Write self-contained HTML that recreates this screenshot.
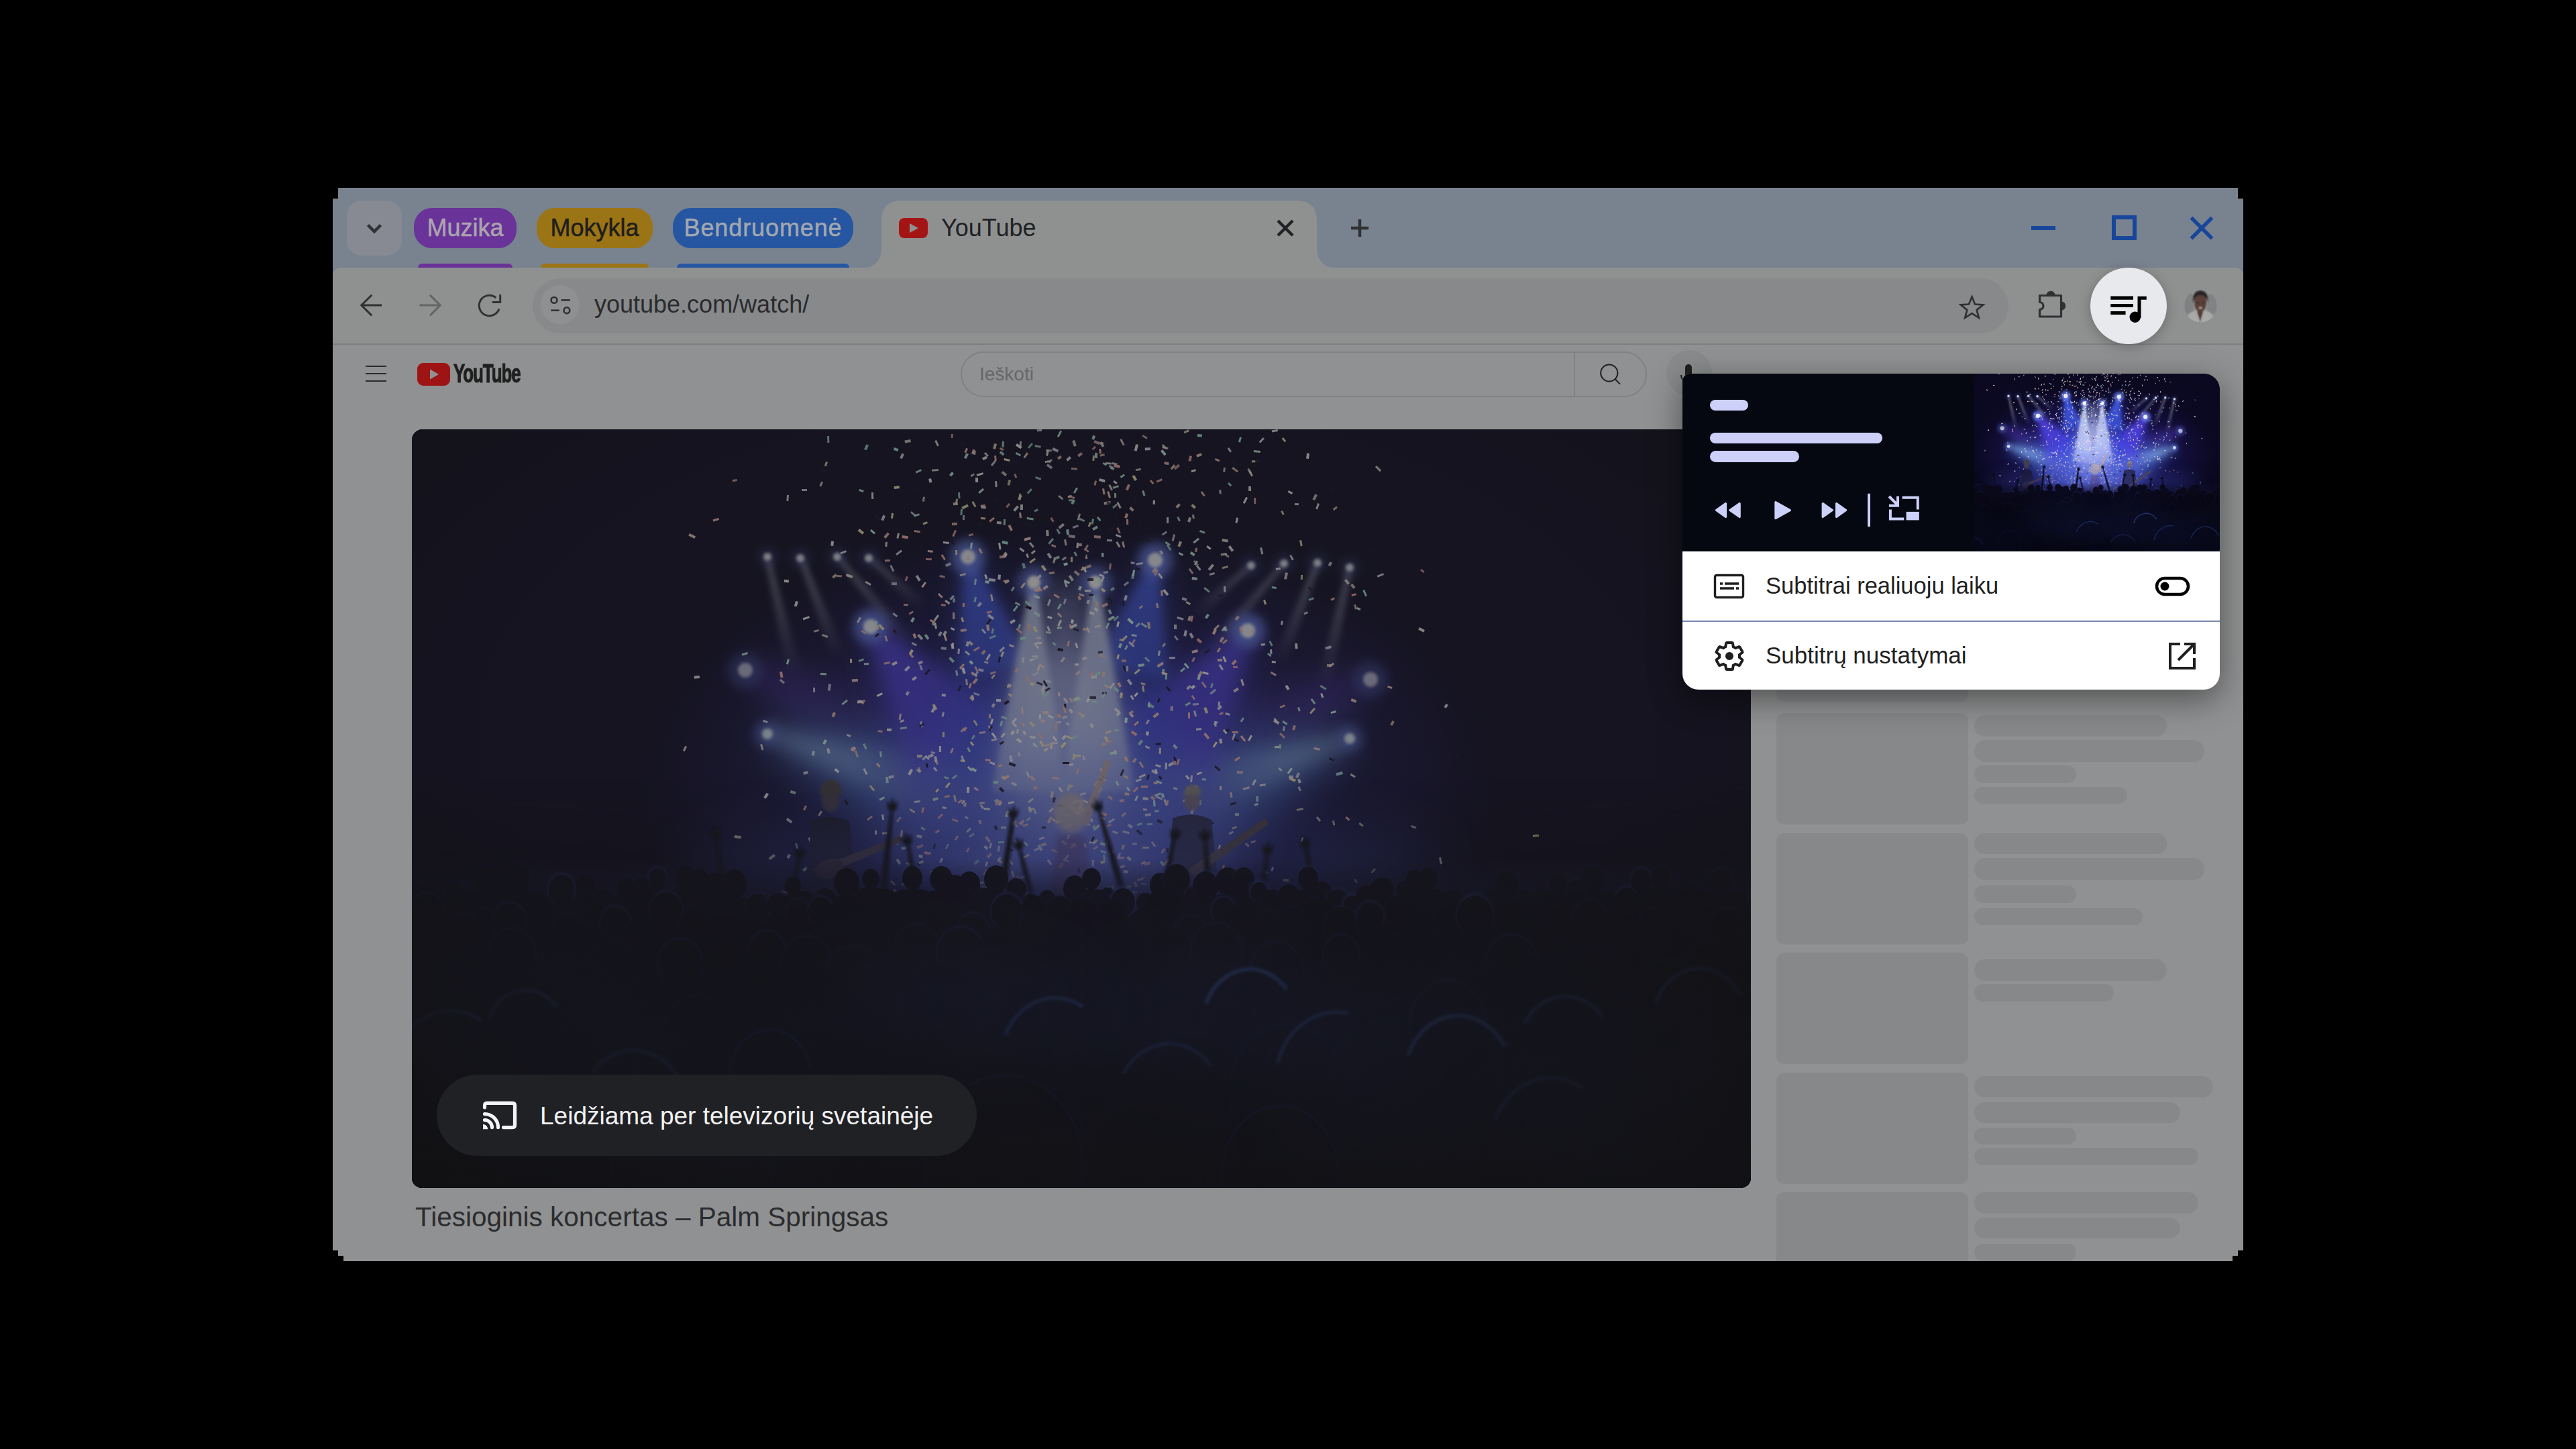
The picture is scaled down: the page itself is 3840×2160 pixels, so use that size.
<!DOCTYPE html>
<html><head><meta charset="utf-8">
<style>
*{box-sizing:border-box;margin:0;padding:0}
html,body{width:3840px;height:2160px;background:#000;overflow:hidden;font-family:"Liberation Sans",sans-serif}
.a{position:absolute}
#win{position:absolute;left:496px;top:280px;width:2848px;height:1600px;background:#79828f;overflow:hidden}
.chip{position:absolute;top:30px;height:60px;border-radius:27px;font-size:36px;line-height:60px;text-align:center;white-space:nowrap;-webkit-text-stroke:0.5px currentColor}
.ul{position:absolute;top:113px;height:12px;border-radius:6px}
.txt{position:absolute;white-space:nowrap;line-height:1}
svg{display:block}
</style></head><body>
<svg width="0" height="0" style="position:absolute"><defs><symbol id="scene" viewBox="0 0 1996 1131">
<rect width="1996" height="1131" fill="#0b0822"/>
<filter id="b150" x="-80%" y="-80%" width="260%" height="260%"><feGaussianBlur stdDeviation="150"/></filter>
<filter id="b90" x="-80%" y="-80%" width="260%" height="260%"><feGaussianBlur stdDeviation="90"/></filter>
<filter id="b60" x="-80%" y="-80%" width="260%" height="260%"><feGaussianBlur stdDeviation="60"/></filter>
<filter id="b40" x="-80%" y="-80%" width="260%" height="260%"><feGaussianBlur stdDeviation="40"/></filter>
<filter id="b30" x="-80%" y="-80%" width="260%" height="260%"><feGaussianBlur stdDeviation="30"/></filter>
<filter id="b25" x="-80%" y="-80%" width="260%" height="260%"><feGaussianBlur stdDeviation="25"/></filter>
<filter id="b20" x="-80%" y="-80%" width="260%" height="260%"><feGaussianBlur stdDeviation="20"/></filter>
<filter id="b14" x="-80%" y="-80%" width="260%" height="260%"><feGaussianBlur stdDeviation="14"/></filter>
<filter id="b12" x="-80%" y="-80%" width="260%" height="260%"><feGaussianBlur stdDeviation="12"/></filter>
<filter id="b8" x="-80%" y="-80%" width="260%" height="260%"><feGaussianBlur stdDeviation="8"/></filter>
<filter id="b5" x="-80%" y="-80%" width="260%" height="260%"><feGaussianBlur stdDeviation="5"/></filter>
<filter id="b4" x="-80%" y="-80%" width="260%" height="260%"><feGaussianBlur stdDeviation="4"/></filter>
<filter id="b2" x="-80%" y="-80%" width="260%" height="260%"><feGaussianBlur stdDeviation="2"/></filter>
<radialGradient id="vig" cx="0.49" cy="0.40" r="0.72"><stop offset="0" stop-color="#000" stop-opacity="0"/><stop offset="0.6" stop-color="#000" stop-opacity="0.05"/><stop offset="1" stop-color="#000" stop-opacity="0.45"/></radialGradient>
<radialGradient id="glow1" gradientUnits="userSpaceOnUse" cx="976" cy="520" r="760" gradientTransform="translate(976 520) scale(1 0.6) translate(-976 -520)"><stop offset="0" stop-color="#4048d0"/><stop offset="0.25" stop-color="#2a2a90"/><stop offset="0.5" stop-color="#16124a"/><stop offset="0.85" stop-color="#0b0822"/><stop offset="1" stop-color="#0b0822" stop-opacity="0"/></radialGradient>
<linearGradient id="g1" gradientUnits="userSpaceOnUse" x1="497" y1="360" x2="690" y2="440"><stop offset="0" stop-color="#6040d8" stop-opacity="0.75"/><stop offset="1" stop-color="#6040d8" stop-opacity="0.1"/></linearGradient>
<linearGradient id="g2" gradientUnits="userSpaceOnUse" x1="1429" y1="373" x2="1240" y2="450"><stop offset="0" stop-color="#6040d8" stop-opacity="0.75"/><stop offset="1" stop-color="#6040d8" stop-opacity="0.1"/></linearGradient>
<linearGradient id="g3" gradientUnits="userSpaceOnUse" x1="530" y1="453" x2="1010" y2="620"><stop offset="0" stop-color="#5a8cf0" stop-opacity="0.7"/><stop offset="1" stop-color="#5a8cf0" stop-opacity="0.15"/></linearGradient>
<linearGradient id="g4" gradientUnits="userSpaceOnUse" x1="530" y1="453" x2="880" y2="570"><stop offset="0" stop-color="#a0c8ff" stop-opacity="0.65"/><stop offset="1" stop-color="#a0c8ff" stop-opacity="0.0"/></linearGradient>
<linearGradient id="g5" gradientUnits="userSpaceOnUse" x1="1398" y1="461" x2="930" y2="630"><stop offset="0" stop-color="#5a8cf0" stop-opacity="0.7"/><stop offset="1" stop-color="#5a8cf0" stop-opacity="0.15"/></linearGradient>
<linearGradient id="g6" gradientUnits="userSpaceOnUse" x1="1398" y1="461" x2="1060" y2="575"><stop offset="0" stop-color="#a0c8ff" stop-opacity="0.65"/><stop offset="1" stop-color="#a0c8ff" stop-opacity="0.0"/></linearGradient>
<linearGradient id="g7" gradientUnits="userSpaceOnUse" x1="684" y1="294" x2="820" y2="480"><stop offset="0" stop-color="#5a48ff" stop-opacity="0.95"/><stop offset="1" stop-color="#5a48ff" stop-opacity="0.4"/></linearGradient>
<linearGradient id="g8" gradientUnits="userSpaceOnUse" x1="684" y1="294" x2="900" y2="650"><stop offset="0" stop-color="#4a40e0" stop-opacity="0.7"/><stop offset="1" stop-color="#4a40e0" stop-opacity="0.2"/></linearGradient>
<linearGradient id="g9" gradientUnits="userSpaceOnUse" x1="1246" y1="300" x2="1120" y2="480"><stop offset="0" stop-color="#5a48ff" stop-opacity="0.95"/><stop offset="1" stop-color="#5a48ff" stop-opacity="0.4"/></linearGradient>
<linearGradient id="g10" gradientUnits="userSpaceOnUse" x1="1246" y1="300" x2="1040" y2="650"><stop offset="0" stop-color="#4a40e0" stop-opacity="0.7"/><stop offset="1" stop-color="#4a40e0" stop-opacity="0.2"/></linearGradient>
<linearGradient id="g11" gradientUnits="userSpaceOnUse" x1="829" y1="190" x2="870" y2="360"><stop offset="0" stop-color="#4a68ff" stop-opacity="0.9"/><stop offset="1" stop-color="#4a68ff" stop-opacity="0.5"/></linearGradient>
<linearGradient id="g12" gradientUnits="userSpaceOnUse" x1="829" y1="190" x2="930" y2="650"><stop offset="0" stop-color="#3a50e8" stop-opacity="0.6"/><stop offset="1" stop-color="#3a50e8" stop-opacity="0.25"/></linearGradient>
<linearGradient id="g13" gradientUnits="userSpaceOnUse" x1="1108" y1="195" x2="1070" y2="360"><stop offset="0" stop-color="#4a68ff" stop-opacity="0.9"/><stop offset="1" stop-color="#4a68ff" stop-opacity="0.5"/></linearGradient>
<linearGradient id="g14" gradientUnits="userSpaceOnUse" x1="1108" y1="195" x2="1010" y2="650"><stop offset="0" stop-color="#3a50e8" stop-opacity="0.6"/><stop offset="1" stop-color="#3a50e8" stop-opacity="0.25"/></linearGradient>
<linearGradient id="g15" gradientUnits="userSpaceOnUse" x1="927" y1="228" x2="920" y2="540"><stop offset="0" stop-color="#d0dcff" stop-opacity="0.95"/><stop offset="1" stop-color="#d0dcff" stop-opacity="0.55"/></linearGradient>
<linearGradient id="g16" gradientUnits="userSpaceOnUse" x1="1019" y1="228" x2="1022" y2="540"><stop offset="0" stop-color="#d0dcff" stop-opacity="0.95"/><stop offset="1" stop-color="#d0dcff" stop-opacity="0.55"/></linearGradient>
<linearGradient id="g17" gradientUnits="userSpaceOnUse" x1="972" y1="235" x2="970" y2="700"><stop offset="0" stop-color="#a8b8f0" stop-opacity="0.55"/><stop offset="1" stop-color="#a8b8f0" stop-opacity="0.25"/></linearGradient>
<linearGradient id="g18" gradientUnits="userSpaceOnUse" x1="530" y1="191" x2="571" y2="367"><stop offset="0" stop-color="#d0d4f0" stop-opacity="0.55"/><stop offset="1" stop-color="#d0d4f0" stop-opacity="0"/></linearGradient>
<linearGradient id="g19" gradientUnits="userSpaceOnUse" x1="580" y1="192" x2="638" y2="343"><stop offset="0" stop-color="#d0d4f0" stop-opacity="0.55"/><stop offset="1" stop-color="#d0d4f0" stop-opacity="0"/></linearGradient>
<linearGradient id="g20" gradientUnits="userSpaceOnUse" x1="635" y1="190" x2="740" y2="319"><stop offset="0" stop-color="#d0d4f0" stop-opacity="0.5"/><stop offset="1" stop-color="#d0d4f0" stop-opacity="0"/></linearGradient>
<linearGradient id="g21" gradientUnits="userSpaceOnUse" x1="682" y1="192" x2="764" y2="266"><stop offset="0" stop-color="#d0d4f0" stop-opacity="0.45"/><stop offset="1" stop-color="#d0d4f0" stop-opacity="0"/></linearGradient>
<linearGradient id="g22" gradientUnits="userSpaceOnUse" x1="1251" y1="203" x2="1166" y2="277"><stop offset="0" stop-color="#d0d4f0" stop-opacity="0.45"/><stop offset="1" stop-color="#d0d4f0" stop-opacity="0"/></linearGradient>
<linearGradient id="g23" gradientUnits="userSpaceOnUse" x1="1300" y1="200" x2="1190" y2="329"><stop offset="0" stop-color="#d0d4f0" stop-opacity="0.5"/><stop offset="1" stop-color="#d0d4f0" stop-opacity="0"/></linearGradient>
<linearGradient id="g24" gradientUnits="userSpaceOnUse" x1="1350" y1="199" x2="1292" y2="350"><stop offset="0" stop-color="#d0d4f0" stop-opacity="0.55"/><stop offset="1" stop-color="#d0d4f0" stop-opacity="0"/></linearGradient>
<linearGradient id="g25" gradientUnits="userSpaceOnUse" x1="1398" y1="206" x2="1359" y2="382"><stop offset="0" stop-color="#d0d4f0" stop-opacity="0.55"/><stop offset="1" stop-color="#d0d4f0" stop-opacity="0"/></linearGradient>
<linearGradient id="cbg" x1="0" y1="0" x2="0" y2="1"><stop offset="0" stop-color="#18184a" stop-opacity="0"/><stop offset="0.15" stop-color="#141438"/><stop offset="1" stop-color="#0e1026"/></linearGradient>
<linearGradient id="cfade" x1="0" y1="0" x2="0" y2="1"><stop offset="0" stop-color="#05050f" stop-opacity="0"/><stop offset="1" stop-color="#05050f" stop-opacity="0.35"/></linearGradient>
<linearGradient id="hvig" x1="0" y1="0" x2="1" y2="0"><stop offset="0" stop-color="#06050f" stop-opacity="0.75"/><stop offset="0.3" stop-color="#06050f" stop-opacity="0.35"/><stop offset="0.5" stop-color="#06050f" stop-opacity="0"/><stop offset="0.7" stop-color="#06050f" stop-opacity="0.35"/><stop offset="1" stop-color="#06050f" stop-opacity="0.75"/></linearGradient>
<linearGradient id="hvm" x1="0" y1="0" x2="0" y2="1"><stop offset="0" stop-color="#fff" stop-opacity="0"/><stop offset="0.35" stop-color="#fff" stop-opacity="1"/><stop offset="1" stop-color="#fff" stop-opacity="1"/></linearGradient><mask id="hvmask" maskUnits="userSpaceOnUse" x="0" y="0" width="1996" height="1131"><rect x="0" y="520" width="1996" height="611" fill="url(#hvm)"/></mask>
<rect width="1996" height="1131" fill="url(#glow1)"/>
<path d="M495 366 L667 495 L713 385 L499 354 Z" fill="url(#g1)" filter="url(#b25)"/>
<path d="M1427 367 L1217 394 L1263 506 L1431 379 Z" fill="url(#g2)" filter="url(#b25)"/>
<path d="M527 461 L948 799 L1072 441 L533 445 Z" fill="url(#g3)" filter="url(#b30)"/>
<path d="M528 459 L861 627 L899 513 L532 447 Z" fill="url(#g4)" filter="url(#b14)"/>
<path d="M1395 453 L865 451 L995 809 L1401 469 Z" fill="url(#g5)" filter="url(#b30)"/>
<path d="M1396 455 L1041 518 L1079 632 L1400 467 Z" fill="url(#g6)" filter="url(#b14)"/>
<path d="M679 298 L755 527 L885 433 L689 290 Z" fill="url(#g7)" filter="url(#b14)"/>
<path d="M679 297 L763 733 L1037 567 L689 291 Z" fill="url(#g8)" filter="url(#b30)"/>
<path d="M1241 297 L1054 434 L1186 526 L1251 303 Z" fill="url(#g9)" filter="url(#b14)"/>
<path d="M1241 297 L902 569 L1178 731 L1251 303 Z" fill="url(#g10)" filter="url(#b30)"/>
<path d="M823 191 L817 373 L923 347 L835 189 Z" fill="url(#g11)" filter="url(#b8)"/>
<path d="M823 191 L783 682 L1077 618 L835 189 Z" fill="url(#g12)" filter="url(#b25)"/>
<path d="M1102 194 L1016 348 L1124 372 L1114 196 Z" fill="url(#g13)" filter="url(#b8)"/>
<path d="M1102 194 L863 618 L1157 682 L1114 196 Z" fill="url(#g14)" filter="url(#b25)"/>
<path d="M922 228 L865 539 L975 541 L932 228 Z" fill="url(#g15)" filter="url(#b5)"/>
<path d="M1014 228 L967 541 L1077 539 L1024 228 Z" fill="url(#g16)" filter="url(#b5)"/>
<path d="M942 235 L820 699 L1120 701 L1002 235 Z" fill="url(#g17)" filter="url(#b25)"/>
<ellipse cx="970" cy="470" rx="80" ry="150" fill="#d8e0ff" opacity="0.45" filter="url(#b25)"/>
<ellipse cx="976" cy="600" rx="260" ry="120" fill="#6878e8" opacity="0.4" filter="url(#b40)"/>
<path d="M527 192 L560 369 L582 365 L533 190 Z" fill="url(#g18)" filter="url(#b5)"/>
<path d="M577 193 L628 347 L648 339 L583 191 Z" fill="url(#g19)" filter="url(#b5)"/>
<path d="M633 192 L731 326 L749 312 L637 188 Z" fill="url(#g20)" filter="url(#b5)"/>
<path d="M680 194 L757 274 L771 258 L684 190 Z" fill="url(#g21)" filter="url(#b5)"/>
<path d="M1249 201 L1159 269 L1173 285 L1253 205 Z" fill="url(#g22)" filter="url(#b5)"/>
<path d="M1298 198 L1182 322 L1198 336 L1302 202 Z" fill="url(#g23)" filter="url(#b5)"/>
<path d="M1347 198 L1282 346 L1302 354 L1353 200 Z" fill="url(#g24)" filter="url(#b5)"/>
<path d="M1395 205 L1348 380 L1370 384 L1401 207 Z" fill="url(#g25)" filter="url(#b5)"/>
<circle cx="530" cy="190" r="14" fill="#7088ff" opacity="0.25" filter="url(#b8)"/>
<circle cx="530" cy="190" r="6" fill="#e0e0f0" filter="url(#b2)"/>
<circle cx="579" cy="192" r="14" fill="#7088ff" opacity="0.25" filter="url(#b8)"/>
<circle cx="579" cy="192" r="6" fill="#e0e0f0" filter="url(#b2)"/>
<circle cx="634" cy="190" r="14" fill="#7088ff" opacity="0.25" filter="url(#b8)"/>
<circle cx="634" cy="190" r="6" fill="#e0e0f0" filter="url(#b2)"/>
<circle cx="681" cy="192" r="14" fill="#7088ff" opacity="0.25" filter="url(#b8)"/>
<circle cx="681" cy="192" r="6" fill="#e0e0f0" filter="url(#b2)"/>
<circle cx="1251" cy="203" r="14" fill="#7088ff" opacity="0.25" filter="url(#b8)"/>
<circle cx="1251" cy="203" r="6" fill="#e0e0f0" filter="url(#b2)"/>
<circle cx="1300" cy="200" r="14" fill="#7088ff" opacity="0.25" filter="url(#b8)"/>
<circle cx="1300" cy="200" r="6" fill="#e0e0f0" filter="url(#b2)"/>
<circle cx="1350" cy="199" r="14" fill="#7088ff" opacity="0.25" filter="url(#b8)"/>
<circle cx="1350" cy="199" r="6" fill="#e0e0f0" filter="url(#b2)"/>
<circle cx="1398" cy="206" r="14" fill="#7088ff" opacity="0.25" filter="url(#b8)"/>
<circle cx="1398" cy="206" r="6" fill="#e0e0f0" filter="url(#b2)"/>
<circle cx="829" cy="190" r="26" fill="#7088ff" opacity="0.8" filter="url(#b8)"/>
<circle cx="829" cy="190" r="11" fill="#f0f4ff" filter="url(#b2)"/>
<circle cx="1108" cy="195" r="26" fill="#7088ff" opacity="0.8" filter="url(#b8)"/>
<circle cx="1108" cy="195" r="11" fill="#f0f4ff" filter="url(#b2)"/>
<circle cx="927" cy="228" r="24" fill="#7088ff" opacity="0.7" filter="url(#b8)"/>
<circle cx="927" cy="228" r="10" fill="#ffffff" filter="url(#b2)"/>
<circle cx="1019" cy="228" r="24" fill="#7088ff" opacity="0.7" filter="url(#b8)"/>
<circle cx="1019" cy="228" r="10" fill="#ffffff" filter="url(#b2)"/>
<circle cx="684" cy="294" r="26" fill="#7088ff" opacity="0.8" filter="url(#b8)"/>
<circle cx="684" cy="294" r="11" fill="#f0f4ff" filter="url(#b2)"/>
<circle cx="1246" cy="300" r="26" fill="#7088ff" opacity="0.8" filter="url(#b8)"/>
<circle cx="1246" cy="300" r="11" fill="#f0f4ff" filter="url(#b2)"/>
<circle cx="497" cy="359" r="26" fill="#7088ff" opacity="0.3" filter="url(#b8)"/>
<circle cx="497" cy="359" r="11" fill="#b8b8d8" filter="url(#b2)"/>
<circle cx="1429" cy="373" r="26" fill="#7088ff" opacity="0.3" filter="url(#b8)"/>
<circle cx="1429" cy="373" r="11" fill="#b8b8d8" filter="url(#b2)"/>
<circle cx="530" cy="454" r="19" fill="#7088ff" opacity="0.5" filter="url(#b8)"/>
<circle cx="530" cy="454" r="8" fill="#d8e8f8" filter="url(#b2)"/>
<circle cx="1398" cy="461" r="19" fill="#7088ff" opacity="0.5" filter="url(#b8)"/>
<circle cx="1398" cy="461" r="8" fill="#d8e8f8" filter="url(#b2)"/>
<rect x="563" y="343" width="8" height="3" fill="#d0fff0" opacity="0.95" transform="rotate(106 563 343)"/>
<rect x="813" y="359" width="8" height="3" fill="#d0fff0" opacity="0.77" transform="rotate(80 813 359)"/>
<rect x="955" y="579" width="10" height="4" fill="#ffc8b8" opacity="0.91" transform="rotate(118 955 579)"/>
<rect x="921" y="457" width="9" height="3" fill="#ffffff" opacity="0.90" transform="rotate(6 921 457)"/>
<rect x="849" y="559" width="7" height="3" fill="#fff0f0" opacity="0.92" transform="rotate(53 849 559)"/>
<rect x="1208" y="346" width="7" height="4" fill="#ffd8d0" opacity="0.93" transform="rotate(179 1208 346)"/>
<rect x="996" y="248" width="6" height="4" fill="#ffb8b0" opacity="0.85" transform="rotate(72 996 248)"/>
<rect x="1148" y="674" width="9" height="3" fill="#fff0f0" opacity="0.87" transform="rotate(38 1148 674)"/>
<rect x="910" y="688" width="9" height="4" fill="#ffd8d0" opacity="0.83" transform="rotate(49 910 688)"/>
<rect x="1018" y="16" width="8" height="4" fill="#ffd8d0" opacity="0.75" transform="rotate(24 1018 16)"/>
<rect x="681" y="351" width="7" height="3" fill="#d0fff0" opacity="0.85" transform="rotate(177 681 351)"/>
<rect x="1000" y="296" width="8" height="4" fill="#ffc8b8" opacity="0.83" transform="rotate(0 1000 296)"/>
<rect x="1027" y="627" width="9" height="3" fill="#d0fff0" opacity="0.80" transform="rotate(18 1027 627)"/>
<rect x="1160" y="207" width="9" height="3" fill="#ffd8d0" opacity="0.77" transform="rotate(53 1160 207)"/>
<rect x="954" y="171" width="7" height="3" fill="#ffc8b8" opacity="0.87" transform="rotate(23 954 171)"/>
<rect x="949" y="425" width="9" height="3" fill="#ffffff" opacity="0.95" transform="rotate(28 949 425)"/>
<rect x="1090" y="201" width="10" height="3" fill="#e8e8ff" opacity="0.90" transform="rotate(171 1090 201)"/>
<rect x="1272" y="322" width="6" height="3" fill="#ffffff" opacity="0.93" transform="rotate(173 1272 322)"/>
<rect x="607" y="301" width="8" height="3" fill="#ffd8d0" opacity="0.78" transform="rotate(167 607 301)"/>
<rect x="1179" y="361" width="9" height="3" fill="#ffffff" opacity="0.98" transform="rotate(13 1179 361)"/>
<rect x="1124" y="167" width="8" height="3" fill="#b0f0e0" opacity="0.88" transform="rotate(32 1124 167)"/>
<rect x="993" y="683" width="6" height="3" fill="#b0f0e0" opacity="0.91" transform="rotate(81 993 683)"/>
<rect x="880" y="502" width="6" height="3" fill="#ffb8b0" opacity="0.99" transform="rotate(164 880 502)"/>
<rect x="926" y="22" width="9" height="3" fill="#b0f0e0" opacity="0.78" transform="rotate(131 926 22)"/>
<rect x="808" y="66" width="6" height="4" fill="#d0fff0" opacity="0.95" transform="rotate(133 808 66)"/>
<rect x="1034" y="646" width="7" height="4" fill="#fff0c0" opacity="0.99" transform="rotate(162 1034 646)"/>
<rect x="945" y="30" width="9" height="3" fill="#ffd8d0" opacity="0.77" transform="rotate(2 945 30)"/>
<rect x="976" y="468" width="10" height="4" fill="#fff0c0" opacity="0.98" transform="rotate(131 976 468)"/>
<rect x="758" y="504" width="8" height="3" fill="#ffb8b0" opacity="0.90" transform="rotate(93 758 504)"/>
<rect x="1033" y="362" width="7" height="4" fill="#ffc8b8" opacity="0.92" transform="rotate(90 1033 362)"/>
<rect x="1126" y="366" width="7" height="3" fill="#b0f0e0" opacity="0.91" transform="rotate(93 1126 366)"/>
<rect x="863" y="336" width="10" height="3" fill="#ffffff" opacity="0.91" transform="rotate(120 863 336)"/>
<rect x="980" y="575" width="7" height="3" fill="#ffffff" opacity="0.78" transform="rotate(166 980 575)"/>
<rect x="844" y="373" width="9" height="4" fill="#ffb8b0" opacity="0.96" transform="rotate(128 844 373)"/>
<rect x="562" y="98" width="9" height="3" fill="#ffffff" opacity="0.83" transform="rotate(94 562 98)"/>
<rect x="1060" y="598" width="10" height="3" fill="#fff0f0" opacity="0.82" transform="rotate(13 1060 598)"/>
<rect x="905" y="447" width="7" height="3" fill="#ffffff" opacity="0.78" transform="rotate(102 905 447)"/>
<rect x="833" y="344" width="6" height="4" fill="#d0fff0" opacity="0.95" transform="rotate(43 833 344)"/>
<rect x="1052" y="690" width="8" height="3" fill="#ffd8d0" opacity="0.92" transform="rotate(66 1052 690)"/>
<rect x="1036" y="164" width="8" height="3" fill="#e8e8ff" opacity="0.88" transform="rotate(2 1036 164)"/>
<rect x="1022" y="35" width="8" height="4" fill="#d0fff0" opacity="0.85" transform="rotate(90 1022 35)"/>
<rect x="1329" y="567" width="10" height="3" fill="#fff0c0" opacity="0.78" transform="rotate(168 1329 567)"/>
<rect x="674" y="344" width="8" height="3" fill="#b0f0e0" opacity="0.87" transform="rotate(158 674 344)"/>
<rect x="662" y="476" width="7" height="4" fill="#ffffff" opacity="0.98" transform="rotate(147 662 476)"/>
<rect x="985" y="107" width="6" height="3" fill="#b0f0e0" opacity="0.82" transform="rotate(176 985 107)"/>
<rect x="1178" y="520" width="6" height="3" fill="#b0f0e0" opacity="0.89" transform="rotate(7 1178 520)"/>
<rect x="927" y="552" width="9" height="3" fill="#d0fff0" opacity="0.88" transform="rotate(144 927 552)"/>
<rect x="980" y="499" width="10" height="3" fill="#181028" opacity="0.96" transform="rotate(180 980 499)"/>
<rect x="1198" y="501" width="10" height="3" fill="#181028" opacity="0.89" transform="rotate(40 1198 501)"/>
<rect x="896" y="593" width="8" height="3" fill="#181028" opacity="0.81" transform="rotate(93 896 593)"/>
<rect x="1368" y="489" width="8" height="3" fill="#181028" opacity="0.88" transform="rotate(25 1368 489)"/>
<rect x="863" y="424" width="7" height="3" fill="#ffc8b8" opacity="0.84" transform="rotate(91 863 424)"/>
<rect x="1401" y="401" width="8" height="4" fill="#ffd8d0" opacity="0.92" transform="rotate(22 1401 401)"/>
<rect x="1087" y="61" width="8" height="3" fill="#fff0c0" opacity="0.82" transform="rotate(172 1087 61)"/>
<rect x="1122" y="357" width="9" height="4" fill="#b0f0e0" opacity="0.78" transform="rotate(86 1122 357)"/>
<rect x="1124" y="320" width="6" height="3" fill="#fff0f0" opacity="0.76" transform="rotate(126 1124 320)"/>
<rect x="1128" y="131" width="9" height="3" fill="#e8e8ff" opacity="0.93" transform="rotate(90 1128 131)"/>
<rect x="987" y="106" width="8" height="3" fill="#181028" opacity="0.97" transform="rotate(36 987 106)"/>
<rect x="749" y="24" width="8" height="3" fill="#181028" opacity="0.91" transform="rotate(155 749 24)"/>
<rect x="702" y="395" width="9" height="3" fill="#ffffff" opacity="0.98" transform="rotate(154 702 395)"/>
<rect x="903" y="460" width="8" height="4" fill="#ffffff" opacity="0.97" transform="rotate(35 903 460)"/>
<rect x="1072" y="115" width="7" height="4" fill="#ffd8d0" opacity="0.86" transform="rotate(47 1072 115)"/>
<rect x="660" y="663" width="7" height="3" fill="#ffd8d0" opacity="0.80" transform="rotate(144 660 663)"/>
<rect x="891" y="496" width="10" height="4" fill="#181028" opacity="0.91" transform="rotate(21 891 496)"/>
<rect x="1339" y="268" width="9" height="3" fill="#181028" opacity="0.90" transform="rotate(4 1339 268)"/>
<rect x="972" y="640" width="8" height="3" fill="#d0fff0" opacity="0.96" transform="rotate(21 972 640)"/>
<rect x="1061" y="694" width="6" height="4" fill="#ffd8d0" opacity="0.83" transform="rotate(83 1061 694)"/>
<rect x="937" y="353" width="8" height="3" fill="#fff0f0" opacity="0.91" transform="rotate(108 937 353)"/>
<rect x="1033" y="39" width="7" height="3" fill="#ffc8b8" opacity="0.79" transform="rotate(166 1033 39)"/>
<rect x="1168" y="384" width="6" height="4" fill="#ffffff" opacity="0.98" transform="rotate(144 1168 384)"/>
<rect x="1072" y="422" width="7" height="4" fill="#ffd8d0" opacity="0.94" transform="rotate(50 1072 422)"/>
<rect x="1229" y="558" width="9" height="3" fill="#181028" opacity="0.92" transform="rotate(161 1229 558)"/>
<rect x="996" y="552" width="9" height="3" fill="#e8e8ff" opacity="0.78" transform="rotate(62 996 552)"/>
<rect x="764" y="629" width="10" height="4" fill="#ffb8b0" opacity="0.99" transform="rotate(9 764 629)"/>
<rect x="821" y="486" width="8" height="3" fill="#e8e8ff" opacity="0.91" transform="rotate(70 821 486)"/>
<rect x="1230" y="509" width="9" height="4" fill="#ffc8b8" opacity="0.78" transform="rotate(4 1230 509)"/>
<rect x="766" y="192" width="9" height="3" fill="#ffb8b0" opacity="0.81" transform="rotate(2 766 192)"/>
<rect x="1062" y="640" width="8" height="3" fill="#ffc8b8" opacity="0.96" transform="rotate(174 1062 640)"/>
<rect x="727" y="88" width="8" height="4" fill="#fff0c0" opacity="0.98" transform="rotate(172 727 88)"/>
<rect x="1068" y="134" width="8" height="3" fill="#ffc8b8" opacity="0.90" transform="rotate(89 1068 134)"/>
<rect x="817" y="327" width="8" height="3" fill="#e8e8ff" opacity="0.91" transform="rotate(95 817 327)"/>
<rect x="982" y="416" width="7" height="4" fill="#fff0f0" opacity="0.94" transform="rotate(53 982 416)"/>
<rect x="839" y="433" width="9" height="3" fill="#fff0c0" opacity="0.76" transform="rotate(57 839 433)"/>
<rect x="815" y="693" width="10" height="3" fill="#fff0c0" opacity="0.93" transform="rotate(163 815 693)"/>
<rect x="978" y="202" width="6" height="4" fill="#d0fff0" opacity="0.99" transform="rotate(164 978 202)"/>
<rect x="913" y="583" width="8" height="3" fill="#e8e8ff" opacity="0.78" transform="rotate(112 913 583)"/>
<rect x="901" y="612" width="7" height="3" fill="#ffc8b8" opacity="0.82" transform="rotate(75 901 612)"/>
<rect x="1067" y="430" width="8" height="4" fill="#d0fff0" opacity="0.99" transform="rotate(96 1067 430)"/>
<rect x="983" y="530" width="10" height="4" fill="#b0f0e0" opacity="0.82" transform="rotate(112 983 530)"/>
<rect x="1074" y="449" width="9" height="4" fill="#ffb8b0" opacity="0.94" transform="rotate(34 1074 449)"/>
<rect x="979" y="157" width="10" height="4" fill="#fff0f0" opacity="0.75" transform="rotate(7 979 157)"/>
<rect x="1505" y="208" width="6" height="3" fill="#ffb8b0" opacity="0.77" transform="rotate(40 1505 208)"/>
<rect x="872" y="77" width="9" height="3" fill="#ffffff" opacity="0.83" transform="rotate(86 872 77)"/>
<rect x="753" y="371" width="7" height="4" fill="#e8e8ff" opacity="0.95" transform="rotate(144 753 371)"/>
<rect x="992" y="458" width="8" height="3" fill="#b0f0e0" opacity="0.79" transform="rotate(146 992 458)"/>
<rect x="834" y="596" width="8" height="3" fill="#d0fff0" opacity="0.86" transform="rotate(137 834 596)"/>
<rect x="1299" y="286" width="6" height="3" fill="#e8e8ff" opacity="0.95" transform="rotate(102 1299 286)"/>
<rect x="1205" y="350" width="9" height="3" fill="#ffffff" opacity="0.90" transform="rotate(56 1205 350)"/>
<rect x="632" y="505" width="7" height="4" fill="#ffffff" opacity="0.93" transform="rotate(39 632 505)"/>
<rect x="987" y="284" width="6" height="4" fill="#ffffff" opacity="0.98" transform="rotate(102 987 284)"/>
<rect x="1030" y="333" width="7" height="3" fill="#181028" opacity="0.81" transform="rotate(168 1030 333)"/>
<rect x="821" y="280" width="7" height="3" fill="#fff0c0" opacity="0.95" transform="rotate(71 821 280)"/>
<rect x="839" y="533" width="7" height="3" fill="#ffd8d0" opacity="0.94" transform="rotate(32 839 533)"/>
<rect x="1128" y="624" width="7" height="3" fill="#181028" opacity="0.79" transform="rotate(93 1128 624)"/>
<rect x="1338" y="234" width="8" height="3" fill="#181028" opacity="0.77" transform="rotate(55 1338 234)"/>
<rect x="1025" y="73" width="9" height="4" fill="#ffffff" opacity="0.91" transform="rotate(15 1025 73)"/>
<rect x="1054" y="86" width="9" height="3" fill="#b0f0e0" opacity="0.94" transform="rotate(163 1054 86)"/>
<rect x="791" y="303" width="7" height="4" fill="#e8e8ff" opacity="0.87" transform="rotate(121 791 303)"/>
<rect x="1233" y="576" width="6" height="4" fill="#b0f0e0" opacity="0.96" transform="rotate(177 1233 576)"/>
<rect x="1102" y="576" width="9" height="4" fill="#ffffff" opacity="0.76" transform="rotate(172 1102 576)"/>
<rect x="1069" y="281" width="10" height="4" fill="#d0fff0" opacity="1.00" transform="rotate(44 1069 281)"/>
<rect x="982" y="290" width="7" height="3" fill="#ffb8b0" opacity="0.82" transform="rotate(76 982 290)"/>
<rect x="644" y="628" width="7" height="3" fill="#fff0f0" opacity="0.94" transform="rotate(166 644 628)"/>
<rect x="1028" y="18" width="8" height="4" fill="#ffffff" opacity="0.80" transform="rotate(56 1028 18)"/>
<rect x="1003" y="177" width="8" height="3" fill="#ffb8b0" opacity="0.85" transform="rotate(33 1003 177)"/>
<rect x="1307" y="643" width="10" height="3" fill="#181028" opacity="0.87" transform="rotate(170 1307 643)"/>
<rect x="1295" y="209" width="7" height="3" fill="#e8e8ff" opacity="0.97" transform="rotate(172 1295 209)"/>
<rect x="697" y="306" width="7" height="3" fill="#181028" opacity="0.95" transform="rotate(144 697 306)"/>
<rect x="993" y="556" width="10" height="4" fill="#b0f0e0" opacity="0.86" transform="rotate(157 993 556)"/>
<rect x="913" y="199" width="8" height="4" fill="#b0f0e0" opacity="0.79" transform="rotate(75 913 199)"/>
<rect x="1017" y="642" width="9" height="3" fill="#fff0f0" opacity="0.79" transform="rotate(93 1017 642)"/>
<rect x="875" y="554" width="6" height="4" fill="#d0fff0" opacity="0.77" transform="rotate(152 875 554)"/>
<rect x="958" y="215" width="8" height="3" fill="#ffc8b8" opacity="0.89" transform="rotate(172 958 215)"/>
<rect x="889" y="379" width="6" height="3" fill="#ffffff" opacity="0.77" transform="rotate(35 889 379)"/>
<rect x="1043" y="590" width="8" height="3" fill="#ffb8b0" opacity="0.83" transform="rotate(150 1043 590)"/>
<rect x="1211" y="311" width="8" height="4" fill="#ffd8d0" opacity="0.84" transform="rotate(120 1211 311)"/>
<rect x="1136" y="499" width="8" height="4" fill="#ffffff" opacity="0.86" transform="rotate(149 1136 499)"/>
<rect x="1104" y="614" width="9" height="3" fill="#ffd8d0" opacity="0.86" transform="rotate(53 1104 614)"/>
<rect x="1299" y="12" width="7" height="3" fill="#fff0c0" opacity="0.98" transform="rotate(52 1299 12)"/>
<rect x="957" y="540" width="10" height="4" fill="#ffd8d0" opacity="0.81" transform="rotate(100 957 540)"/>
<rect x="957" y="164" width="10" height="3" fill="#b0f0e0" opacity="0.86" transform="rotate(130 957 164)"/>
<rect x="804" y="295" width="6" height="3" fill="#ffffff" opacity="0.93" transform="rotate(24 804 295)"/>
<rect x="685" y="149" width="8" height="3" fill="#d0fff0" opacity="1.00" transform="rotate(41 685 149)"/>
<rect x="1190" y="330" width="9" height="3" fill="#181028" opacity="0.78" transform="rotate(148 1190 330)"/>
<rect x="1148" y="168" width="8" height="4" fill="#fff0c0" opacity="0.90" transform="rotate(112 1148 168)"/>
<rect x="1211" y="249" width="9" height="3" fill="#181028" opacity="0.75" transform="rotate(177 1211 249)"/>
<rect x="824" y="259" width="6" height="3" fill="#ffb8b0" opacity="0.96" transform="rotate(92 824 259)"/>
<rect x="1219" y="450" width="7" height="4" fill="#181028" opacity="0.81" transform="rotate(163 1219 450)"/>
<rect x="715" y="450" width="7" height="4" fill="#ffffff" opacity="0.89" transform="rotate(180 715 450)"/>
<rect x="956" y="27" width="9" height="4" fill="#e8e8ff" opacity="0.89" transform="rotate(25 956 27)"/>
<rect x="753" y="506" width="7" height="3" fill="#d0fff0" opacity="0.81" transform="rotate(22 753 506)"/>
<rect x="1378" y="422" width="8" height="3" fill="#d0fff0" opacity="0.98" transform="rotate(165 1378 422)"/>
<rect x="1094" y="695" width="6" height="4" fill="#b0f0e0" opacity="0.81" transform="rotate(52 1094 695)"/>
<rect x="730" y="424" width="9" height="3" fill="#ffd8d0" opacity="0.86" transform="rotate(99 730 424)"/>
<rect x="1067" y="309" width="10" height="3" fill="#fff0c0" opacity="0.90" transform="rotate(136 1067 309)"/>
<rect x="522" y="469" width="9" height="3" fill="#fff0f0" opacity="0.79" transform="rotate(74 522 469)"/>
<rect x="868" y="297" width="8" height="3" fill="#b0f0e0" opacity="0.76" transform="rotate(102 868 297)"/>
<rect x="922" y="562" width="9" height="4" fill="#e8e8ff" opacity="0.90" transform="rotate(73 922 562)"/>
<rect x="743" y="355" width="9" height="4" fill="#e8e8ff" opacity="0.97" transform="rotate(135 743 355)"/>
<rect x="1121" y="350" width="10" height="4" fill="#ffd8d0" opacity="0.89" transform="rotate(149 1121 350)"/>
<rect x="725" y="640" width="8" height="4" fill="#fff0f0" opacity="0.82" transform="rotate(58 725 640)"/>
<rect x="936" y="453" width="8" height="3" fill="#ffb8b0" opacity="0.97" transform="rotate(58 936 453)"/>
<rect x="990" y="622" width="7" height="4" fill="#e8e8ff" opacity="0.92" transform="rotate(175 990 622)"/>
<rect x="1357" y="393" width="7" height="3" fill="#ffffff" opacity="0.97" transform="rotate(71 1357 393)"/>
<rect x="924" y="700" width="7" height="3" fill="#d0fff0" opacity="0.81" transform="rotate(102 924 700)"/>
<rect x="565" y="538" width="8" height="4" fill="#d0fff0" opacity="0.78" transform="rotate(18 565 538)"/>
<rect x="982" y="400" width="7" height="3" fill="#ffd8d0" opacity="0.86" transform="rotate(58 982 400)"/>
<rect x="974" y="341" width="8" height="3" fill="#ffffff" opacity="0.76" transform="rotate(125 974 341)"/>
<rect x="1101" y="31" width="8" height="4" fill="#e8e8ff" opacity="0.97" transform="rotate(176 1101 31)"/>
<rect x="880" y="166" width="9" height="4" fill="#b0f0e0" opacity="0.96" transform="rotate(11 880 166)"/>
<rect x="860" y="275" width="10" height="4" fill="#ffffff" opacity="0.81" transform="rotate(36 860 275)"/>
<rect x="998" y="668" width="10" height="3" fill="#b0f0e0" opacity="0.99" transform="rotate(55 998 668)"/>
<rect x="634" y="218" width="7" height="4" fill="#fff0c0" opacity="0.77" transform="rotate(140 634 218)"/>
<rect x="1162" y="182" width="7" height="4" fill="#d0fff0" opacity="0.93" transform="rotate(35 1162 182)"/>
<rect x="932" y="376" width="9" height="3" fill="#181028" opacity="0.81" transform="rotate(21 932 376)"/>
<rect x="1122" y="238" width="10" height="4" fill="#ffffff" opacity="0.92" transform="rotate(50 1122 238)"/>
<rect x="1364" y="350" width="6" height="4" fill="#ffc8b8" opacity="0.82" transform="rotate(1 1364 350)"/>
<rect x="1171" y="202" width="9" height="3" fill="#ffffff" opacity="0.81" transform="rotate(51 1171 202)"/>
<rect x="860" y="222" width="10" height="4" fill="#e8e8ff" opacity="0.98" transform="rotate(6 860 222)"/>
<rect x="938" y="432" width="6" height="4" fill="#ffd8d0" opacity="0.89" transform="rotate(11 938 432)"/>
<rect x="789" y="472" width="9" height="3" fill="#ffffff" opacity="0.92" transform="rotate(91 789 472)"/>
<rect x="1199" y="389" width="10" height="3" fill="#d0fff0" opacity="0.78" transform="rotate(140 1199 389)"/>
<rect x="856" y="331" width="7" height="4" fill="#ffb8b0" opacity="0.87" transform="rotate(130 856 331)"/>
<rect x="769" y="180" width="8" height="3" fill="#ffc8b8" opacity="0.99" transform="rotate(6 769 180)"/>
<rect x="620" y="49" width="7" height="3" fill="#fff0c0" opacity="0.88" transform="rotate(110 620 49)"/>
<rect x="1110" y="523" width="9" height="3" fill="#d0fff0" opacity="0.89" transform="rotate(21 1110 523)"/>
<rect x="1014" y="404" width="7" height="3" fill="#b0f0e0" opacity="0.95" transform="rotate(8 1014 404)"/>
<rect x="831" y="533" width="9" height="4" fill="#ffffff" opacity="0.96" transform="rotate(90 831 533)"/>
<rect x="973" y="143" width="9" height="4" fill="#fff0f0" opacity="0.83" transform="rotate(142 973 143)"/>
<rect x="1092" y="353" width="9" height="4" fill="#d0fff0" opacity="0.87" transform="rotate(172 1092 353)"/>
<rect x="1090" y="548" width="8" height="4" fill="#ffffff" opacity="0.85" transform="rotate(7 1090 548)"/>
<rect x="966" y="392" width="6" height="3" fill="#ffd8d0" opacity="0.99" transform="rotate(85 966 392)"/>
<rect x="862" y="495" width="8" height="3" fill="#ffffff" opacity="0.85" transform="rotate(21 862 495)"/>
<rect x="485" y="77" width="7" height="3" fill="#ffc8b8" opacity="0.80" transform="rotate(170 485 77)"/>
<rect x="458" y="135" width="9" height="3" fill="#ffc8b8" opacity="0.98" transform="rotate(164 458 135)"/>
<rect x="667" y="148" width="9" height="4" fill="#fff0c0" opacity="0.95" transform="rotate(38 667 148)"/>
<rect x="907" y="176" width="8" height="3" fill="#ffffff" opacity="0.90" transform="rotate(37 907 176)"/>
<rect x="1083" y="547" width="8" height="3" fill="#d0fff0" opacity="0.97" transform="rotate(113 1083 547)"/>
<rect x="922" y="168" width="9" height="3" fill="#fff0f0" opacity="0.88" transform="rotate(49 922 168)"/>
<rect x="1029" y="535" width="8" height="3" fill="#ffffff" opacity="0.82" transform="rotate(117 1029 535)"/>
<rect x="1234" y="280" width="7" height="4" fill="#ffd8d0" opacity="0.76" transform="rotate(130 1234 280)"/>
<rect x="1345" y="253" width="8" height="3" fill="#b0f0e0" opacity="0.81" transform="rotate(159 1345 253)"/>
<rect x="890" y="623" width="8" height="3" fill="#181028" opacity="0.90" transform="rotate(34 890 623)"/>
<rect x="841" y="31" width="7" height="3" fill="#d0fff0" opacity="0.88" transform="rotate(98 841 31)"/>
<rect x="891" y="407" width="8" height="4" fill="#181028" opacity="0.93" transform="rotate(150 891 407)"/>
<rect x="1172" y="311" width="8" height="4" fill="#ffb8b0" opacity="0.84" transform="rotate(41 1172 311)"/>
<rect x="1223" y="450" width="9" height="3" fill="#ffb8b0" opacity="0.92" transform="rotate(2 1223 450)"/>
<rect x="1250" y="61" width="9" height="3" fill="#ffd8d0" opacity="0.99" transform="rotate(64 1250 61)"/>
<rect x="1004" y="617" width="6" height="3" fill="#fff0f0" opacity="0.87" transform="rotate(71 1004 617)"/>
<rect x="1271" y="656" width="7" height="4" fill="#fff0c0" opacity="0.80" transform="rotate(40 1271 656)"/>
<rect x="785" y="552" width="8" height="4" fill="#d0fff0" opacity="0.87" transform="rotate(163 785 552)"/>
<rect x="1217" y="206" width="9" height="3" fill="#fff0c0" opacity="0.78" transform="rotate(165 1217 206)"/>
<rect x="1118" y="643" width="8" height="4" fill="#b0f0e0" opacity="0.97" transform="rotate(54 1118 643)"/>
<rect x="900" y="66" width="6" height="3" fill="#ffb8b0" opacity="0.82" transform="rotate(67 900 66)"/>
<rect x="1065" y="487" width="8" height="4" fill="#ffc8b8" opacity="0.93" transform="rotate(65 1065 487)"/>
<rect x="1171" y="177" width="6" height="3" fill="#ffc8b8" opacity="0.85" transform="rotate(98 1171 177)"/>
<rect x="1163" y="220" width="8" height="4" fill="#d0fff0" opacity="0.92" transform="rotate(7 1163 220)"/>
<rect x="633" y="217" width="8" height="3" fill="#ffc8b8" opacity="0.80" transform="rotate(4 633 217)"/>
<rect x="918" y="185" width="6" height="3" fill="#ffffff" opacity="0.89" transform="rotate(71 918 185)"/>
<rect x="839" y="604" width="9" height="3" fill="#b0f0e0" opacity="0.82" transform="rotate(148 839 604)"/>
<rect x="1307" y="91" width="7" height="3" fill="#ffffff" opacity="0.96" transform="rotate(28 1307 91)"/>
<rect x="1017" y="134" width="8" height="3" fill="#b0f0e0" opacity="0.85" transform="rotate(101 1017 134)"/>
<rect x="864" y="284" width="9" height="3" fill="#181028" opacity="0.93" transform="rotate(127 864 284)"/>
<rect x="763" y="622" width="10" height="4" fill="#ffb8b0" opacity="0.78" transform="rotate(159 763 622)"/>
<rect x="1007" y="342" width="7" height="4" fill="#fff0f0" opacity="0.84" transform="rotate(157 1007 342)"/>
<rect x="756" y="305" width="9" height="4" fill="#ffffff" opacity="0.81" transform="rotate(46 756 305)"/>
<rect x="891" y="518" width="9" height="4" fill="#ffc8b8" opacity="1.00" transform="rotate(149 891 518)"/>
<rect x="1137" y="469" width="7" height="4" fill="#d0fff0" opacity="0.78" transform="rotate(48 1137 469)"/>
<rect x="908" y="291" width="7" height="3" fill="#d0fff0" opacity="0.82" transform="rotate(105 908 291)"/>
<rect x="856" y="216" width="7" height="3" fill="#ffffff" opacity="1.00" transform="rotate(70 856 216)"/>
<rect x="955" y="46" width="6" height="3" fill="#ffd8d0" opacity="0.85" transform="rotate(132 955 46)"/>
<rect x="874" y="640" width="9" height="4" fill="#ffd8d0" opacity="0.83" transform="rotate(31 874 640)"/>
<rect x="1065" y="573" width="8" height="3" fill="#ffc8b8" opacity="0.85" transform="rotate(138 1065 573)"/>
<rect x="835" y="504" width="8" height="4" fill="#d0fff0" opacity="0.96" transform="rotate(26 835 504)"/>
<rect x="1302" y="413" width="8" height="3" fill="#ffb8b0" opacity="0.89" transform="rotate(159 1302 413)"/>
<rect x="745" y="122" width="9" height="3" fill="#e8e8ff" opacity="0.80" transform="rotate(41 745 122)"/>
<rect x="870" y="410" width="6" height="4" fill="#fff0f0" opacity="0.80" transform="rotate(121 870 410)"/>
<rect x="935" y="364" width="10" height="3" fill="#e8e8ff" opacity="0.76" transform="rotate(156 935 364)"/>
<rect x="748" y="273" width="7" height="3" fill="#ffb8b0" opacity="0.82" transform="rotate(149 748 273)"/>
<rect x="878" y="661" width="9" height="4" fill="#fff0f0" opacity="0.79" transform="rotate(80 878 661)"/>
<rect x="1020" y="27" width="6" height="3" fill="#ffb8b0" opacity="0.77" transform="rotate(136 1020 27)"/>
<rect x="1062" y="352" width="10" height="3" fill="#181028" opacity="0.82" transform="rotate(66 1062 352)"/>
<rect x="1172" y="197" width="7" height="3" fill="#ffd8d0" opacity="0.98" transform="rotate(120 1172 197)"/>
<rect x="871" y="363" width="9" height="3" fill="#ffc8b8" opacity="0.76" transform="rotate(162 871 363)"/>
<rect x="1004" y="427" width="7" height="3" fill="#b0f0e0" opacity="0.91" transform="rotate(146 1004 427)"/>
<rect x="1168" y="341" width="7" height="3" fill="#ffc8b8" opacity="0.77" transform="rotate(118 1168 341)"/>
<rect x="969" y="261" width="9" height="3" fill="#d0fff0" opacity="0.84" transform="rotate(122 969 261)"/>
<rect x="848" y="131" width="7" height="3" fill="#fff0c0" opacity="0.88" transform="rotate(4 848 131)"/>
<rect x="871" y="309" width="10" height="3" fill="#b0f0e0" opacity="0.77" transform="rotate(158 871 309)"/>
<rect x="1199" y="435" width="8" height="3" fill="#ffffff" opacity="0.87" transform="rotate(85 1199 435)"/>
<rect x="1262" y="560" width="6" height="3" fill="#d0fff0" opacity="0.94" transform="rotate(166 1262 560)"/>
<rect x="742" y="392" width="6" height="4" fill="#ffffff" opacity="0.76" transform="rotate(119 742 392)"/>
<rect x="855" y="453" width="9" height="3" fill="#ffd8d0" opacity="0.78" transform="rotate(174 855 453)"/>
<rect x="1158" y="533" width="9" height="3" fill="#fff0c0" opacity="0.88" transform="rotate(84 1158 533)"/>
<rect x="921" y="290" width="10" height="3" fill="#ffb8b0" opacity="0.90" transform="rotate(81 921 290)"/>
<rect x="961" y="438" width="10" height="3" fill="#ffb8b0" opacity="0.93" transform="rotate(84 961 438)"/>
<rect x="928" y="246" width="8" height="4" fill="#e8e8ff" opacity="0.78" transform="rotate(23 928 246)"/>
<rect x="414" y="155" width="10" height="4" fill="#ffd8d0" opacity="0.95" transform="rotate(26 414 155)"/>
<rect x="1048" y="383" width="9" height="4" fill="#b0f0e0" opacity="0.86" transform="rotate(45 1048 383)"/>
<rect x="973" y="400" width="9" height="3" fill="#ffffff" opacity="0.81" transform="rotate(50 973 400)"/>
<rect x="688" y="94" width="10" height="3" fill="#fff0f0" opacity="0.94" transform="rotate(89 688 94)"/>
<rect x="1098" y="408" width="10" height="4" fill="#b0f0e0" opacity="0.79" transform="rotate(27 1098 408)"/>
<rect x="1407" y="261" width="7" height="3" fill="#ffc8b8" opacity="0.85" transform="rotate(75 1407 261)"/>
<rect x="753" y="604" width="8" height="4" fill="#ffffff" opacity="0.80" transform="rotate(13 753 604)"/>
<rect x="1207" y="461" width="7" height="4" fill="#fff0f0" opacity="0.95" transform="rotate(78 1207 461)"/>
<rect x="747" y="508" width="9" height="4" fill="#ffffff" opacity="0.92" transform="rotate(118 747 508)"/>
<rect x="1175" y="150" width="8" height="3" fill="#b0f0e0" opacity="0.90" transform="rotate(21 1175 150)"/>
<rect x="1189" y="277" width="7" height="4" fill="#b0f0e0" opacity="0.97" transform="rotate(124 1189 277)"/>
<rect x="1000" y="553" width="7" height="3" fill="#ffb8b0" opacity="0.86" transform="rotate(110 1000 553)"/>
<rect x="1048" y="379" width="10" height="3" fill="#ffffff" opacity="0.87" transform="rotate(127 1048 379)"/>
<rect x="1246" y="102" width="10" height="3" fill="#ffffff" opacity="0.98" transform="rotate(117 1246 102)"/>
<rect x="1253" y="298" width="9" height="3" fill="#ffd8d0" opacity="0.84" transform="rotate(81 1253 298)"/>
<rect x="733" y="260" width="7" height="3" fill="#ffc8b8" opacity="0.81" transform="rotate(2 733 260)"/>
<rect x="832" y="315" width="7" height="4" fill="#fff0c0" opacity="0.82" transform="rotate(45 832 315)"/>
<rect x="1206" y="90" width="6" height="3" fill="#ffffff" opacity="0.77" transform="rotate(82 1206 90)"/>
<rect x="750" y="282" width="7" height="4" fill="#b0f0e0" opacity="1.00" transform="rotate(120 750 282)"/>
<rect x="1190" y="583" width="7" height="3" fill="#181028" opacity="0.83" transform="rotate(31 1190 583)"/>
<rect x="761" y="489" width="8" height="4" fill="#fff0c0" opacity="0.86" transform="rotate(176 761 489)"/>
<rect x="888" y="186" width="6" height="4" fill="#ffffff" opacity="0.98" transform="rotate(118 888 186)"/>
<rect x="952" y="387" width="8" height="3" fill="#181028" opacity="0.85" transform="rotate(149 952 387)"/>
<rect x="1083" y="535" width="9" height="3" fill="#ffb8b0" opacity="0.92" transform="rotate(134 1083 535)"/>
<rect x="1040" y="681" width="8" height="4" fill="#d0fff0" opacity="0.75" transform="rotate(78 1040 681)"/>
<rect x="1391" y="611" width="6" height="3" fill="#181028" opacity="0.99" transform="rotate(96 1391 611)"/>
<rect x="827" y="557" width="6" height="4" fill="#ffd8d0" opacity="0.89" transform="rotate(102 827 557)"/>
<rect x="1164" y="111" width="7" height="4" fill="#fff0c0" opacity="0.87" transform="rotate(44 1164 111)"/>
<rect x="1109" y="694" width="8" height="3" fill="#d0fff0" opacity="0.96" transform="rotate(19 1109 694)"/>
<rect x="1039" y="92" width="10" height="3" fill="#ffc8b8" opacity="0.99" transform="rotate(73 1039 92)"/>
<rect x="881" y="516" width="6" height="4" fill="#ffd8d0" opacity="0.93" transform="rotate(41 881 516)"/>
<rect x="1115" y="516" width="6" height="3" fill="#181028" opacity="0.91" transform="rotate(54 1115 516)"/>
<rect x="1188" y="603" width="6" height="3" fill="#ffb8b0" opacity="0.88" transform="rotate(14 1188 603)"/>
<rect x="601" y="480" width="7" height="4" fill="#d0fff0" opacity="0.89" transform="rotate(101 601 480)"/>
<rect x="1179" y="376" width="10" height="3" fill="#ffc8b8" opacity="0.81" transform="rotate(54 1179 376)"/>
<rect x="778" y="285" width="7" height="3" fill="#fff0f0" opacity="0.83" transform="rotate(81 778 285)"/>
<rect x="1073" y="396" width="7" height="3" fill="#ffffff" opacity="0.92" transform="rotate(58 1073 396)"/>
<rect x="1164" y="516" width="10" height="3" fill="#fff0f0" opacity="0.84" transform="rotate(95 1164 516)"/>
<rect x="1014" y="438" width="6" height="4" fill="#ffffff" opacity="0.84" transform="rotate(64 1014 438)"/>
<rect x="861" y="441" width="8" height="3" fill="#e8e8ff" opacity="0.78" transform="rotate(57 861 441)"/>
<rect x="1103" y="546" width="7" height="4" fill="#ffc8b8" opacity="0.82" transform="rotate(38 1103 546)"/>
<rect x="612" y="570" width="8" height="3" fill="#ffd8d0" opacity="0.85" transform="rotate(122 612 570)"/>
<rect x="1144" y="183" width="7" height="3" fill="#d0fff0" opacity="0.95" transform="rotate(27 1144 183)"/>
<rect x="1296" y="470" width="6" height="3" fill="#b0f0e0" opacity="0.91" transform="rotate(99 1296 470)"/>
<rect x="1083" y="23" width="10" height="4" fill="#fff0f0" opacity="0.96" transform="rotate(104 1083 23)"/>
<rect x="835" y="361" width="10" height="4" fill="#ffd8d0" opacity="0.86" transform="rotate(31 835 361)"/>
<rect x="1222" y="541" width="8" height="3" fill="#ffd8d0" opacity="0.86" transform="rotate(79 1222 541)"/>
<rect x="921" y="635" width="10" height="3" fill="#ffd8d0" opacity="0.93" transform="rotate(150 921 635)"/>
<rect x="612" y="305" width="9" height="3" fill="#ffffff" opacity="0.77" transform="rotate(20 612 305)"/>
<rect x="1272" y="254" width="7" height="3" fill="#fff0c0" opacity="0.98" transform="rotate(73 1272 254)"/>
<rect x="1326" y="165" width="9" height="3" fill="#fff0c0" opacity="0.88" transform="rotate(79 1326 165)"/>
<rect x="609" y="363" width="9" height="3" fill="#d0fff0" opacity="0.91" transform="rotate(3 609 363)"/>
<rect x="860" y="291" width="9" height="4" fill="#ffc8b8" opacity="0.96" transform="rotate(82 860 291)"/>
<rect x="786" y="278" width="10" height="3" fill="#ffffff" opacity="0.91" transform="rotate(126 786 278)"/>
<rect x="865" y="273" width="8" height="3" fill="#ffb8b0" opacity="0.84" transform="rotate(166 865 273)"/>
<rect x="719" y="519" width="8" height="4" fill="#e8e8ff" opacity="0.85" transform="rotate(164 719 519)"/>
<rect x="1081" y="102" width="7" height="3" fill="#181028" opacity="0.96" transform="rotate(122 1081 102)"/>
<rect x="901" y="34" width="8" height="3" fill="#b0f0e0" opacity="0.95" transform="rotate(27 901 34)"/>
<rect x="750" y="86" width="9" height="3" fill="#181028" opacity="0.93" transform="rotate(36 750 86)"/>
<rect x="1041" y="268" width="7" height="4" fill="#b0f0e0" opacity="0.84" transform="rotate(66 1041 268)"/>
<rect x="1093" y="669" width="9" height="3" fill="#ffb8b0" opacity="0.78" transform="rotate(154 1093 669)"/>
<rect x="1165" y="278" width="9" height="3" fill="#ffb8b0" opacity="0.87" transform="rotate(101 1165 278)"/>
<rect x="1328" y="217" width="7" height="3" fill="#fff0c0" opacity="0.79" transform="rotate(92 1328 217)"/>
<rect x="1150" y="611" width="8" height="4" fill="#ffffff" opacity="0.93" transform="rotate(96 1150 611)"/>
<rect x="760" y="435" width="9" height="3" fill="#b0f0e0" opacity="0.91" transform="rotate(77 760 435)"/>
<rect x="676" y="404" width="7" height="3" fill="#ffb8b0" opacity="0.89" transform="rotate(115 676 404)"/>
<rect x="1011" y="271" width="7" height="4" fill="#ffffff" opacity="0.94" transform="rotate(20 1011 271)"/>
<rect x="1420" y="239" width="10" height="3" fill="#b0f0e0" opacity="0.97" transform="rotate(66 1420 239)"/>
<rect x="983" y="57" width="9" height="3" fill="#ffc8b8" opacity="0.79" transform="rotate(5 983 57)"/>
<rect x="1534" y="638" width="10" height="3" fill="#ffffff" opacity="0.80" transform="rotate(79 1534 638)"/>
<rect x="890" y="393" width="7" height="3" fill="#ffd8d0" opacity="0.85" transform="rotate(36 890 393)"/>
<rect x="1176" y="366" width="8" height="4" fill="#d0fff0" opacity="0.97" transform="rotate(101 1176 366)"/>
<rect x="1080" y="205" width="7" height="3" fill="#181028" opacity="0.99" transform="rotate(27 1080 205)"/>
<rect x="1285" y="653" width="6" height="3" fill="#ffffff" opacity="0.89" transform="rotate(106 1285 653)"/>
<rect x="598" y="636" width="7" height="3" fill="#d0fff0" opacity="0.99" transform="rotate(138 598 636)"/>
<rect x="1255" y="31" width="10" height="3" fill="#d0fff0" opacity="0.92" transform="rotate(6 1255 31)"/>
<rect x="1233" y="388" width="8" height="4" fill="#fff0f0" opacity="0.84" transform="rotate(145 1233 388)"/>
<rect x="1020" y="674" width="7" height="3" fill="#fff0c0" opacity="0.75" transform="rotate(39 1020 674)"/>
<rect x="1177" y="553" width="7" height="3" fill="#b0f0e0" opacity="0.88" transform="rotate(95 1177 553)"/>
<rect x="718" y="273" width="8" height="3" fill="#e8e8ff" opacity="0.87" transform="rotate(38 718 273)"/>
<rect x="589" y="562" width="7" height="3" fill="#ffb8b0" opacity="0.90" transform="rotate(118 589 562)"/>
<rect x="938" y="425" width="7" height="3" fill="#ffffff" opacity="0.92" transform="rotate(92 938 425)"/>
<rect x="957" y="566" width="8" height="3" fill="#ffffff" opacity="0.86" transform="rotate(137 957 566)"/>
<rect x="883" y="43" width="9" height="3" fill="#fff0c0" opacity="1.00" transform="rotate(13 883 43)"/>
<rect x="939" y="320" width="9" height="3" fill="#ffffff" opacity="0.84" transform="rotate(179 939 320)"/>
<rect x="715" y="228" width="8" height="4" fill="#e8e8ff" opacity="0.76" transform="rotate(2 715 228)"/>
<rect x="785" y="671" width="8" height="3" fill="#d0fff0" opacity="0.97" transform="rotate(12 785 671)"/>
<rect x="1151" y="675" width="10" height="3" fill="#fff0f0" opacity="0.80" transform="rotate(129 1151 675)"/>
<rect x="905" y="116" width="9" height="4" fill="#ffffff" opacity="0.86" transform="rotate(131 905 116)"/>
<rect x="1088" y="288" width="10" height="3" fill="#b0f0e0" opacity="0.92" transform="rotate(33 1088 288)"/>
<rect x="1077" y="106" width="7" height="3" fill="#181028" opacity="0.89" transform="rotate(49 1077 106)"/>
<rect x="995" y="421" width="10" height="3" fill="#ffd8d0" opacity="0.98" transform="rotate(40 995 421)"/>
<rect x="719" y="685" width="10" height="4" fill="#b0f0e0" opacity="0.91" transform="rotate(33 719 685)"/>
<rect x="589" y="92" width="8" height="3" fill="#e8e8ff" opacity="0.87" transform="rotate(180 589 92)"/>
<rect x="1017" y="158" width="10" height="4" fill="#ffc8b8" opacity="0.85" transform="rotate(4 1017 158)"/>
<rect x="1034" y="49" width="9" height="3" fill="#ffffff" opacity="0.86" transform="rotate(4 1034 49)"/>
<rect x="1087" y="676" width="8" height="3" fill="#b0f0e0" opacity="0.75" transform="rotate(4 1087 676)"/>
<rect x="1119" y="240" width="8" height="3" fill="#ffc8b8" opacity="0.94" transform="rotate(85 1119 240)"/>
<rect x="1013" y="139" width="7" height="3" fill="#fff0c0" opacity="0.89" transform="rotate(110 1013 139)"/>
<rect x="762" y="348" width="7" height="4" fill="#ffffff" opacity="0.79" transform="rotate(154 762 348)"/>
<rect x="1355" y="381" width="10" height="3" fill="#b0f0e0" opacity="0.81" transform="rotate(31 1355 381)"/>
<rect x="1241" y="431" width="7" height="3" fill="#b0f0e0" opacity="0.87" transform="rotate(124 1241 431)"/>
<rect x="1350" y="98" width="9" height="4" fill="#ffffff" opacity="0.75" transform="rotate(117 1350 98)"/>
<rect x="945" y="373" width="9" height="3" fill="#e8e8ff" opacity="0.91" transform="rotate(16 945 373)"/>
<rect x="1213" y="57" width="7" height="3" fill="#fff0f0" opacity="0.77" transform="rotate(97 1213 57)"/>
<rect x="1014" y="573" width="9" height="3" fill="#181028" opacity="0.78" transform="rotate(163 1014 573)"/>
<rect x="1336" y="274" width="6" height="3" fill="#d0fff0" opacity="0.82" transform="rotate(155 1336 274)"/>
<rect x="787" y="599" width="7" height="3" fill="#ffb8b0" opacity="0.99" transform="rotate(150 787 599)"/>
<rect x="972" y="648" width="9" height="4" fill="#ffb8b0" opacity="0.95" transform="rotate(128 972 648)"/>
<rect x="1039" y="147" width="7" height="4" fill="#181028" opacity="0.91" transform="rotate(4 1039 147)"/>
<rect x="823" y="355" width="9" height="4" fill="#ffffff" opacity="0.97" transform="rotate(72 823 355)"/>
<rect x="1064" y="685" width="7" height="3" fill="#ffc8b8" opacity="0.92" transform="rotate(46 1064 685)"/>
<rect x="1110" y="546" width="10" height="3" fill="#ffffff" opacity="0.76" transform="rotate(23 1110 546)"/>
<rect x="1019" y="616" width="9" height="3" fill="#ffffff" opacity="0.98" transform="rotate(170 1019 616)"/>
<rect x="648" y="183" width="9" height="3" fill="#e8e8ff" opacity="0.95" transform="rotate(159 648 183)"/>
<rect x="791" y="186" width="9" height="3" fill="#ffb8b0" opacity="0.92" transform="rotate(57 791 186)"/>
<rect x="719" y="27" width="7" height="4" fill="#b0f0e0" opacity="0.98" transform="rotate(19 719 27)"/>
<rect x="846" y="644" width="8" height="4" fill="#b0f0e0" opacity="0.78" transform="rotate(139 846 644)"/>
<rect x="1424" y="177" width="10" height="3" fill="#181028" opacity="0.76" transform="rotate(17 1424 177)"/>
<rect x="810" y="545" width="10" height="3" fill="#fff0c0" opacity="0.77" transform="rotate(78 810 545)"/>
<rect x="951" y="49" width="7" height="3" fill="#ffffff" opacity="0.88" transform="rotate(171 951 49)"/>
<rect x="1267" y="176" width="10" height="3" fill="#e8e8ff" opacity="0.92" transform="rotate(77 1267 176)"/>
<rect x="802" y="548" width="8" height="3" fill="#ffb8b0" opacity="0.90" transform="rotate(169 802 548)"/>
<rect x="1059" y="320" width="7" height="4" fill="#d0fff0" opacity="0.89" transform="rotate(111 1059 320)"/>
<rect x="982" y="217" width="9" height="4" fill="#ffffff" opacity="0.76" transform="rotate(57 982 217)"/>
<rect x="1438" y="54" width="10" height="3" fill="#fff0f0" opacity="0.89" transform="rotate(45 1438 54)"/>
<rect x="1159" y="3" width="8" height="3" fill="#fff0c0" opacity="0.87" transform="rotate(156 1159 3)"/>
<rect x="988" y="563" width="7" height="4" fill="#ffd8d0" opacity="0.93" transform="rotate(74 988 563)"/>
<rect x="1316" y="110" width="6" height="3" fill="#ffd8d0" opacity="0.94" transform="rotate(3 1316 110)"/>
<rect x="874" y="528" width="7" height="4" fill="#b0f0e0" opacity="0.98" transform="rotate(178 874 528)"/>
<rect x="883" y="467" width="7" height="3" fill="#181028" opacity="0.89" transform="rotate(150 883 467)"/>
<rect x="1067" y="533" width="6" height="3" fill="#ffffff" opacity="0.84" transform="rotate(48 1067 533)"/>
<rect x="883" y="332" width="8" height="3" fill="#fff0c0" opacity="0.97" transform="rotate(112 883 332)"/>
<rect x="1253" y="457" width="9" height="3" fill="#ffffff" opacity="0.97" transform="rotate(119 1253 457)"/>
<rect x="1158" y="685" width="9" height="3" fill="#ffffff" opacity="0.82" transform="rotate(121 1158 685)"/>
<rect x="1259" y="523" width="9" height="3" fill="#ffffff" opacity="0.90" transform="rotate(118 1259 523)"/>
<rect x="893" y="76" width="8" height="4" fill="#fff0c0" opacity="0.75" transform="rotate(101 893 76)"/>
<rect x="991" y="318" width="8" height="3" fill="#ffffff" opacity="0.94" transform="rotate(72 991 318)"/>
<rect x="826" y="330" width="8" height="3" fill="#ffffff" opacity="0.85" transform="rotate(39 826 330)"/>
<rect x="896" y="436" width="9" height="3" fill="#ffffff" opacity="0.89" transform="rotate(45 896 436)"/>
<rect x="650" y="405" width="10" height="3" fill="#b0f0e0" opacity="0.95" transform="rotate(141 650 405)"/>
<rect x="1305" y="381" width="7" height="4" fill="#ffffff" opacity="0.95" transform="rotate(59 1305 381)"/>
<rect x="1021" y="371" width="8" height="4" fill="#ffffff" opacity="0.79" transform="rotate(174 1021 371)"/>
<rect x="738" y="446" width="10" height="3" fill="#b0f0e0" opacity="0.86" transform="rotate(172 738 446)"/>
<rect x="1031" y="49" width="6" height="3" fill="#b0f0e0" opacity="0.96" transform="rotate(30 1031 49)"/>
<rect x="949" y="293" width="8" height="3" fill="#ffffff" opacity="0.85" transform="rotate(67 949 293)"/>
<rect x="1167" y="565" width="9" height="4" fill="#ffffff" opacity="0.79" transform="rotate(110 1167 565)"/>
<rect x="1258" y="102" width="9" height="3" fill="#ffc8b8" opacity="0.76" transform="rotate(88 1258 102)"/>
<rect x="1164" y="585" width="9" height="3" fill="#b0f0e0" opacity="0.83" transform="rotate(127 1164 585)"/>
<rect x="1023" y="623" width="7" height="3" fill="#ffc8b8" opacity="0.82" transform="rotate(146 1023 623)"/>
<rect x="1195" y="379" width="7" height="3" fill="#b0f0e0" opacity="0.79" transform="rotate(108 1195 379)"/>
<rect x="853" y="677" width="8" height="4" fill="#ffffff" opacity="0.94" transform="rotate(165 853 677)"/>
<rect x="1153" y="357" width="8" height="3" fill="#b0f0e0" opacity="0.97" transform="rotate(139 1153 357)"/>
<rect x="887" y="184" width="9" height="3" fill="#ffd8d0" opacity="0.94" transform="rotate(125 887 184)"/>
<rect x="1086" y="495" width="10" height="3" fill="#ffc8b8" opacity="0.84" transform="rotate(58 1086 495)"/>
<rect x="636" y="690" width="6" height="3" fill="#ffc8b8" opacity="0.79" transform="rotate(4 636 690)"/>
<rect x="754" y="217" width="9" height="4" fill="#e8e8ff" opacity="0.94" transform="rotate(58 754 217)"/>
<rect x="1117" y="180" width="6" height="4" fill="#fff0f0" opacity="0.75" transform="rotate(54 1117 180)"/>
<rect x="995" y="244" width="8" height="3" fill="#ffd8d0" opacity="0.87" transform="rotate(20 995 244)"/>
<rect x="820" y="383" width="9" height="3" fill="#181028" opacity="0.81" transform="rotate(119 820 383)"/>
<rect x="1375" y="583" width="7" height="3" fill="#ffc8b8" opacity="0.88" transform="rotate(80 1375 583)"/>
<rect x="1090" y="565" width="6" height="3" fill="#fff0f0" opacity="0.91" transform="rotate(6 1090 565)"/>
<rect x="891" y="227" width="7" height="4" fill="#ffffff" opacity="0.87" transform="rotate(151 891 227)"/>
<rect x="1055" y="287" width="8" height="3" fill="#ffffff" opacity="0.98" transform="rotate(104 1055 287)"/>
<rect x="945" y="595" width="6" height="3" fill="#181028" opacity="0.86" transform="rotate(175 945 595)"/>
<rect x="1135" y="413" width="7" height="4" fill="#ffd8d0" opacity="0.75" transform="rotate(96 1135 413)"/>
<rect x="1013" y="126" width="8" height="3" fill="#181028" opacity="1.00" transform="rotate(20 1013 126)"/>
<rect x="756" y="634" width="6" height="4" fill="#ffffff" opacity="0.92" transform="rotate(12 756 634)"/>
<rect x="847" y="177" width="8" height="3" fill="#ffc8b8" opacity="0.98" transform="rotate(61 847 177)"/>
<rect x="1295" y="452" width="10" height="3" fill="#ffb8b0" opacity="0.83" transform="rotate(44 1295 452)"/>
<rect x="1002" y="673" width="8" height="3" fill="#ffb8b0" opacity="0.80" transform="rotate(115 1002 673)"/>
<rect x="996" y="570" width="7" height="4" fill="#ffffff" opacity="0.91" transform="rotate(129 996 570)"/>
<rect x="1097" y="534" width="10" height="3" fill="#ffb8b0" opacity="0.98" transform="rotate(177 1097 534)"/>
<rect x="933" y="535" width="6" height="4" fill="#ffb8b0" opacity="0.85" transform="rotate(156 933 535)"/>
<rect x="1069" y="588" width="7" height="4" fill="#e8e8ff" opacity="0.91" transform="rotate(33 1069 588)"/>
<rect x="855" y="34" width="7" height="3" fill="#ffffff" opacity="0.85" transform="rotate(45 855 34)"/>
<rect x="886" y="659" width="9" height="3" fill="#ffffff" opacity="0.91" transform="rotate(114 886 659)"/>
<rect x="930" y="295" width="6" height="3" fill="#181028" opacity="0.81" transform="rotate(69 930 295)"/>
<rect x="765" y="101" width="7" height="3" fill="#fff0c0" opacity="0.79" transform="rotate(100 765 101)"/>
<rect x="1084" y="437" width="8" height="3" fill="#ffc8b8" opacity="0.91" transform="rotate(138 1084 437)"/>
<rect x="913" y="340" width="8" height="3" fill="#fff0f0" opacity="0.78" transform="rotate(98 913 340)"/>
<rect x="1008" y="295" width="8" height="3" fill="#fff0f0" opacity="0.84" transform="rotate(66 1008 295)"/>
<rect x="1169" y="62" width="7" height="3" fill="#ffffff" opacity="0.97" transform="rotate(161 1169 62)"/>
<rect x="1027" y="294" width="9" height="3" fill="#fff0f0" opacity="0.90" transform="rotate(165 1027 294)"/>
<rect x="1006" y="186" width="7" height="3" fill="#ffd8d0" opacity="0.91" transform="rotate(79 1006 186)"/>
<rect x="1089" y="141" width="8" height="3" fill="#181028" opacity="0.77" transform="rotate(102 1089 141)"/>
<rect x="1171" y="7" width="7" height="4" fill="#b0f0e0" opacity="0.98" transform="rotate(5 1171 7)"/>
<rect x="1068" y="323" width="7" height="3" fill="#d0fff0" opacity="0.85" transform="rotate(120 1068 323)"/>
<rect x="591" y="513" width="7" height="4" fill="#fff0f0" opacity="0.82" transform="rotate(163 591 513)"/>
<rect x="999" y="235" width="6" height="4" fill="#ffffff" opacity="0.85" transform="rotate(116 999 235)"/>
<rect x="1680" y="607" width="9" height="3" fill="#fff0c0" opacity="0.97" transform="rotate(176 1680 607)"/>
<rect x="593" y="281" width="10" height="3" fill="#ffffff" opacity="0.96" transform="rotate(160 593 281)"/>
<rect x="663" y="479" width="10" height="3" fill="#ffc8b8" opacity="0.77" transform="rotate(73 663 479)"/>
<rect x="854" y="558" width="8" height="3" fill="#fff0c0" opacity="0.80" transform="rotate(172 854 558)"/>
<rect x="803" y="339" width="9" height="4" fill="#b0f0e0" opacity="0.88" transform="rotate(47 803 339)"/>
<rect x="825" y="446" width="8" height="3" fill="#ffd8d0" opacity="0.75" transform="rotate(132 825 446)"/>
<rect x="939" y="3" width="7" height="3" fill="#ffffff" opacity="0.76" transform="rotate(178 939 3)"/>
<rect x="1282" y="328" width="7" height="3" fill="#ffffff" opacity="0.86" transform="rotate(85 1282 328)"/>
<rect x="809" y="249" width="8" height="3" fill="#e8e8ff" opacity="0.88" transform="rotate(133 809 249)"/>
<rect x="1228" y="454" width="10" height="3" fill="#ffffff" opacity="0.76" transform="rotate(108 1228 454)"/>
<rect x="831" y="317" width="7" height="4" fill="#ffffff" opacity="0.84" transform="rotate(103 831 317)"/>
<rect x="657" y="473" width="7" height="4" fill="#ffb8b0" opacity="0.89" transform="rotate(46 657 473)"/>
<rect x="1330" y="609" width="7" height="3" fill="#fff0f0" opacity="0.87" transform="rotate(115 1330 609)"/>
<rect x="667" y="89" width="7" height="3" fill="#b0f0e0" opacity="0.98" transform="rotate(17 667 89)"/>
<rect x="781" y="288" width="9" height="3" fill="#ffffff" opacity="0.90" transform="rotate(77 781 288)"/>
<rect x="727" y="613" width="7" height="4" fill="#e8e8ff" opacity="0.80" transform="rotate(114 727 613)"/>
<rect x="501" y="335" width="9" height="3" fill="#d0fff0" opacity="0.88" transform="rotate(164 501 335)"/>
<rect x="1145" y="55" width="9" height="4" fill="#ffb8b0" opacity="0.77" transform="rotate(143 1145 55)"/>
<rect x="1177" y="448" width="8" height="3" fill="#ffffff" opacity="0.87" transform="rotate(173 1177 448)"/>
<rect x="795" y="305" width="10" height="3" fill="#ffd8d0" opacity="0.99" transform="rotate(72 795 305)"/>
<rect x="1001" y="670" width="8" height="3" fill="#ffffff" opacity="0.94" transform="rotate(18 1001 670)"/>
<rect x="924" y="337" width="10" height="3" fill="#d0fff0" opacity="0.87" transform="rotate(2 924 337)"/>
<rect x="1146" y="113" width="7" height="4" fill="#ffd8d0" opacity="0.89" transform="rotate(135 1146 113)"/>
<rect x="917" y="131" width="10" height="3" fill="#d0fff0" opacity="0.86" transform="rotate(9 917 131)"/>
<rect x="1077" y="68" width="8" height="4" fill="#fff0c0" opacity="0.98" transform="rotate(60 1077 68)"/>
<rect x="993" y="567" width="8" height="3" fill="#fff0c0" opacity="0.80" transform="rotate(54 993 567)"/>
<rect x="1035" y="471" width="6" height="4" fill="#ffc8b8" opacity="0.80" transform="rotate(171 1035 471)"/>
<rect x="611" y="56" width="10" height="4" fill="#181028" opacity="0.88" transform="rotate(43 611 56)"/>
<rect x="1205" y="406" width="7" height="3" fill="#d0fff0" opacity="0.90" transform="rotate(93 1205 406)"/>
<rect x="989" y="210" width="9" height="4" fill="#ffd8d0" opacity="0.78" transform="rotate(40 989 210)"/>
<rect x="1251" y="85" width="7" height="4" fill="#ffffff" opacity="0.87" transform="rotate(89 1251 85)"/>
<rect x="1094" y="163" width="8" height="3" fill="#181028" opacity="0.90" transform="rotate(16 1094 163)"/>
<rect x="1043" y="451" width="9" height="3" fill="#fff0c0" opacity="0.85" transform="rotate(158 1043 451)"/>
<rect x="830" y="474" width="7" height="3" fill="#b0f0e0" opacity="0.89" transform="rotate(63 830 474)"/>
<rect x="1114" y="214" width="9" height="3" fill="#ffffff" opacity="0.91" transform="rotate(52 1114 214)"/>
<rect x="941" y="202" width="9" height="4" fill="#fff0c0" opacity="0.91" transform="rotate(54 941 202)"/>
<rect x="1062" y="508" width="10" height="3" fill="#181028" opacity="0.81" transform="rotate(113 1062 508)"/>
<rect x="1039" y="546" width="7" height="3" fill="#ffb8b0" opacity="0.98" transform="rotate(36 1039 546)"/>
<rect x="1393" y="577" width="7" height="3" fill="#ffc8b8" opacity="0.95" transform="rotate(38 1393 577)"/>
<rect x="1011" y="255" width="6" height="4" fill="#fff0f0" opacity="0.81" transform="rotate(109 1011 255)"/>
<rect x="1068" y="353" width="8" height="3" fill="#e8e8ff" opacity="0.84" transform="rotate(93 1068 353)"/>
<rect x="673" y="683" width="9" height="3" fill="#ffffff" opacity="0.77" transform="rotate(23 673 683)"/>
<rect x="1323" y="414" width="6" height="3" fill="#d0fff0" opacity="0.82" transform="rotate(74 1323 414)"/>
<rect x="930" y="249" width="6" height="3" fill="#d0fff0" opacity="0.94" transform="rotate(6 930 249)"/>
<rect x="1138" y="488" width="7" height="3" fill="#181028" opacity="0.94" transform="rotate(74 1138 488)"/>
<rect x="675" y="634" width="9" height="3" fill="#fff0f0" opacity="0.97" transform="rotate(147 675 634)"/>
<rect x="731" y="676" width="9" height="3" fill="#d0fff0" opacity="0.89" transform="rotate(25 731 676)"/>
<rect x="1007" y="222" width="9" height="4" fill="#181028" opacity="0.84" transform="rotate(0 1007 222)"/>
<rect x="792" y="640" width="7" height="3" fill="#ffffff" opacity="0.90" transform="rotate(117 792 640)"/>
<rect x="767" y="486" width="7" height="3" fill="#ffffff" opacity="0.87" transform="rotate(46 767 486)"/>
<rect x="1101" y="407" width="8" height="3" fill="#e8e8ff" opacity="0.75" transform="rotate(97 1101 407)"/>
<rect x="1081" y="692" width="7" height="4" fill="#d0fff0" opacity="0.93" transform="rotate(176 1081 692)"/>
<rect x="801" y="619" width="8" height="3" fill="#b0f0e0" opacity="0.79" transform="rotate(116 801 619)"/>
<rect x="1311" y="187" width="8" height="3" fill="#ffffff" opacity="0.82" transform="rotate(63 1311 187)"/>
<rect x="709" y="603" width="8" height="3" fill="#fff0f0" opacity="0.87" transform="rotate(173 709 603)"/>
<rect x="694" y="286" width="9" height="3" fill="#d0fff0" opacity="0.79" transform="rotate(102 694 286)"/>
<rect x="1060" y="393" width="8" height="4" fill="#fff0c0" opacity="0.92" transform="rotate(99 1060 393)"/>
<rect x="930" y="182" width="7" height="3" fill="#fff0f0" opacity="0.90" transform="rotate(141 930 182)"/>
<rect x="1045" y="598" width="8" height="3" fill="#fff0f0" opacity="0.86" transform="rotate(19 1045 598)"/>
<rect x="1123" y="551" width="10" height="3" fill="#e8e8ff" opacity="0.94" transform="rotate(68 1123 551)"/>
<rect x="1323" y="532" width="7" height="3" fill="#e8e8ff" opacity="0.78" transform="rotate(64 1323 532)"/>
<rect x="1046" y="680" width="7" height="3" fill="#ffd8d0" opacity="0.79" transform="rotate(96 1046 680)"/>
<rect x="945" y="695" width="7" height="4" fill="#ffb8b0" opacity="0.98" transform="rotate(22 945 695)"/>
<rect x="839" y="68" width="6" height="3" fill="#fff0f0" opacity="0.76" transform="rotate(146 839 68)"/>
<rect x="889" y="227" width="7" height="3" fill="#ffc8b8" opacity="0.96" transform="rotate(170 889 227)"/>
<rect x="808" y="318" width="8" height="3" fill="#fff0f0" opacity="0.83" transform="rotate(90 808 318)"/>
<rect x="1077" y="216" width="7" height="4" fill="#b0f0e0" opacity="0.75" transform="rotate(97 1077 216)"/>
<rect x="855" y="491" width="8" height="3" fill="#ffb8b0" opacity="0.94" transform="rotate(9 855 491)"/>
<rect x="1162" y="132" width="7" height="4" fill="#fff0f0" opacity="0.84" transform="rotate(107 1162 132)"/>
<rect x="933" y="337" width="6" height="4" fill="#e8e8ff" opacity="0.77" transform="rotate(100 933 337)"/>
<rect x="969" y="297" width="7" height="3" fill="#d0fff0" opacity="0.92" transform="rotate(174 969 297)"/>
<rect x="724" y="349" width="8" height="4" fill="#fff0f0" opacity="0.96" transform="rotate(154 724 349)"/>
<rect x="919" y="590" width="8" height="3" fill="#ffc8b8" opacity="0.87" transform="rotate(160 919 590)"/>
<rect x="1086" y="290" width="8" height="3" fill="#e8e8ff" opacity="0.78" transform="rotate(136 1086 290)"/>
<rect x="938" y="464" width="9" height="3" fill="#fff0c0" opacity="0.97" transform="rotate(59 938 464)"/>
<rect x="963" y="558" width="9" height="4" fill="#181028" opacity="0.77" transform="rotate(11 963 558)"/>
<rect x="1055" y="336" width="7" height="3" fill="#fff0c0" opacity="0.98" transform="rotate(104 1055 336)"/>
<rect x="837" y="107" width="9" height="3" fill="#fff0c0" opacity="0.88" transform="rotate(60 837 107)"/>
<rect x="1029" y="392" width="7" height="3" fill="#181028" opacity="0.81" transform="rotate(3 1029 392)"/>
<rect x="713" y="197" width="8" height="3" fill="#ffb8b0" opacity="0.91" transform="rotate(179 713 197)"/>
<rect x="1042" y="111" width="10" height="4" fill="#fff0f0" opacity="0.91" transform="rotate(171 1042 111)"/>
<rect x="1032" y="88" width="9" height="3" fill="#ffb8b0" opacity="0.99" transform="rotate(80 1032 88)"/>
<rect x="1033" y="519" width="8" height="4" fill="#181028" opacity="0.94" transform="rotate(138 1033 519)"/>
<rect x="715" y="672" width="9" height="3" fill="#ffffff" opacity="0.79" transform="rotate(46 715 672)"/>
<rect x="786" y="537" width="6" height="3" fill="#fff0c0" opacity="0.96" transform="rotate(126 786 537)"/>
<rect x="902" y="586" width="9" height="4" fill="#fff0f0" opacity="0.85" transform="rotate(151 902 586)"/>
<rect x="944" y="383" width="9" height="3" fill="#ffffff" opacity="0.86" transform="rotate(105 944 383)"/>
<rect x="818" y="492" width="7" height="3" fill="#fff0c0" opacity="0.93" transform="rotate(12 818 492)"/>
<rect x="703" y="574" width="8" height="3" fill="#ffffff" opacity="0.96" transform="rotate(81 703 574)"/>
<rect x="1309" y="518" width="10" height="4" fill="#fff0c0" opacity="0.96" transform="rotate(25 1309 518)"/>
<rect x="1465" y="436" width="7" height="4" fill="#ffc8b8" opacity="0.79" transform="rotate(121 1465 436)"/>
<rect x="1012" y="242" width="9" height="3" fill="#ffffff" opacity="0.89" transform="rotate(178 1012 242)"/>
<rect x="1044" y="49" width="8" height="3" fill="#e8e8ff" opacity="0.86" transform="rotate(13 1044 49)"/>
<rect x="782" y="16" width="9" height="3" fill="#fff0f0" opacity="0.91" transform="rotate(65 782 16)"/>
<rect x="796" y="254" width="8" height="3" fill="#fff0f0" opacity="0.94" transform="rotate(36 796 254)"/>
<rect x="538" y="694" width="8" height="3" fill="#b0f0e0" opacity="0.77" transform="rotate(59 538 694)"/>
<rect x="1076" y="422" width="7" height="3" fill="#ffc8b8" opacity="0.83" transform="rotate(158 1076 422)"/>
<rect x="1162" y="303" width="8" height="4" fill="#ffffff" opacity="0.80" transform="rotate(61 1162 303)"/>
<rect x="1164" y="396" width="7" height="3" fill="#ffb8b0" opacity="0.83" transform="rotate(54 1164 396)"/>
<rect x="731" y="608" width="7" height="3" fill="#ffc8b8" opacity="0.78" transform="rotate(161 731 608)"/>
<rect x="786" y="244" width="8" height="3" fill="#ffd8d0" opacity="0.96" transform="rotate(45 786 244)"/>
<rect x="996" y="693" width="8" height="3" fill="#d0fff0" opacity="0.85" transform="rotate(109 996 693)"/>
<rect x="865" y="246" width="10" height="3" fill="#ffd8d0" opacity="0.93" transform="rotate(79 865 246)"/>
<rect x="1068" y="23" width="8" height="3" fill="#181028" opacity="1.00" transform="rotate(153 1068 23)"/>
<rect x="1048" y="630" width="10" height="3" fill="#ffd8d0" opacity="0.90" transform="rotate(148 1048 630)"/>
<rect x="730" y="579" width="9" height="3" fill="#ffc8b8" opacity="0.75" transform="rotate(130 730 579)"/>
<rect x="1003" y="568" width="6" height="4" fill="#e8e8ff" opacity="0.96" transform="rotate(147 1003 568)"/>
<rect x="828" y="372" width="9" height="3" fill="#ffd8d0" opacity="0.83" transform="rotate(84 828 372)"/>
<rect x="1023" y="147" width="8" height="4" fill="#d0fff0" opacity="0.85" transform="rotate(151 1023 147)"/>
<rect x="950" y="393" width="10" height="3" fill="#b0f0e0" opacity="0.80" transform="rotate(139 950 393)"/>
<rect x="1146" y="649" width="6" height="3" fill="#ffc8b8" opacity="0.87" transform="rotate(179 1146 649)"/>
<rect x="1231" y="356" width="7" height="3" fill="#ffb8b0" opacity="0.81" transform="rotate(179 1231 356)"/>
<rect x="813" y="180" width="7" height="3" fill="#fff0c0" opacity="0.85" transform="rotate(89 813 180)"/>
<rect x="1100" y="407" width="7" height="3" fill="#b0f0e0" opacity="0.90" transform="rotate(83 1100 407)"/>
<rect x="855" y="620" width="6" height="4" fill="#ffffff" opacity="0.96" transform="rotate(42 855 620)"/>
<rect x="1026" y="577" width="8" height="3" fill="#ffffff" opacity="0.89" transform="rotate(19 1026 577)"/>
<rect x="1122" y="48" width="7" height="4" fill="#ffb8b0" opacity="0.92" transform="rotate(12 1122 48)"/>
<rect x="1291" y="3" width="9" height="3" fill="#ffffff" opacity="0.90" transform="rotate(171 1291 3)"/>
<rect x="774" y="480" width="6" height="3" fill="#e8e8ff" opacity="0.77" transform="rotate(10 774 480)"/>
<rect x="878" y="533" width="8" height="4" fill="#181028" opacity="0.89" transform="rotate(48 878 533)"/>
<rect x="1013" y="400" width="9" height="4" fill="#ffffff" opacity="0.99" transform="rotate(125 1013 400)"/>
<rect x="1053" y="108" width="10" height="3" fill="#fff0f0" opacity="0.88" transform="rotate(62 1053 108)"/>
<rect x="871" y="48" width="9" height="3" fill="#ffffff" opacity="0.79" transform="rotate(130 871 48)"/>
<rect x="1106" y="525" width="6" height="3" fill="#ffc8b8" opacity="0.96" transform="rotate(15 1106 525)"/>
<rect x="929" y="318" width="10" height="3" fill="#fff0f0" opacity="0.90" transform="rotate(51 929 318)"/>
<rect x="1094" y="471" width="7" height="3" fill="#e8e8ff" opacity="0.88" transform="rotate(26 1094 471)"/>
<rect x="619" y="464" width="7" height="4" fill="#d0fff0" opacity="0.96" transform="rotate(119 619 464)"/>
<rect x="1026" y="591" width="7" height="3" fill="#e8e8ff" opacity="0.86" transform="rotate(138 1026 591)"/>
<rect x="855" y="116" width="7" height="4" fill="#ffb8b0" opacity="0.94" transform="rotate(174 855 116)"/>
<rect x="1123" y="626" width="8" height="3" fill="#ffc8b8" opacity="0.88" transform="rotate(122 1123 626)"/>
<rect x="908" y="124" width="8" height="3" fill="#ffd8d0" opacity="0.94" transform="rotate(83 908 124)"/>
<rect x="997" y="362" width="8" height="3" fill="#ffd8d0" opacity="0.89" transform="rotate(143 997 362)"/>
<rect x="1055" y="312" width="7" height="3" fill="#ffd8d0" opacity="0.88" transform="rotate(11 1055 312)"/>
<rect x="1050" y="478" width="6" height="3" fill="#ffffff" opacity="0.79" transform="rotate(80 1050 478)"/>
<rect x="1033" y="220" width="9" height="3" fill="#ffffff" opacity="0.89" transform="rotate(116 1033 220)"/>
<rect x="929" y="23" width="9" height="3" fill="#d0fff0" opacity="0.76" transform="rotate(12 929 23)"/>
<rect x="1049" y="415" width="8" height="4" fill="#ffffff" opacity="0.80" transform="rotate(37 1049 415)"/>
<rect x="1280" y="315" width="8" height="3" fill="#b0f0e0" opacity="0.81" transform="rotate(63 1280 315)"/>
<rect x="1183" y="452" width="10" height="4" fill="#ffc8b8" opacity="0.89" transform="rotate(50 1183 452)"/>
<rect x="1078" y="210" width="9" height="3" fill="#d0fff0" opacity="0.99" transform="rotate(99 1078 210)"/>
<rect x="1287" y="430" width="7" height="3" fill="#ffd8d0" opacity="0.94" transform="rotate(56 1287 430)"/>
<rect x="977" y="430" width="7" height="4" fill="#e8e8ff" opacity="0.82" transform="rotate(161 977 430)"/>
<rect x="1048" y="281" width="10" height="4" fill="#d0fff0" opacity="0.90" transform="rotate(150 1048 281)"/>
<rect x="777" y="659" width="7" height="3" fill="#ffffff" opacity="1.00" transform="rotate(103 777 659)"/>
<rect x="798" y="302" width="7" height="4" fill="#ffffff" opacity="0.84" transform="rotate(120 798 302)"/>
<rect x="1116" y="330" width="8" height="3" fill="#ffffff" opacity="0.79" transform="rotate(100 1116 330)"/>
<rect x="764" y="564" width="8" height="3" fill="#ffb8b0" opacity="0.97" transform="rotate(104 764 564)"/>
<rect x="902" y="666" width="8" height="3" fill="#ffc8b8" opacity="0.77" transform="rotate(32 902 666)"/>
<rect x="1213" y="185" width="7" height="3" fill="#ffd8d0" opacity="0.79" transform="rotate(35 1213 185)"/>
<rect x="710" y="518" width="9" height="4" fill="#d0fff0" opacity="0.82" transform="rotate(85 710 518)"/>
<rect x="824" y="351" width="9" height="3" fill="#ffc8b8" opacity="0.98" transform="rotate(132 824 351)"/>
<rect x="937" y="236" width="7" height="3" fill="#e8e8ff" opacity="0.93" transform="rotate(137 937 236)"/>
<rect x="1314" y="520" width="7" height="4" fill="#e8e8ff" opacity="0.88" transform="rotate(177 1314 520)"/>
<rect x="1090" y="264" width="6" height="3" fill="#ffc8b8" opacity="0.81" transform="rotate(135 1090 264)"/>
<rect x="1159" y="551" width="10" height="3" fill="#ffffff" opacity="0.89" transform="rotate(151 1159 551)"/>
<rect x="894" y="486" width="9" height="4" fill="#e8e8ff" opacity="0.94" transform="rotate(77 894 486)"/>
<rect x="945" y="301" width="8" height="3" fill="#d0fff0" opacity="0.79" transform="rotate(5 945 301)"/>
<rect x="1094" y="516" width="10" height="3" fill="#fff0f0" opacity="0.89" transform="rotate(155 1094 516)"/>
<rect x="1174" y="164" width="10" height="3" fill="#d0fff0" opacity="0.96" transform="rotate(141 1174 164)"/>
<rect x="900" y="286" width="8" height="4" fill="#fff0f0" opacity="0.95" transform="rotate(147 900 286)"/>
<rect x="1318" y="442" width="7" height="4" fill="#ffb8b0" opacity="0.84" transform="rotate(108 1318 442)"/>
<rect x="601" y="385" width="7" height="3" fill="#e8e8ff" opacity="0.81" transform="rotate(89 601 385)"/>
<rect x="743" y="333" width="8" height="3" fill="#ffc8b8" opacity="0.91" transform="rotate(49 743 333)"/>
<rect x="1090" y="465" width="8" height="4" fill="#b0f0e0" opacity="0.81" transform="rotate(127 1090 465)"/>
<rect x="924" y="516" width="8" height="4" fill="#ffc8b8" opacity="0.82" transform="rotate(46 924 516)"/>
<rect x="781" y="618" width="8" height="3" fill="#181028" opacity="0.81" transform="rotate(99 781 618)"/>
<rect x="1047" y="129" width="7" height="3" fill="#181028" opacity="0.76" transform="rotate(22 1047 129)"/>
<rect x="968" y="585" width="7" height="3" fill="#fff0f0" opacity="0.99" transform="rotate(152 968 585)"/>
<rect x="1022" y="256" width="9" height="3" fill="#ffc8b8" opacity="0.91" transform="rotate(85 1022 256)"/>
<rect x="593" y="608" width="9" height="3" fill="#e8e8ff" opacity="0.93" transform="rotate(67 593 608)"/>
<rect x="746" y="317" width="8" height="3" fill="#e8e8ff" opacity="0.82" transform="rotate(28 746 317)"/>
<rect x="1100" y="434" width="7" height="3" fill="#ffffff" opacity="0.75" transform="rotate(124 1100 434)"/>
<rect x="1061" y="657" width="7" height="4" fill="#ffffff" opacity="1.00" transform="rotate(6 1061 657)"/>
<rect x="854" y="345" width="6" height="3" fill="#fff0f0" opacity="0.78" transform="rotate(19 854 345)"/>
<rect x="969" y="42" width="6" height="4" fill="#ffc8b8" opacity="0.86" transform="rotate(143 969 42)"/>
<rect x="718" y="125" width="8" height="3" fill="#fff0c0" opacity="0.95" transform="rotate(97 718 125)"/>
<rect x="423" y="200" width="9" height="3" fill="#181028" opacity="0.81" transform="rotate(23 423 200)"/>
<rect x="976" y="458" width="7" height="4" fill="#ffffff" opacity="0.86" transform="rotate(132 976 458)"/>
<rect x="1001" y="552" width="8" height="3" fill="#ffffff" opacity="0.94" transform="rotate(22 1001 552)"/>
<rect x="916" y="255" width="9" height="4" fill="#b0f0e0" opacity="0.75" transform="rotate(39 916 255)"/>
<rect x="1017" y="363" width="8" height="3" fill="#ffb8b0" opacity="0.97" transform="rotate(132 1017 363)"/>
<rect x="883" y="18" width="9" height="3" fill="#b0f0e0" opacity="0.89" transform="rotate(94 883 18)"/>
<rect x="1178" y="92" width="8" height="3" fill="#ffc8b8" opacity="0.87" transform="rotate(54 1178 92)"/>
<rect x="1136" y="533" width="6" height="3" fill="#fff0f0" opacity="0.78" transform="rotate(23 1136 533)"/>
<rect x="1208" y="414" width="7" height="4" fill="#e8e8ff" opacity="0.92" transform="rotate(138 1208 414)"/>
<rect x="983" y="43" width="7" height="4" fill="#ffffff" opacity="0.87" transform="rotate(138 983 43)"/>
<rect x="909" y="18" width="8" height="3" fill="#ffffff" opacity="0.77" transform="rotate(94 909 18)"/>
<rect x="727" y="155" width="8" height="3" fill="#ffffff" opacity="0.87" transform="rotate(102 727 155)"/>
<rect x="936" y="349" width="9" height="3" fill="#ffd8d0" opacity="0.96" transform="rotate(36 936 349)"/>
<rect x="880" y="555" width="7" height="3" fill="#ffffff" opacity="0.91" transform="rotate(119 880 555)"/>
<rect x="757" y="128" width="8" height="3" fill="#d0fff0" opacity="0.83" transform="rotate(162 757 128)"/>
<rect x="1110" y="506" width="7" height="3" fill="#ffffff" opacity="0.97" transform="rotate(77 1110 506)"/>
<rect x="872" y="22" width="8" height="4" fill="#fff0c0" opacity="0.86" transform="rotate(105 872 22)"/>
<rect x="878" y="339" width="9" height="3" fill="#181028" opacity="0.86" transform="rotate(100 878 339)"/>
<rect x="842" y="223" width="9" height="3" fill="#d0fff0" opacity="0.77" transform="rotate(97 842 223)"/>
<rect x="1259" y="698" width="9" height="3" fill="#ffb8b0" opacity="0.84" transform="rotate(28 1259 698)"/>
<rect x="1117" y="470" width="8" height="3" fill="#181028" opacity="0.98" transform="rotate(171 1117 470)"/>
<rect x="1005" y="544" width="9" height="3" fill="#e8e8ff" opacity="0.81" transform="rotate(167 1005 544)"/>
<rect x="1138" y="54" width="8" height="3" fill="#fff0c0" opacity="0.87" transform="rotate(128 1138 54)"/>
<rect x="1204" y="293" width="10" height="3" fill="#ffd8d0" opacity="0.90" transform="rotate(135 1204 293)"/>
<rect x="1090" y="672" width="9" height="3" fill="#e8e8ff" opacity="0.81" transform="rotate(170 1090 672)"/>
<rect x="865" y="617" width="8" height="3" fill="#ffffff" opacity="0.87" transform="rotate(105 865 617)"/>
<rect x="964" y="273" width="8" height="3" fill="#ffd8d0" opacity="0.85" transform="rotate(46 964 273)"/>
<rect x="675" y="468" width="9" height="3" fill="#b0f0e0" opacity="0.82" transform="rotate(67 675 468)"/>
<rect x="1068" y="636" width="7" height="4" fill="#fff0c0" opacity="0.92" transform="rotate(44 1068 636)"/>
<rect x="963" y="148" width="8" height="3" fill="#b0f0e0" opacity="0.81" transform="rotate(60 963 148)"/>
<rect x="869" y="133" width="9" height="3" fill="#ffb8b0" opacity="0.93" transform="rotate(141 869 133)"/>
<rect x="1371" y="326" width="9" height="4" fill="#e8e8ff" opacity="0.85" transform="rotate(164 1371 326)"/>
<rect x="911" y="437" width="6" height="3" fill="#ffc8b8" opacity="0.84" transform="rotate(59 911 437)"/>
<rect x="602" y="680" width="6" height="4" fill="#ffd8d0" opacity="0.79" transform="rotate(9 602 680)"/>
<rect x="1002" y="486" width="7" height="3" fill="#e8e8ff" opacity="0.81" transform="rotate(74 1002 486)"/>
<rect x="1083" y="394" width="7" height="3" fill="#ffffff" opacity="0.99" transform="rotate(133 1083 394)"/>
<rect x="844" y="72" width="7" height="4" fill="#ffffff" opacity="0.96" transform="rotate(89 844 72)"/>
<rect x="840" y="457" width="7" height="3" fill="#b0f0e0" opacity="0.76" transform="rotate(125 840 457)"/>
<rect x="838" y="392" width="9" height="3" fill="#e8e8ff" opacity="0.77" transform="rotate(17 838 392)"/>
<rect x="821" y="119" width="9" height="3" fill="#b0f0e0" opacity="0.82" transform="rotate(94 821 119)"/>
<rect x="986" y="501" width="6" height="3" fill="#ffffff" opacity="0.86" transform="rotate(173 986 501)"/>
<rect x="1020" y="402" width="10" height="4" fill="#181028" opacity="0.78" transform="rotate(180 1020 402)"/>
<rect x="1038" y="214" width="7" height="3" fill="#e8e8ff" opacity="0.86" transform="rotate(169 1038 214)"/>
<rect x="1139" y="494" width="6" height="4" fill="#ffb8b0" opacity="0.81" transform="rotate(86 1139 494)"/>
<rect x="1018" y="248" width="9" height="3" fill="#b0f0e0" opacity="0.77" transform="rotate(84 1018 248)"/>
<rect x="1338" y="36" width="8" height="4" fill="#ffffff" opacity="0.97" transform="rotate(97 1338 36)"/>
<rect x="879" y="427" width="9" height="3" fill="#b0f0e0" opacity="0.86" transform="rotate(18 879 427)"/>
<rect x="1081" y="492" width="7" height="4" fill="#ffc8b8" opacity="0.79" transform="rotate(127 1081 492)"/>
<rect x="773" y="359" width="10" height="3" fill="#181028" opacity="0.99" transform="rotate(132 773 359)"/>
<rect x="719" y="298" width="6" height="3" fill="#181028" opacity="0.93" transform="rotate(49 719 298)"/>
<rect x="1166" y="127" width="6" height="3" fill="#ffffff" opacity="0.76" transform="rotate(82 1166 127)"/>
<rect x="1013" y="579" width="6" height="4" fill="#e8e8ff" opacity="0.88" transform="rotate(57 1013 579)"/>
<rect x="830" y="37" width="8" height="4" fill="#d0fff0" opacity="0.87" transform="rotate(117 830 37)"/>
<rect x="1050" y="95" width="7" height="3" fill="#d0fff0" opacity="0.83" transform="rotate(89 1050 95)"/>
<rect x="879" y="639" width="6" height="3" fill="#ffffff" opacity="0.86" transform="rotate(131 879 639)"/>
<rect x="1230" y="346" width="8" height="4" fill="#ffb8b0" opacity="0.99" transform="rotate(133 1230 346)"/>
<rect x="855" y="225" width="6" height="4" fill="#d0fff0" opacity="0.94" transform="rotate(10 855 225)"/>
<rect x="1053" y="146" width="9" height="3" fill="#ffc8b8" opacity="0.78" transform="rotate(66 1053 146)"/>
<rect x="734" y="37" width="8" height="4" fill="#ffffff" opacity="0.81" transform="rotate(113 734 37)"/>
<rect x="1108" y="553" width="9" height="3" fill="#d0fff0" opacity="0.98" transform="rotate(87 1108 553)"/>
<rect x="819" y="686" width="9" height="4" fill="#ffffff" opacity="0.94" transform="rotate(68 819 686)"/>
<rect x="1306" y="214" width="10" height="4" fill="#ffd8d0" opacity="0.89" transform="rotate(102 1306 214)"/>
<rect x="1161" y="540" width="8" height="4" fill="#e8e8ff" opacity="0.99" transform="rotate(80 1161 540)"/>
<rect x="713" y="349" width="9" height="3" fill="#ffb8b0" opacity="0.86" transform="rotate(169 713 349)"/>
<rect x="1069" y="372" width="9" height="4" fill="#e8e8ff" opacity="0.90" transform="rotate(54 1069 372)"/>
<rect x="661" y="675" width="9" height="3" fill="#e8e8ff" opacity="0.99" transform="rotate(120 661 675)"/>
<rect x="857" y="606" width="10" height="4" fill="#ffd8d0" opacity="0.83" transform="rotate(52 857 606)"/>
<rect x="1047" y="52" width="9" height="4" fill="#ffb8b0" opacity="0.99" transform="rotate(11 1047 52)"/>
<rect x="681" y="24" width="8" height="4" fill="#b0f0e0" opacity="0.86" transform="rotate(114 681 24)"/>
<rect x="1221" y="48" width="8" height="3" fill="#181028" opacity="0.86" transform="rotate(13 1221 48)"/>
<rect x="1021" y="77" width="7" height="3" fill="#ffb8b0" opacity="0.84" transform="rotate(103 1021 77)"/>
<rect x="902" y="432" width="8" height="3" fill="#ffffff" opacity="0.98" transform="rotate(134 902 432)"/>
<rect x="835" y="379" width="8" height="3" fill="#ffb8b0" opacity="0.95" transform="rotate(110 835 379)"/>
<rect x="948" y="278" width="7" height="3" fill="#ffffff" opacity="0.99" transform="rotate(17 948 278)"/>
<rect x="1262" y="547" width="8" height="4" fill="#b0f0e0" opacity="0.83" transform="rotate(89 1262 547)"/>
<rect x="1259" y="49" width="7" height="3" fill="#fff0c0" opacity="0.89" transform="rotate(176 1259 49)"/>
<rect x="1220" y="173" width="9" height="4" fill="#fff0f0" opacity="0.91" transform="rotate(54 1220 173)"/>
<rect x="1119" y="25" width="9" height="3" fill="#ffd8d0" opacity="0.87" transform="rotate(14 1119 25)"/>
<rect x="892" y="142" width="9" height="4" fill="#ffb8b0" opacity="0.94" transform="rotate(64 892 142)"/>
<rect x="1033" y="380" width="8" height="3" fill="#ffd8d0" opacity="0.85" transform="rotate(26 1033 380)"/>
<rect x="707" y="307" width="9" height="3" fill="#ffd8d0" opacity="0.78" transform="rotate(72 707 307)"/>
<rect x="1091" y="91" width="8" height="3" fill="#b0f0e0" opacity="0.95" transform="rotate(72 1091 91)"/>
<rect x="911" y="414" width="10" height="3" fill="#ffd8d0" opacity="0.77" transform="rotate(86 911 414)"/>
<rect x="1226" y="460" width="8" height="3" fill="#181028" opacity="0.84" transform="rotate(26 1226 460)"/>
<rect x="1067" y="248" width="8" height="4" fill="#e8e8ff" opacity="0.90" transform="rotate(105 1067 248)"/>
<rect x="958" y="245" width="9" height="3" fill="#ffb8b0" opacity="0.99" transform="rotate(31 958 245)"/>
<rect x="919" y="36" width="9" height="3" fill="#ffd8d0" opacity="0.91" transform="rotate(125 919 36)"/>
<rect x="812" y="151" width="10" height="3" fill="#ffc8b8" opacity="0.80" transform="rotate(113 812 151)"/>
<rect x="828" y="445" width="7" height="3" fill="#ffb8b0" opacity="0.95" transform="rotate(125 828 445)"/>
<rect x="1018" y="608" width="8" height="3" fill="#181028" opacity="0.99" transform="rotate(113 1018 608)"/>
<rect x="1138" y="307" width="8" height="3" fill="#e8e8ff" opacity="0.77" transform="rotate(51 1138 307)"/>
<rect x="1089" y="622" width="10" height="3" fill="#fff0c0" opacity="0.86" transform="rotate(1 1089 622)"/>
<rect x="949" y="150" width="9" height="4" fill="#fff0f0" opacity="0.86" transform="rotate(86 949 150)"/>
<rect x="1027" y="363" width="10" height="3" fill="#b0f0e0" opacity="0.98" transform="rotate(144 1027 363)"/>
<rect x="1409" y="265" width="6" height="3" fill="#d0fff0" opacity="0.95" transform="rotate(23 1409 265)"/>
<rect x="963" y="326" width="8" height="4" fill="#181028" opacity="0.98" transform="rotate(7 963 326)"/>
<rect x="1025" y="525" width="9" height="4" fill="#ffc8b8" opacity="0.95" transform="rotate(124 1025 525)"/>
<rect x="783" y="653" width="8" height="3" fill="#ffc8b8" opacity="0.83" transform="rotate(11 783 653)"/>
<rect x="1028" y="517" width="9" height="3" fill="#ffc8b8" opacity="0.95" transform="rotate(38 1028 517)"/>
<rect x="943" y="374" width="10" height="3" fill="#181028" opacity="0.90" transform="rotate(59 943 374)"/>
<rect x="794" y="451" width="8" height="3" fill="#fff0c0" opacity="0.81" transform="rotate(91 794 451)"/>
<rect x="481" y="605" width="10" height="4" fill="#fff0c0" opacity="0.95" transform="rotate(7 481 605)"/>
<rect x="1063" y="652" width="7" height="3" fill="#ffffff" opacity="0.90" transform="rotate(160 1063 652)"/>
<rect x="1057" y="632" width="10" height="3" fill="#e8e8ff" opacity="0.82" transform="rotate(111 1057 632)"/>
<rect x="938" y="241" width="10" height="4" fill="#ffd8d0" opacity="0.96" transform="rotate(176 938 241)"/>
<rect x="940" y="241" width="9" height="3" fill="#ffb8b0" opacity="0.81" transform="rotate(172 940 241)"/>
<rect x="1213" y="422" width="7" height="3" fill="#ffffff" opacity="0.87" transform="rotate(16 1213 422)"/>
<rect x="1009" y="173" width="7" height="3" fill="#ffd8d0" opacity="0.76" transform="rotate(119 1009 173)"/>
<rect x="936" y="619" width="9" height="4" fill="#e8e8ff" opacity="0.98" transform="rotate(62 936 619)"/>
<rect x="625" y="380" width="10" height="4" fill="#e8e8ff" opacity="0.76" transform="rotate(98 625 380)"/>
<rect x="960" y="193" width="7" height="3" fill="#ffd8d0" opacity="0.90" transform="rotate(108 960 193)"/>
<rect x="1051" y="524" width="7" height="3" fill="#d0fff0" opacity="0.90" transform="rotate(60 1051 524)"/>
<rect x="1019" y="10" width="6" height="4" fill="#d0fff0" opacity="0.88" transform="rotate(109 1019 10)"/>
<rect x="1104" y="507" width="9" height="4" fill="#ffffff" opacity="0.78" transform="rotate(28 1104 507)"/>
<rect x="1277" y="333" width="6" height="3" fill="#b0f0e0" opacity="0.91" transform="rotate(40 1277 333)"/>
<rect x="891" y="320" width="7" height="3" fill="#ffd8d0" opacity="1.00" transform="rotate(20 891 320)"/>
<rect x="932" y="309" width="6" height="3" fill="#e8e8ff" opacity="0.88" transform="rotate(10 932 309)"/>
<rect x="1094" y="339" width="9" height="3" fill="#b0f0e0" opacity="0.76" transform="rotate(43 1094 339)"/>
<rect x="829" y="29" width="7" height="3" fill="#ffc8b8" opacity="0.95" transform="rotate(115 829 29)"/>
<rect x="845" y="356" width="8" height="4" fill="#e8e8ff" opacity="0.80" transform="rotate(15 845 356)"/>
<rect x="907" y="95" width="6" height="3" fill="#fff0c0" opacity="0.76" transform="rotate(62 907 95)"/>
<rect x="966" y="192" width="9" height="4" fill="#d0fff0" opacity="0.76" transform="rotate(160 966 192)"/>
<rect x="1090" y="8" width="8" height="3" fill="#ffd8d0" opacity="0.75" transform="rotate(32 1090 8)"/>
<rect x="877" y="27" width="6" height="3" fill="#ffc8b8" opacity="0.80" transform="rotate(23 877 27)"/>
<rect x="1149" y="250" width="7" height="4" fill="#e8e8ff" opacity="0.83" transform="rotate(20 1149 250)"/>
<rect x="1063" y="541" width="7" height="4" fill="#ffc8b8" opacity="0.91" transform="rotate(12 1063 541)"/>
<rect x="1031" y="184" width="6" height="3" fill="#d0fff0" opacity="1.00" transform="rotate(88 1031 184)"/>
<rect x="1005" y="584" width="8" height="3" fill="#ffffff" opacity="0.94" transform="rotate(37 1005 584)"/>
<rect x="1558" y="483" width="6" height="4" fill="#181028" opacity="0.87" transform="rotate(54 1558 483)"/>
<rect x="1218" y="79" width="6" height="3" fill="#b0f0e0" opacity="0.93" transform="rotate(45 1218 79)"/>
<rect x="803" y="528" width="9" height="3" fill="#fff0c0" opacity="0.95" transform="rotate(130 803 528)"/>
<rect x="1118" y="361" width="9" height="3" fill="#fff0c0" opacity="0.99" transform="rotate(17 1118 361)"/>
<rect x="1035" y="457" width="8" height="4" fill="#fff0c0" opacity="0.86" transform="rotate(61 1035 457)"/>
<rect x="883" y="617" width="9" height="3" fill="#b0f0e0" opacity="0.95" transform="rotate(179 883 617)"/>
<rect x="737" y="626" width="7" height="4" fill="#b0f0e0" opacity="0.87" transform="rotate(173 737 626)"/>
<rect x="1211" y="338" width="9" height="3" fill="#ffffff" opacity="0.99" transform="rotate(66 1211 338)"/>
<rect x="881" y="62" width="8" height="4" fill="#fff0f0" opacity="0.77" transform="rotate(39 881 62)"/>
<rect x="949" y="235" width="8" height="4" fill="#ffd8d0" opacity="0.93" transform="rotate(143 949 235)"/>
<rect x="1324" y="513" width="8" height="4" fill="#e8e8ff" opacity="0.80" transform="rotate(114 1324 513)"/>
<rect x="916" y="312" width="9" height="4" fill="#b0f0e0" opacity="0.93" transform="rotate(164 916 312)"/>
<rect x="1207" y="532" width="6" height="3" fill="#ffd8d0" opacity="0.98" transform="rotate(88 1207 532)"/>
<rect x="1298" y="121" width="6" height="3" fill="#ffd8d0" opacity="0.91" transform="rotate(64 1298 121)"/>
<rect x="1206" y="327" width="7" height="3" fill="#ffc8b8" opacity="0.95" transform="rotate(124 1206 327)"/>
<rect x="979" y="149" width="8" height="4" fill="#b0f0e0" opacity="0.95" transform="rotate(82 979 149)"/>
<rect x="1119" y="76" width="9" height="3" fill="#ffb8b0" opacity="0.89" transform="rotate(157 1119 76)"/>
<rect x="794" y="517" width="7" height="3" fill="#b0f0e0" opacity="0.79" transform="rotate(18 794 517)"/>
<rect x="1236" y="294" width="9" height="3" fill="#ffb8b0" opacity="0.96" transform="rotate(70 1236 294)"/>
<rect x="1545" y="411" width="6" height="4" fill="#e8e8ff" opacity="0.94" transform="rotate(124 1545 411)"/>
<rect x="923" y="435" width="9" height="4" fill="#fff0c0" opacity="0.77" transform="rotate(48 923 435)"/>
<rect x="827" y="301" width="9" height="4" fill="#ffd8d0" opacity="0.81" transform="rotate(173 827 301)"/>
<rect x="873" y="463" width="9" height="3" fill="#fff0f0" opacity="0.77" transform="rotate(164 873 463)"/>
<rect x="1035" y="394" width="9" height="3" fill="#b0f0e0" opacity="0.79" transform="rotate(123 1035 394)"/>
<rect x="1081" y="619" width="7" height="3" fill="#fff0f0" opacity="0.76" transform="rotate(174 1081 619)"/>
<rect x="1162" y="279" width="7" height="4" fill="#ffd8d0" opacity="0.87" transform="rotate(106 1162 279)"/>
<rect x="957" y="457" width="8" height="3" fill="#ffffff" opacity="0.96" transform="rotate(52 957 457)"/>
<rect x="576" y="257" width="8" height="4" fill="#ffffff" opacity="0.94" transform="rotate(108 576 257)"/>
<rect x="994" y="169" width="8" height="3" fill="#fff0f0" opacity="0.96" transform="rotate(94 994 169)"/>
<rect x="1282" y="345" width="6" height="3" fill="#fff0f0" opacity="0.99" transform="rotate(6 1282 345)"/>
<rect x="1067" y="690" width="10" height="3" fill="#ffffff" opacity="0.75" transform="rotate(36 1067 690)"/>
<rect x="692" y="126" width="10" height="4" fill="#181028" opacity="0.98" transform="rotate(57 692 126)"/>
<rect x="542" y="636" width="10" height="4" fill="#fff0f0" opacity="0.86" transform="rotate(142 542 636)"/>
<rect x="1210" y="424" width="6" height="3" fill="#ffb8b0" opacity="0.87" transform="rotate(157 1210 424)"/>
<rect x="859" y="658" width="9" height="3" fill="#fff0f0" opacity="0.86" transform="rotate(126 859 658)"/>
<rect x="1047" y="76" width="6" height="3" fill="#ffffff" opacity="0.91" transform="rotate(37 1047 76)"/>
<rect x="1028" y="570" width="9" height="4" fill="#ffb8b0" opacity="0.97" transform="rotate(21 1028 570)"/>
<rect x="975" y="409" width="6" height="3" fill="#181028" opacity="0.93" transform="rotate(86 975 409)"/>
<rect x="785" y="62" width="10" height="3" fill="#ffffff" opacity="0.80" transform="rotate(176 785 62)"/>
<rect x="981" y="605" width="7" height="3" fill="#d0fff0" opacity="0.87" transform="rotate(112 981 605)"/>
<rect x="850" y="681" width="8" height="3" fill="#fff0c0" opacity="0.93" transform="rotate(4 850 681)"/>
<rect x="1161" y="409" width="8" height="3" fill="#b0f0e0" opacity="0.90" transform="rotate(152 1161 409)"/>
<rect x="866" y="452" width="9" height="3" fill="#ffffff" opacity="0.99" transform="rotate(52 866 452)"/>
<rect x="810" y="252" width="6" height="4" fill="#b0f0e0" opacity="0.76" transform="rotate(89 810 252)"/>
<rect x="872" y="137" width="7" height="4" fill="#fff0f0" opacity="0.87" transform="rotate(4 872 137)"/>
<rect x="909" y="99" width="7" height="4" fill="#fff0c0" opacity="0.94" transform="rotate(104 909 99)"/>
<rect x="906" y="481" width="6" height="3" fill="#e8e8ff" opacity="0.81" transform="rotate(76 906 481)"/>
<rect x="759" y="351" width="8" height="3" fill="#e8e8ff" opacity="0.78" transform="rotate(70 759 351)"/>
<rect x="1449" y="217" width="10" height="3" fill="#e8e8ff" opacity="0.92" transform="rotate(158 1449 217)"/>
<rect x="969" y="285" width="10" height="3" fill="#ffffff" opacity="0.96" transform="rotate(115 969 285)"/>
<rect x="732" y="598" width="9" height="3" fill="#ffc8b8" opacity="0.94" transform="rotate(97 732 598)"/>
<rect x="877" y="169" width="10" height="3" fill="#ffffff" opacity="0.96" transform="rotate(81 877 169)"/>
<rect x="1087" y="377" width="7" height="3" fill="#fff0c0" opacity="0.76" transform="rotate(15 1087 377)"/>
<rect x="825" y="554" width="6" height="3" fill="#ffffff" opacity="0.88" transform="rotate(128 825 554)"/>
<rect x="1079" y="314" width="8" height="3" fill="#ffc8b8" opacity="0.75" transform="rotate(122 1079 314)"/>
<rect x="629" y="167" width="7" height="4" fill="#ffffff" opacity="0.94" transform="rotate(96 629 167)"/>
<rect x="885" y="454" width="8" height="3" fill="#ffffff" opacity="0.93" transform="rotate(131 885 454)"/>
<rect x="981" y="316" width="8" height="3" fill="#ffb8b0" opacity="0.87" transform="rotate(103 981 316)"/>
<rect x="976" y="253" width="8" height="3" fill="#e8e8ff" opacity="0.75" transform="rotate(106 976 253)"/>
<rect x="779" y="409" width="9" height="4" fill="#fff0c0" opacity="0.88" transform="rotate(62 779 409)"/>
<rect x="760" y="643" width="9" height="4" fill="#181028" opacity="0.92" transform="rotate(110 760 643)"/>
<rect x="1142" y="644" width="7" height="3" fill="#181028" opacity="0.83" transform="rotate(177 1142 644)"/>
<rect x="1057" y="423" width="7" height="4" fill="#ffffff" opacity="0.87" transform="rotate(135 1057 423)"/>
<rect x="973" y="413" width="10" height="3" fill="#ffb8b0" opacity="0.97" transform="rotate(72 973 413)"/>
<rect x="1179" y="362" width="8" height="4" fill="#ffd8d0" opacity="0.88" transform="rotate(120 1179 362)"/>
<rect x="895" y="525" width="8" height="4" fill="#e8e8ff" opacity="0.89" transform="rotate(27 895 525)"/>
<rect x="1023" y="613" width="9" height="3" fill="#fff0c0" opacity="0.85" transform="rotate(137 1023 613)"/>
<rect x="1000" y="562" width="8" height="3" fill="#ffffff" opacity="0.98" transform="rotate(133 1000 562)"/>
<rect x="989" y="182" width="7" height="3" fill="#d0fff0" opacity="0.77" transform="rotate(62 989 182)"/>
<rect x="926" y="567" width="7" height="3" fill="#fff0c0" opacity="0.93" transform="rotate(169 926 567)"/>
<rect x="1490" y="590" width="8" height="3" fill="#ffd8d0" opacity="0.77" transform="rotate(20 1490 590)"/>
<rect x="1265" y="48" width="8" height="3" fill="#181028" opacity="0.99" transform="rotate(177 1265 48)"/>
<rect x="1143" y="130" width="7" height="3" fill="#b0f0e0" opacity="0.87" transform="rotate(65 1143 130)"/>
<rect x="900" y="587" width="6" height="3" fill="#ffc8b8" opacity="0.77" transform="rotate(54 900 587)"/>
<rect x="837" y="396" width="7" height="4" fill="#fff0f0" opacity="0.96" transform="rotate(79 837 396)"/>
<rect x="870" y="367" width="7" height="3" fill="#fff0c0" opacity="0.80" transform="rotate(132 870 367)"/>
<rect x="1058" y="14" width="10" height="3" fill="#ffd8d0" opacity="0.89" transform="rotate(63 1058 14)"/>
<rect x="962" y="424" width="7" height="4" fill="#ffb8b0" opacity="0.96" transform="rotate(21 962 424)"/>
<rect x="747" y="644" width="7" height="3" fill="#181028" opacity="0.76" transform="rotate(105 747 644)"/>
<rect x="1107" y="700" width="10" height="3" fill="#ffd8d0" opacity="0.99" transform="rotate(87 1107 700)"/>
<rect x="1027" y="29" width="7" height="3" fill="#ffb8b0" opacity="0.97" transform="rotate(81 1027 29)"/>
<rect x="760" y="62" width="9" height="3" fill="#d0fff0" opacity="0.85" transform="rotate(155 760 62)"/>
<rect x="1178" y="513" width="8" height="3" fill="#fff0f0" opacity="0.97" transform="rotate(162 1178 513)"/>
<rect x="985" y="190" width="8" height="3" fill="#fff0c0" opacity="0.86" transform="rotate(91 985 190)"/>
<rect x="925" y="90" width="9" height="3" fill="#b0f0e0" opacity="0.80" transform="rotate(133 925 90)"/>
<rect x="884" y="192" width="8" height="4" fill="#ffb8b0" opacity="0.83" transform="rotate(177 884 192)"/>
<rect x="1156" y="300" width="9" height="4" fill="#e8e8ff" opacity="0.90" transform="rotate(102 1156 300)"/>
<rect x="524" y="433" width="7" height="3" fill="#ffffff" opacity="0.84" transform="rotate(19 524 433)"/>
<rect x="1407" y="670" width="6" height="3" fill="#ffd8d0" opacity="0.81" transform="rotate(63 1407 670)"/>
<rect x="632" y="423" width="7" height="4" fill="#ffc8b8" opacity="0.92" transform="rotate(114 632 423)"/>
<rect x="905" y="357" width="7" height="4" fill="#ffb8b0" opacity="0.83" transform="rotate(115 905 357)"/>
<rect x="1013" y="205" width="7" height="4" fill="#ffd8d0" opacity="0.78" transform="rotate(158 1013 205)"/>
<rect x="684" y="530" width="10" height="3" fill="#fff0c0" opacity="0.81" transform="rotate(51 684 530)"/>
<rect x="647" y="551" width="9" height="4" fill="#181028" opacity="0.88" transform="rotate(61 647 551)"/>
<rect x="993" y="88" width="9" height="3" fill="#d0fff0" opacity="0.88" transform="rotate(121 993 88)"/>
<rect x="847" y="326" width="10" height="3" fill="#ffb8b0" opacity="0.86" transform="rotate(149 847 326)"/>
<rect x="877" y="621" width="9" height="3" fill="#fff0f0" opacity="0.89" transform="rotate(100 877 621)"/>
<rect x="833" y="398" width="7" height="3" fill="#ffd8d0" opacity="0.82" transform="rotate(47 833 398)"/>
<rect x="1145" y="492" width="9" height="3" fill="#ffb8b0" opacity="0.83" transform="rotate(107 1145 492)"/>
<rect x="826" y="217" width="9" height="3" fill="#fff0f0" opacity="0.81" transform="rotate(166 826 217)"/>
<rect x="923" y="580" width="7" height="3" fill="#b0f0e0" opacity="0.88" transform="rotate(141 923 580)"/>
<rect x="814" y="104" width="7" height="3" fill="#ffd8d0" opacity="0.89" transform="rotate(99 814 104)"/>
<rect x="946" y="620" width="8" height="4" fill="#fff0c0" opacity="0.77" transform="rotate(166 946 620)"/>
<rect x="622" y="475" width="8" height="4" fill="#ffffff" opacity="0.77" transform="rotate(77 622 475)"/>
<rect x="902" y="21" width="9" height="4" fill="#ffffff" opacity="0.99" transform="rotate(33 902 21)"/>
<rect x="1117" y="544" width="10" height="3" fill="#d0fff0" opacity="0.89" transform="rotate(158 1117 544)"/>
<rect x="1088" y="523" width="9" height="3" fill="#ffffff" opacity="0.80" transform="rotate(160 1088 523)"/>
<rect x="943" y="610" width="8" height="3" fill="#fff0f0" opacity="0.93" transform="rotate(163 943 610)"/>
<rect x="969" y="3" width="10" height="3" fill="#d0fff0" opacity="0.89" transform="rotate(117 969 3)"/>
<rect x="984" y="101" width="6" height="3" fill="#fff0c0" opacity="0.97" transform="rotate(168 984 101)"/>
<rect x="1299" y="434" width="8" height="3" fill="#b0f0e0" opacity="0.96" transform="rotate(35 1299 434)"/>
<rect x="1089" y="589" width="8" height="3" fill="#b0f0e0" opacity="0.89" transform="rotate(164 1089 589)"/>
<rect x="1202" y="437" width="7" height="3" fill="#d0fff0" opacity="0.83" transform="rotate(142 1202 437)"/>
<rect x="769" y="140" width="7" height="3" fill="#fff0c0" opacity="0.94" transform="rotate(159 769 140)"/>
<rect x="966" y="533" width="8" height="3" fill="#ffffff" opacity="0.88" transform="rotate(55 966 533)"/>
<rect x="1063" y="620" width="7" height="4" fill="#fff0c0" opacity="0.75" transform="rotate(108 1063 620)"/>
<rect x="789" y="324" width="8" height="4" fill="#e8e8ff" opacity="0.77" transform="rotate(8 789 324)"/>
<rect x="878" y="592" width="8" height="3" fill="#d0fff0" opacity="0.97" transform="rotate(3 878 592)"/>
<rect x="1091" y="382" width="9" height="3" fill="#fff0c0" opacity="0.84" transform="rotate(82 1091 382)"/>
<rect x="940" y="386" width="10" height="3" fill="#e8e8ff" opacity="0.82" transform="rotate(76 940 386)"/>
<rect x="1187" y="635" width="8" height="3" fill="#fff0c0" opacity="0.79" transform="rotate(40 1187 635)"/>
<rect x="1238" y="372" width="10" height="3" fill="#fff0f0" opacity="0.95" transform="rotate(73 1238 372)"/>
<rect x="911" y="112" width="8" height="4" fill="#ffffff" opacity="0.88" transform="rotate(91 911 112)"/>
<rect x="873" y="553" width="8" height="4" fill="#e8e8ff" opacity="0.78" transform="rotate(30 873 553)"/>
<rect x="986" y="532" width="7" height="3" fill="#ffc8b8" opacity="0.92" transform="rotate(150 986 532)"/>
<rect x="949" y="424" width="8" height="4" fill="#ffd8d0" opacity="0.92" transform="rotate(179 949 424)"/>
<rect x="1094" y="646" width="7" height="3" fill="#fff0f0" opacity="0.95" transform="rotate(152 1094 646)"/>
<rect x="1237" y="656" width="10" height="3" fill="#ffffff" opacity="0.89" transform="rotate(22 1237 656)"/>
<rect x="841" y="353" width="8" height="3" fill="#ffb8b0" opacity="0.84" transform="rotate(65 841 353)"/>
<rect x="858" y="43" width="7" height="4" fill="#fff0f0" opacity="0.97" transform="rotate(152 858 43)"/>
<rect x="1129" y="642" width="10" height="4" fill="#ffd8d0" opacity="0.96" transform="rotate(122 1129 642)"/>
<rect x="1200" y="299" width="8" height="4" fill="#ffd8d0" opacity="0.97" transform="rotate(117 1200 299)"/>
<rect x="749" y="150" width="9" height="3" fill="#ffb8b0" opacity="0.93" transform="rotate(9 749 150)"/>
<rect x="1031" y="22" width="6" height="3" fill="#ffc8b8" opacity="0.83" transform="rotate(176 1031 22)"/>
<rect x="836" y="169" width="9" height="3" fill="#d0fff0" opacity="0.97" transform="rotate(97 836 169)"/>
<rect x="995" y="506" width="9" height="3" fill="#ffb8b0" opacity="0.84" transform="rotate(108 995 506)"/>
<rect x="885" y="134" width="9" height="3" fill="#b0f0e0" opacity="0.88" transform="rotate(92 885 134)"/>
<rect x="989" y="484" width="9" height="3" fill="#fff0c0" opacity="0.86" transform="rotate(101 989 484)"/>
<rect x="595" y="669" width="7" height="3" fill="#181028" opacity="0.84" transform="rotate(101 595 669)"/>
<rect x="1258" y="615" width="7" height="3" fill="#ffc8b8" opacity="0.77" transform="rotate(160 1258 615)"/>
<rect x="789" y="260" width="7" height="3" fill="#ffb8b0" opacity="0.84" transform="rotate(7 789 260)"/>
<rect x="1070" y="316" width="10" height="3" fill="#e8e8ff" opacity="0.91" transform="rotate(42 1070 316)"/>
<rect x="1019" y="265" width="6" height="4" fill="#ffffff" opacity="0.91" transform="rotate(41 1019 265)"/>
<rect x="1079" y="674" width="8" height="4" fill="#ffd8d0" opacity="0.95" transform="rotate(66 1079 674)"/>
<rect x="738" y="645" width="6" height="3" fill="#fff0f0" opacity="0.86" transform="rotate(26 738 645)"/>
<rect x="902" y="296" width="10" height="3" fill="#ffb8b0" opacity="0.88" transform="rotate(38 902 296)"/>
<rect x="1042" y="56" width="6" height="3" fill="#d0fff0" opacity="0.83" transform="rotate(23 1042 56)"/>
<rect x="1062" y="515" width="7" height="3" fill="#ffc8b8" opacity="0.88" transform="rotate(28 1062 515)"/>
<rect x="1163" y="40" width="8" height="4" fill="#ffb8b0" opacity="0.88" transform="rotate(102 1163 40)"/>
<rect x="1004" y="206" width="7" height="3" fill="#ffffff" opacity="0.99" transform="rotate(72 1004 206)"/>
<rect x="560" y="579" width="9" height="4" fill="#ffffff" opacity="0.84" transform="rotate(35 560 579)"/>
<rect x="613" y="79" width="7" height="3" fill="#ffffff" opacity="0.80" transform="rotate(114 613 79)"/>
<rect x="871" y="590" width="7" height="4" fill="#181028" opacity="0.84" transform="rotate(69 871 590)"/>
<rect x="845" y="362" width="7" height="3" fill="#e8e8ff" opacity="0.79" transform="rotate(126 845 362)"/>
<rect x="956" y="317" width="6" height="3" fill="#b0f0e0" opacity="0.80" transform="rotate(32 956 317)"/>
<rect x="700" y="480" width="8" height="3" fill="#d0fff0" opacity="0.76" transform="rotate(84 700 480)"/>
<rect x="1000" y="37" width="7" height="4" fill="#ffc8b8" opacity="0.83" transform="rotate(141 1000 37)"/>
<rect x="740" y="220" width="7" height="3" fill="#ffb8b0" opacity="0.81" transform="rotate(113 740 220)"/>
<rect x="896" y="658" width="9" height="3" fill="#fff0c0" opacity="0.88" transform="rotate(73 896 658)"/>
<rect x="818" y="20" width="7" height="4" fill="#181028" opacity="0.95" transform="rotate(1 818 20)"/>
<rect x="1178" y="39" width="8" height="4" fill="#ffd8d0" opacity="0.94" transform="rotate(160 1178 39)"/>
<rect x="833" y="28" width="9" height="3" fill="#181028" opacity="0.96" transform="rotate(12 833 28)"/>
<rect x="648" y="215" width="10" height="4" fill="#fff0f0" opacity="0.90" transform="rotate(19 648 215)"/>
<rect x="1282" y="234" width="7" height="3" fill="#b0f0e0" opacity="0.92" transform="rotate(8 1282 234)"/>
<rect x="809" y="273" width="10" height="3" fill="#ffd8d0" opacity="0.89" transform="rotate(89 809 273)"/>
<rect x="1138" y="342" width="9" height="3" fill="#e8e8ff" opacity="0.90" transform="rotate(178 1138 342)"/>
<rect x="1311" y="686" width="10" height="4" fill="#e8e8ff" opacity="1.00" transform="rotate(139 1311 686)"/>
<rect x="770" y="694" width="7" height="4" fill="#e8e8ff" opacity="0.92" transform="rotate(155 770 694)"/>
<rect x="747" y="34" width="8" height="3" fill="#181028" opacity="0.75" transform="rotate(55 747 34)"/>
<rect x="1293" y="475" width="7" height="3" fill="#ffffff" opacity="0.87" transform="rotate(178 1293 475)"/>
<rect x="769" y="498" width="6" height="3" fill="#181028" opacity="0.97" transform="rotate(85 769 498)"/>
<rect x="943" y="70" width="9" height="4" fill="#181028" opacity="1.00" transform="rotate(152 943 70)"/>
<rect x="970" y="612" width="9" height="4" fill="#d0fff0" opacity="0.82" transform="rotate(37 970 612)"/>
<rect x="1215" y="187" width="9" height="3" fill="#fff0f0" opacity="0.88" transform="rotate(170 1215 187)"/>
<rect x="965" y="98" width="8" height="3" fill="#ffffff" opacity="0.78" transform="rotate(38 965 98)"/>
<rect x="709" y="168" width="7" height="3" fill="#fff0f0" opacity="0.88" transform="rotate(96 709 168)"/>
<rect x="1437" y="656" width="8" height="3" fill="#ffd8d0" opacity="0.86" transform="rotate(132 1437 656)"/>
<rect x="899" y="236" width="7" height="3" fill="#b0f0e0" opacity="0.86" transform="rotate(124 899 236)"/>
<rect x="1128" y="553" width="7" height="3" fill="#ffb8b0" opacity="0.96" transform="rotate(95 1128 553)"/>
<rect x="900" y="681" width="9" height="4" fill="#ffb8b0" opacity="0.88" transform="rotate(3 900 681)"/>
<rect x="953" y="254" width="10" height="3" fill="#ffffff" opacity="0.80" transform="rotate(110 953 254)"/>
<rect x="1293" y="504" width="6" height="3" fill="#ffffff" opacity="0.75" transform="rotate(39 1293 504)"/>
<rect x="949" y="641" width="9" height="3" fill="#ffffff" opacity="0.83" transform="rotate(52 949 641)"/>
<rect x="1040" y="289" width="9" height="3" fill="#d0fff0" opacity="0.83" transform="rotate(112 1040 289)"/>
<rect x="721" y="697" width="8" height="3" fill="#fff0f0" opacity="0.96" transform="rotate(130 721 697)"/>
<rect x="955" y="518" width="10" height="3" fill="#ffc8b8" opacity="0.83" transform="rotate(8 955 518)"/>
<rect x="999" y="174" width="7" height="4" fill="#ffd8d0" opacity="0.84" transform="rotate(177 999 174)"/>
<rect x="929" y="271" width="10" height="4" fill="#d0fff0" opacity="0.79" transform="rotate(35 929 271)"/>
<rect x="1375" y="350" width="8" height="3" fill="#ffffff" opacity="0.87" transform="rotate(141 1375 350)"/>
<rect x="1126" y="497" width="10" height="3" fill="#ffffff" opacity="0.84" transform="rotate(93 1126 497)"/>
<rect x="824" y="128" width="7" height="3" fill="#e8e8ff" opacity="0.77" transform="rotate(91 824 128)"/>
<rect x="779" y="503" width="7" height="3" fill="#e8e8ff" opacity="0.93" transform="rotate(49 779 503)"/>
<rect x="1225" y="601" width="7" height="3" fill="#ffffff" opacity="0.79" transform="rotate(150 1225 601)"/>
<rect x="1313" y="506" width="10" height="3" fill="#ffffff" opacity="0.90" transform="rotate(127 1313 506)"/>
<rect x="1171" y="532" width="10" height="3" fill="#fff0f0" opacity="0.98" transform="rotate(109 1171 532)"/>
<rect x="670" y="281" width="9" height="3" fill="#fff0f0" opacity="0.85" transform="rotate(119 670 281)"/>
<rect x="1184" y="414" width="9" height="4" fill="#fff0c0" opacity="0.91" transform="rotate(70 1184 414)"/>
<rect x="1063" y="69" width="7" height="3" fill="#b0f0e0" opacity="0.97" transform="rotate(147 1063 69)"/>
<rect x="1186" y="587" width="7" height="3" fill="#ffffff" opacity="0.85" transform="rotate(38 1186 587)"/>
<rect x="622" y="10" width="10" height="3" fill="#d0fff0" opacity="0.78" transform="rotate(88 622 10)"/>
<rect x="995" y="680" width="8" height="3" fill="#ffffff" opacity="0.89" transform="rotate(27 995 680)"/>
<rect x="1281" y="361" width="9" height="3" fill="#ffd8d0" opacity="0.86" transform="rotate(29 1281 361)"/>
<rect x="1058" y="343" width="7" height="4" fill="#ffb8b0" opacity="0.76" transform="rotate(2 1058 343)"/>
<rect x="767" y="229" width="9" height="3" fill="#ffd8d0" opacity="1.00" transform="rotate(126 767 229)"/>
<rect x="994" y="145" width="9" height="3" fill="#e8e8ff" opacity="0.78" transform="rotate(161 994 145)"/>
<rect x="1224" y="56" width="10" height="3" fill="#ffc8b8" opacity="0.87" transform="rotate(36 1224 56)"/>
<rect x="1069" y="229" width="8" height="3" fill="#e8e8ff" opacity="0.76" transform="rotate(144 1069 229)"/>
<rect x="1167" y="195" width="9" height="3" fill="#b0f0e0" opacity="0.75" transform="rotate(48 1167 195)"/>
<rect x="865" y="634" width="8" height="4" fill="#ffd8d0" opacity="0.78" transform="rotate(135 865 634)"/>
<rect x="552" y="361" width="9" height="4" fill="#ffb8b0" opacity="0.95" transform="rotate(80 552 361)"/>
<rect x="894" y="382" width="7" height="3" fill="#ffd8d0" opacity="0.98" transform="rotate(145 894 382)"/>
<rect x="1126" y="154" width="8" height="3" fill="#e8e8ff" opacity="0.78" transform="rotate(145 1126 154)"/>
<rect x="705" y="550" width="8" height="3" fill="#d0fff0" opacity="0.98" transform="rotate(153 705 550)"/>
<rect x="815" y="607" width="7" height="3" fill="#ffc8b8" opacity="0.91" transform="rotate(120 815 607)"/>
<rect x="1086" y="359" width="10" height="3" fill="#fff0c0" opacity="0.93" transform="rotate(139 1086 359)"/>
<rect x="1048" y="582" width="10" height="3" fill="#ffffff" opacity="0.81" transform="rotate(148 1048 582)"/>
<rect x="1408" y="247" width="7" height="3" fill="#ffb8b0" opacity="0.98" transform="rotate(163 1408 247)"/>
<rect x="1025" y="592" width="10" height="3" fill="#fff0c0" opacity="0.83" transform="rotate(140 1025 592)"/>
<rect x="988" y="16" width="9" height="4" fill="#ffffff" opacity="0.77" transform="rotate(72 988 16)"/>
<rect x="922" y="377" width="6" height="4" fill="#fff0c0" opacity="0.88" transform="rotate(13 922 377)"/>
<rect x="913" y="614" width="8" height="3" fill="#d0fff0" opacity="0.84" transform="rotate(40 913 614)"/>
<rect x="773" y="283" width="8" height="3" fill="#ffb8b0" opacity="0.98" transform="rotate(24 773 283)"/>
<rect x="826" y="191" width="7" height="3" fill="#ffd8d0" opacity="0.78" transform="rotate(11 826 191)"/>
<rect x="1198" y="43" width="7" height="3" fill="#ffb8b0" opacity="0.99" transform="rotate(23 1198 43)"/>
<rect x="980" y="98" width="9" height="3" fill="#ffb8b0" opacity="0.89" transform="rotate(21 980 98)"/>
<rect x="1155" y="256" width="7" height="3" fill="#fff0c0" opacity="0.94" transform="rotate(30 1155 256)"/>
<rect x="976" y="436" width="6" height="3" fill="#e8e8ff" opacity="0.85" transform="rotate(36 976 436)"/>
<rect x="918" y="510" width="9" height="3" fill="#e8e8ff" opacity="0.87" transform="rotate(67 918 510)"/>
<rect x="1286" y="432" width="9" height="4" fill="#ffffff" opacity="0.85" transform="rotate(32 1286 432)"/>
<rect x="1117" y="475" width="9" height="3" fill="#fff0c0" opacity="0.89" transform="rotate(93 1117 475)"/>
<rect x="997" y="488" width="8" height="3" fill="#fff0c0" opacity="0.85" transform="rotate(177 997 488)"/>
<rect x="1141" y="279" width="10" height="3" fill="#e8e8ff" opacity="0.88" transform="rotate(16 1141 279)"/>
<rect x="975" y="227" width="8" height="3" fill="#e8e8ff" opacity="0.97" transform="rotate(70 975 227)"/>
<rect x="744" y="19" width="9" height="4" fill="#fff0f0" opacity="0.82" transform="rotate(170 744 19)"/>
<rect x="1052" y="167" width="9" height="3" fill="#ffffff" opacity="0.85" transform="rotate(61 1052 167)"/>
<rect x="989" y="617" width="10" height="3" fill="#ffb8b0" opacity="0.77" transform="rotate(123 989 617)"/>
<rect x="1347" y="417" width="10" height="3" fill="#fff0c0" opacity="0.91" transform="rotate(132 1347 417)"/>
<rect x="764" y="440" width="8" height="3" fill="#181028" opacity="0.80" transform="rotate(144 764 440)"/>
<rect x="1009" y="245" width="7" height="3" fill="#181028" opacity="0.93" transform="rotate(3 1009 245)"/>
<rect x="1072" y="197" width="6" height="3" fill="#e8e8ff" opacity="0.86" transform="rotate(14 1072 197)"/>
<rect x="976" y="192" width="7" height="3" fill="#e8e8ff" opacity="0.82" transform="rotate(145 976 192)"/>
<rect x="892" y="112" width="7" height="3" fill="#ffb8b0" opacity="0.80" transform="rotate(131 892 112)"/>
<rect x="930" y="194" width="10" height="3" fill="#fff0c0" opacity="0.91" transform="rotate(143 930 194)"/>
<rect x="1372" y="199" width="6" height="4" fill="#ffffff" opacity="0.77" transform="rotate(117 1372 199)"/>
<rect x="929" y="293" width="9" height="4" fill="#fff0c0" opacity="0.97" transform="rotate(63 929 293)"/>
<rect x="1112" y="259" width="7" height="3" fill="#ffd8d0" opacity="0.88" transform="rotate(80 1112 259)"/>
<rect x="1232" y="132" width="8" height="3" fill="#ffffff" opacity="0.96" transform="rotate(102 1232 132)"/>
<rect x="1062" y="555" width="7" height="4" fill="#ffc8b8" opacity="0.81" transform="rotate(171 1062 555)"/>
<rect x="1126" y="383" width="8" height="3" fill="#181028" opacity="1.00" transform="rotate(47 1126 383)"/>
<rect x="1108" y="106" width="6" height="3" fill="#ffffff" opacity="0.98" transform="rotate(95 1108 106)"/>
<rect x="1350" y="577" width="8" height="3" fill="#ffffff" opacity="0.78" transform="rotate(49 1350 577)"/>
<rect x="1028" y="505" width="6" height="3" fill="#ffffff" opacity="0.80" transform="rotate(62 1028 505)"/>
<rect x="1213" y="234" width="9" height="3" fill="#e8e8ff" opacity="0.91" transform="rotate(88 1213 234)"/>
<rect x="997" y="126" width="10" height="3" fill="#ffffff" opacity="0.81" transform="rotate(104 997 126)"/>
<rect x="1100" y="515" width="8" height="3" fill="#181028" opacity="0.80" transform="rotate(106 1100 515)"/>
<rect x="1208" y="163" width="9" height="4" fill="#fff0f0" opacity="0.88" transform="rotate(10 1208 163)"/>
<rect x="917" y="667" width="8" height="3" fill="#e8e8ff" opacity="0.99" transform="rotate(161 917 667)"/>
<rect x="1380" y="117" width="7" height="3" fill="#ffd8d0" opacity="0.80" transform="rotate(143 1380 117)"/>
<rect x="555" y="224" width="7" height="4" fill="#ffffff" opacity="0.96" transform="rotate(5 555 224)"/>
<rect x="878" y="217" width="7" height="4" fill="#ffffff" opacity="0.91" transform="rotate(96 878 217)"/>
<rect x="813" y="517" width="8" height="3" fill="#b0f0e0" opacity="0.79" transform="rotate(143 813 517)"/>
<rect x="1502" y="295" width="9" height="4" fill="#fff0f0" opacity="0.96" transform="rotate(28 1502 295)"/>
<rect x="923" y="164" width="10" height="4" fill="#ffd8d0" opacity="0.99" transform="rotate(165 923 164)"/>
<rect x="1104" y="590" width="8" height="3" fill="#b0f0e0" opacity="0.85" transform="rotate(179 1104 590)"/>
<rect x="675" y="505" width="10" height="3" fill="#ffffff" opacity="0.86" transform="rotate(62 675 505)"/>
<rect x="1290" y="192" width="8" height="4" fill="#181028" opacity="0.83" transform="rotate(179 1290 192)"/>
<rect x="1320" y="319" width="8" height="4" fill="#ffffff" opacity="0.88" transform="rotate(85 1320 319)"/>
<rect x="787" y="217" width="8" height="3" fill="#ffc8b8" opacity="0.76" transform="rotate(13 787 217)"/>
<rect x="781" y="492" width="8" height="3" fill="#ffc8b8" opacity="0.81" transform="rotate(58 781 492)"/>
<rect x="1235" y="490" width="9" height="3" fill="#ffb8b0" opacity="0.98" transform="rotate(144 1235 490)"/>
<rect x="955" y="625" width="9" height="3" fill="#ffc8b8" opacity="0.78" transform="rotate(28 955 625)"/>
<rect x="1273" y="531" width="9" height="3" fill="#fff0f0" opacity="0.87" transform="rotate(171 1273 531)"/>
<rect x="879" y="555" width="10" height="4" fill="#ffb8b0" opacity="0.94" transform="rotate(141 879 555)"/>
<rect x="665" y="376" width="9" height="4" fill="#ffd8d0" opacity="0.91" transform="rotate(177 665 376)"/>
<rect x="653" y="684" width="10" height="4" fill="#181028" opacity="0.93" transform="rotate(20 653 684)"/>
<rect x="980" y="560" width="8" height="4" fill="#e8e8ff" opacity="0.83" transform="rotate(33 980 560)"/>
<rect x="866" y="443" width="8" height="3" fill="#181028" opacity="0.84" transform="rotate(115 866 443)"/>
<rect x="429" y="371" width="8" height="4" fill="#fff0f0" opacity="0.94" transform="rotate(174 429 371)"/>
<rect x="1163" y="656" width="8" height="4" fill="#fff0c0" opacity="0.89" transform="rotate(48 1163 656)"/>
<rect x="830" y="502" width="8" height="3" fill="#ffffff" opacity="0.87" transform="rotate(46 830 502)"/>
<rect x="1190" y="682" width="9" height="3" fill="#181028" opacity="0.89" transform="rotate(97 1190 682)"/>
<rect x="1376" y="253" width="6" height="3" fill="#ffb8b0" opacity="0.88" transform="rotate(153 1376 253)"/>
<rect x="1162" y="608" width="7" height="4" fill="#e8e8ff" opacity="0.95" transform="rotate(11 1162 608)"/>
<rect x="1033" y="634" width="10" height="3" fill="#b0f0e0" opacity="0.89" transform="rotate(84 1033 634)"/>
<rect x="871" y="39" width="8" height="3" fill="#ffb8b0" opacity="0.93" transform="rotate(84 871 39)"/>
<rect x="878" y="32" width="7" height="4" fill="#b0f0e0" opacity="0.86" transform="rotate(37 878 32)"/>
<rect x="891" y="641" width="9" height="3" fill="#fff0c0" opacity="0.82" transform="rotate(48 891 641)"/>
<rect x="982" y="589" width="9" height="3" fill="#ffd8d0" opacity="0.77" transform="rotate(140 982 589)"/>
<rect x="1100" y="287" width="10" height="4" fill="#ffc8b8" opacity="0.85" transform="rotate(84 1100 287)"/>
<rect x="912" y="584" width="8" height="3" fill="#ffb8b0" opacity="0.96" transform="rotate(135 912 584)"/>
<rect x="1038" y="612" width="7" height="3" fill="#ffffff" opacity="0.78" transform="rotate(86 1038 612)"/>
<rect x="743" y="565" width="9" height="3" fill="#fff0c0" opacity="0.83" transform="rotate(34 743 565)"/>
<rect x="1054" y="450" width="7" height="3" fill="#b0f0e0" opacity="0.91" transform="rotate(175 1054 450)"/>
<rect x="792" y="575" width="9" height="3" fill="#ffb8b0" opacity="0.90" transform="rotate(137 792 575)"/>
<rect x="1168" y="419" width="9" height="3" fill="#ffffff" opacity="0.76" transform="rotate(77 1168 419)"/>
<rect x="712" y="156" width="9" height="4" fill="#ffc8b8" opacity="0.88" transform="rotate(130 712 156)"/>
<rect x="899" y="451" width="6" height="4" fill="#ffffff" opacity="0.99" transform="rotate(127 899 451)"/>
<rect x="994" y="352" width="6" height="3" fill="#ffffff" opacity="0.99" transform="rotate(178 994 352)"/>
<rect x="694" y="497" width="7" height="3" fill="#ffc8b8" opacity="0.98" transform="rotate(47 694 497)"/>
<rect x="1237" y="666" width="7" height="4" fill="#fff0c0" opacity="0.86" transform="rotate(127 1237 666)"/>
<rect x="695" y="448" width="7" height="3" fill="#ffb8b0" opacity="0.78" transform="rotate(10 695 448)"/>
<rect x="1206" y="620" width="9" height="3" fill="#fff0f0" opacity="1.00" transform="rotate(102 1206 620)"/>
<rect x="693" y="598" width="6" height="3" fill="#ffffff" opacity="0.93" transform="rotate(89 693 598)"/>
<rect x="1249" y="535" width="10" height="3" fill="#fff0f0" opacity="0.81" transform="rotate(163 1249 535)"/>
<rect x="695" y="292" width="6" height="4" fill="#ffd8d0" opacity="0.89" transform="rotate(76 695 292)"/>
<rect x="878" y="406" width="7" height="4" fill="#ffffff" opacity="0.90" transform="rotate(179 878 406)"/>
<rect x="774" y="73" width="6" height="4" fill="#ffffff" opacity="0.97" transform="rotate(76 774 73)"/>
<rect x="968" y="438" width="7" height="3" fill="#e8e8ff" opacity="0.81" transform="rotate(178 968 438)"/>
<rect x="834" y="465" width="7" height="3" fill="#fff0c0" opacity="0.97" transform="rotate(51 834 465)"/>
<rect x="791" y="562" width="6" height="3" fill="#fff0f0" opacity="0.95" transform="rotate(13 791 562)"/>
<rect x="850" y="260" width="7" height="4" fill="#ffffff" opacity="0.77" transform="rotate(132 850 260)"/>
<rect x="994" y="402" width="8" height="4" fill="#fff0c0" opacity="0.89" transform="rotate(152 994 402)"/>
<rect x="817" y="94" width="9" height="3" fill="#b0f0e0" opacity="0.80" transform="rotate(87 817 94)"/>
<rect x="698" y="290" width="10" height="4" fill="#fff0c0" opacity="0.85" transform="rotate(47 698 290)"/>
<rect x="677" y="226" width="9" height="3" fill="#ffffff" opacity="0.84" transform="rotate(30 677 226)"/>
<rect x="1170" y="623" width="10" height="4" fill="#ffc8b8" opacity="0.94" transform="rotate(2 1170 623)"/>
<rect x="821" y="554" width="7" height="3" fill="#ffc8b8" opacity="0.92" transform="rotate(145 821 554)"/>
<rect x="921" y="104" width="7" height="3" fill="#181028" opacity="0.99" transform="rotate(5 921 104)"/>
<rect x="410" y="473" width="8" height="3" fill="#fff0f0" opacity="0.88" transform="rotate(115 410 473)"/>
<rect x="1043" y="200" width="9" height="3" fill="#ffb8b0" opacity="0.81" transform="rotate(97 1043 200)"/>
<rect x="1324" y="521" width="6" height="4" fill="#ffffff" opacity="0.84" transform="rotate(74 1324 521)"/>
<rect x="1120" y="542" width="7" height="4" fill="#d0fff0" opacity="0.86" transform="rotate(71 1120 542)"/>
<rect x="734" y="435" width="6" height="3" fill="#ffffff" opacity="0.88" transform="rotate(155 734 435)"/>
<rect x="859" y="645" width="7" height="3" fill="#ffffff" opacity="0.99" transform="rotate(106 859 645)"/>
<rect x="807" y="166" width="6" height="3" fill="#181028" opacity="0.94" transform="rotate(68 807 166)"/>
<rect x="715" y="202" width="10" height="3" fill="#e8e8ff" opacity="0.79" transform="rotate(64 715 202)"/>
<rect x="1101" y="648" width="9" height="4" fill="#ffb8b0" opacity="0.97" transform="rotate(163 1101 648)"/>
<rect x="918" y="368" width="8" height="4" fill="#ffb8b0" opacity="0.75" transform="rotate(69 918 368)"/>
<rect x="1055" y="377" width="7" height="4" fill="#ffb8b0" opacity="0.97" transform="rotate(64 1055 377)"/>
<rect x="1120" y="22" width="8" height="3" fill="#fff0f0" opacity="0.82" transform="rotate(46 1120 22)"/>
<rect x="782" y="487" width="9" height="4" fill="#fff0f0" opacity="0.88" transform="rotate(79 782 487)"/>
<rect x="849" y="115" width="7" height="3" fill="#ffffff" opacity="0.84" transform="rotate(2 849 115)"/>
<rect x="758" y="556" width="9" height="3" fill="#e8e8ff" opacity="0.93" transform="rotate(173 758 556)"/>
<rect x="996" y="654" width="7" height="3" fill="#181028" opacity="0.99" transform="rotate(94 996 654)"/>
<rect x="1302" y="443" width="7" height="3" fill="#d0fff0" opacity="0.78" transform="rotate(100 1302 443)"/>
<rect x="1215" y="295" width="9" height="3" fill="#b0f0e0" opacity="0.94" transform="rotate(133 1215 295)"/>
<rect x="1114" y="570" width="7" height="3" fill="#b0f0e0" opacity="0.94" transform="rotate(170 1114 570)"/>
<rect x="963" y="469" width="10" height="3" fill="#e8e8ff" opacity="0.85" transform="rotate(179 963 469)"/>
<rect x="1025" y="215" width="7" height="3" fill="#ffffff" opacity="0.91" transform="rotate(22 1025 215)"/>
<rect x="916" y="262" width="9" height="4" fill="#181028" opacity="1.00" transform="rotate(24 916 262)"/>
<rect x="1153" y="348" width="9" height="3" fill="#d0fff0" opacity="0.97" transform="rotate(50 1153 348)"/>
<rect x="1190" y="589" width="10" height="3" fill="#d0fff0" opacity="0.94" transform="rotate(151 1190 589)"/>
<rect x="997" y="402" width="7" height="4" fill="#d0fff0" opacity="0.76" transform="rotate(151 997 402)"/>
<rect x="768" y="488" width="8" height="3" fill="#ffffff" opacity="0.76" transform="rotate(135 768 488)"/>
<rect x="973" y="224" width="9" height="3" fill="#d0fff0" opacity="1.00" transform="rotate(26 973 224)"/>
<rect x="1015" y="692" width="6" height="3" fill="#ffb8b0" opacity="0.80" transform="rotate(59 1015 692)"/>
<rect x="1073" y="305" width="8" height="3" fill="#ffffff" opacity="0.82" transform="rotate(10 1073 305)"/>
<rect x="814" y="113" width="7" height="4" fill="#fff0c0" opacity="0.85" transform="rotate(177 814 113)"/>
<rect x="1212" y="650" width="10" height="3" fill="#ffb8b0" opacity="0.96" transform="rotate(104 1212 650)"/>
<rect x="980" y="635" width="9" height="3" fill="#ffffff" opacity="0.99" transform="rotate(127 980 635)"/>
<rect x="767" y="305" width="8" height="4" fill="#b0f0e0" opacity="0.94" transform="rotate(56 767 305)"/>
<rect x="842" y="250" width="8" height="3" fill="#b0f0e0" opacity="0.79" transform="rotate(102 842 250)"/>
<rect x="1186" y="173" width="7" height="3" fill="#ffffff" opacity="0.97" transform="rotate(37 1186 173)"/>
<rect x="731" y="158" width="9" height="4" fill="#ffb8b0" opacity="0.99" transform="rotate(8 731 158)"/>
<rect x="954" y="131" width="7" height="3" fill="#ffb8b0" opacity="0.79" transform="rotate(60 954 131)"/>
<rect x="900" y="257" width="8" height="3" fill="#b0f0e0" opacity="0.89" transform="rotate(26 900 257)"/>
<rect x="1054" y="280" width="9" height="3" fill="#b0f0e0" opacity="0.77" transform="rotate(136 1054 280)"/>
<rect x="1119" y="30" width="9" height="4" fill="#d0fff0" opacity="0.99" transform="rotate(50 1119 30)"/>
<rect x="867" y="667" width="10" height="4" fill="#fff0f0" opacity="0.86" transform="rotate(21 867 667)"/>
<rect x="1127" y="171" width="10" height="3" fill="#b0f0e0" opacity="0.77" transform="rotate(57 1127 171)"/>
<rect x="1369" y="86" width="10" height="3" fill="#181028" opacity="0.92" transform="rotate(48 1369 86)"/>
<rect x="918" y="690" width="8" height="4" fill="#fff0f0" opacity="0.93" transform="rotate(85 918 690)"/>
<rect x="590" y="655" width="7" height="4" fill="#b0f0e0" opacity="0.98" transform="rotate(140 590 655)"/>
<rect x="928" y="344" width="7" height="3" fill="#ffffff" opacity="0.87" transform="rotate(162 928 344)"/>
<rect x="794" y="422" width="7" height="3" fill="#ffffff" opacity="0.78" transform="rotate(104 794 422)"/>
<rect x="1073" y="683" width="8" height="3" fill="#fff0c0" opacity="0.91" transform="rotate(179 1073 683)"/>
<rect x="1071" y="198" width="8" height="3" fill="#181028" opacity="0.96" transform="rotate(100 1071 198)"/>
<rect x="834" y="689" width="8" height="3" fill="#ffc8b8" opacity="0.99" transform="rotate(6 834 689)"/>
<rect x="760" y="592" width="7" height="3" fill="#b0f0e0" opacity="0.90" transform="rotate(35 760 592)"/>
<rect x="1342" y="401" width="9" height="3" fill="#b0f0e0" opacity="0.95" transform="rotate(54 1342 401)"/>
<rect x="1038" y="262" width="9" height="4" fill="#ffc8b8" opacity="0.82" transform="rotate(155 1038 262)"/>
<rect x="996" y="132" width="8" height="3" fill="#d0fff0" opacity="0.76" transform="rotate(25 996 132)"/>
<rect x="1061" y="167" width="9" height="3" fill="#ffd8d0" opacity="0.87" transform="rotate(76 1061 167)"/>
<rect x="1052" y="113" width="8" height="3" fill="#d0fff0" opacity="0.75" transform="rotate(139 1052 113)"/>
<rect x="778" y="487" width="8" height="4" fill="#ffffff" opacity="0.86" transform="rotate(158 778 487)"/>
<rect x="807" y="319" width="8" height="4" fill="#ffffff" opacity="0.90" transform="rotate(79 807 319)"/>
<rect x="1197" y="216" width="8" height="3" fill="#fff0f0" opacity="0.84" transform="rotate(165 1197 216)"/>
<rect x="565" y="635" width="6" height="4" fill="#ffffff" opacity="0.83" transform="rotate(121 565 635)"/>
<rect x="852" y="67" width="10" height="3" fill="#ffffff" opacity="0.99" transform="rotate(163 852 67)"/>
<rect x="851" y="297" width="8" height="3" fill="#e8e8ff" opacity="0.90" transform="rotate(49 851 297)"/>
<rect x="891" y="569" width="10" height="4" fill="#ffffff" opacity="0.94" transform="rotate(109 891 569)"/>
<rect x="1230" y="594" width="7" height="3" fill="#ffd8d0" opacity="0.86" transform="rotate(158 1230 594)"/>
<rect x="930" y="70" width="9" height="3" fill="#b0f0e0" opacity="0.80" transform="rotate(21 930 70)"/>
<rect x="837" y="158" width="7" height="3" fill="#ffc8b8" opacity="0.77" transform="rotate(167 837 158)"/>
<rect x="949" y="477" width="7" height="3" fill="#fff0f0" opacity="0.95" transform="rotate(147 949 477)"/>
<rect x="898" y="557" width="9" height="3" fill="#ffffff" opacity="0.99" transform="rotate(168 898 557)"/>
<rect x="666" y="403" width="6" height="3" fill="#fff0f0" opacity="0.75" transform="rotate(19 666 403)"/>
<rect x="649" y="454" width="6" height="3" fill="#e8e8ff" opacity="0.95" transform="rotate(22 649 454)"/>
<rect x="706" y="129" width="8" height="4" fill="#e8e8ff" opacity="0.90" transform="rotate(112 706 129)"/>
<rect x="939" y="219" width="8" height="4" fill="#fff0f0" opacity="0.82" transform="rotate(138 939 219)"/>
<rect x="1271" y="14" width="9" height="3" fill="#e8e8ff" opacity="0.96" transform="rotate(134 1271 14)"/>
<rect x="1455" y="382" width="7" height="3" fill="#ffd8d0" opacity="0.91" transform="rotate(19 1455 382)"/>
<rect x="671" y="299" width="8" height="3" fill="#ffc8b8" opacity="0.79" transform="rotate(32 671 299)"/>
<rect x="955" y="580" width="10" height="3" fill="#fff0f0" opacity="0.99" transform="rotate(23 955 580)"/>
<rect x="960" y="549" width="8" height="4" fill="#181028" opacity="0.83" transform="rotate(101 960 549)"/>
<rect x="672" y="408" width="8" height="4" fill="#ffffff" opacity="0.89" transform="rotate(177 672 408)"/>
<rect x="1172" y="332" width="9" height="4" fill="#ffd8d0" opacity="0.94" transform="rotate(167 1172 332)"/>
<rect x="1160" y="422" width="9" height="3" fill="#ffb8b0" opacity="0.97" transform="rotate(90 1160 422)"/>
<rect x="934" y="121" width="6" height="3" fill="#b0f0e0" opacity="0.79" transform="rotate(156 934 121)"/>
<rect x="750" y="304" width="7" height="4" fill="#ffc8b8" opacity="0.93" transform="rotate(69 750 304)"/>
<rect x="853" y="564" width="9" height="3" fill="#ffffff" opacity="0.97" transform="rotate(5 853 564)"/>
<rect x="1216" y="315" width="8" height="3" fill="#ffc8b8" opacity="0.87" transform="rotate(138 1216 315)"/>
<rect x="951" y="471" width="8" height="3" fill="#ffd8d0" opacity="0.77" transform="rotate(163 951 471)"/>
<rect x="806" y="580" width="9" height="3" fill="#ffb8b0" opacity="0.92" transform="rotate(19 806 580)"/>
<rect x="1237" y="456" width="10" height="3" fill="#ffc8b8" opacity="0.98" transform="rotate(51 1237 456)"/>
<rect x="950" y="31" width="9" height="3" fill="#ffffff" opacity="0.92" transform="rotate(103 950 31)"/>
<rect x="928" y="564" width="9" height="3" fill="#d0fff0" opacity="0.79" transform="rotate(67 928 564)"/>
<rect x="1099" y="451" width="6" height="4" fill="#ffffff" opacity="0.94" transform="rotate(104 1099 451)"/>
<rect x="550" y="372" width="8" height="3" fill="#fff0f0" opacity="0.76" transform="rotate(42 550 372)"/>
<rect x="1211" y="294" width="7" height="4" fill="#ffffff" opacity="0.81" transform="rotate(44 1211 294)"/>
<rect x="1111" y="208" width="8" height="4" fill="#ffd8d0" opacity="0.75" transform="rotate(128 1111 208)"/>
<rect x="867" y="432" width="8" height="3" fill="#fff0f0" opacity="0.99" transform="rotate(106 867 432)"/>
<rect x="1110" y="699" width="9" height="3" fill="#e8e8ff" opacity="0.98" transform="rotate(24 1110 699)"/>
<rect x="782" y="414" width="10" height="4" fill="#e8e8ff" opacity="0.98" transform="rotate(120 782 414)"/>
<rect x="807" y="7" width="6" height="3" fill="#ffb8b0" opacity="0.81" transform="rotate(95 807 7)"/>
<rect x="975" y="164" width="9" height="3" fill="#ffd8d0" opacity="0.87" transform="rotate(80 975 164)"/>
<rect x="731" y="182" width="10" height="3" fill="#e8e8ff" opacity="0.88" transform="rotate(144 731 182)"/>
<rect x="1041" y="82" width="9" height="3" fill="#ffd8d0" opacity="0.90" transform="rotate(64 1041 82)"/>
<rect x="914" y="449" width="6" height="4" fill="#fff0f0" opacity="0.91" transform="rotate(70 914 449)"/>
<rect x="1388" y="514" width="10" height="4" fill="#b0f0e0" opacity="0.87" transform="rotate(166 1388 514)"/>
<rect x="1155" y="515" width="7" height="3" fill="#ffffff" opacity="0.94" transform="rotate(48 1155 515)"/>
<rect x="687" y="578" width="9" height="3" fill="#ffc8b8" opacity="0.89" transform="rotate(142 687 578)"/>
<rect x="1040" y="53" width="7" height="3" fill="#e8e8ff" opacity="0.84" transform="rotate(27 1040 53)"/>
<rect x="1182" y="235" width="10" height="3" fill="#b0f0e0" opacity="0.86" transform="rotate(39 1182 235)"/>
<rect x="976" y="456" width="10" height="3" fill="#fff0c0" opacity="0.92" transform="rotate(22 976 456)"/>
<rect x="1353" y="111" width="9" height="3" fill="#ffffff" opacity="0.87" transform="rotate(109 1353 111)"/>
<rect x="1140" y="291" width="7" height="4" fill="#ffffff" opacity="0.77" transform="rotate(89 1140 291)"/>
<rect x="990" y="667" width="9" height="4" fill="#e8e8ff" opacity="0.77" transform="rotate(66 990 667)"/>
<rect x="1173" y="411" width="9" height="3" fill="#e8e8ff" opacity="0.75" transform="rotate(176 1173 411)"/>
<rect x="1248" y="58" width="9" height="3" fill="#ffffff" opacity="0.76" transform="rotate(63 1248 58)"/>
<rect x="748" y="330" width="7" height="4" fill="#fff0c0" opacity="0.99" transform="rotate(123 748 330)"/>
<rect x="1211" y="447" width="7" height="3" fill="#ffffff" opacity="0.95" transform="rotate(48 1211 447)"/>
<rect x="853" y="90" width="9" height="3" fill="#d0fff0" opacity="0.94" transform="rotate(139 853 90)"/>
<rect x="808" y="476" width="8" height="3" fill="#ffd8d0" opacity="0.78" transform="rotate(114 808 476)"/>
<rect x="790" y="394" width="6" height="4" fill="#e8e8ff" opacity="0.96" transform="rotate(6 790 394)"/>
<rect x="848" y="582" width="6" height="4" fill="#ffd8d0" opacity="0.78" transform="rotate(74 848 582)"/>
<rect x="1244" y="616" width="7" height="3" fill="#ffc8b8" opacity="0.78" transform="rotate(47 1244 616)"/>
<rect x="881" y="435" width="8" height="3" fill="#b0f0e0" opacity="0.92" transform="rotate(102 881 435)"/>
<rect x="1018" y="590" width="7" height="4" fill="#b0f0e0" opacity="0.90" transform="rotate(70 1018 590)"/>
<rect x="869" y="102" width="7" height="4" fill="#181028" opacity="0.82" transform="rotate(44 869 102)"/>
<rect x="1113" y="210" width="9" height="4" fill="#ffb8b0" opacity="0.86" transform="rotate(113 1113 210)"/>
<rect x="955" y="468" width="8" height="4" fill="#fff0c0" opacity="0.85" transform="rotate(90 955 468)"/>
<rect x="1001" y="204" width="7" height="3" fill="#ffd8d0" opacity="0.93" transform="rotate(56 1001 204)"/>
<rect x="989" y="106" width="7" height="4" fill="#b0f0e0" opacity="0.90" transform="rotate(118 989 106)"/>
<rect x="1393" y="223" width="8" height="4" fill="#ffffff" opacity="0.78" transform="rotate(50 1393 223)"/>
<rect x="1102" y="75" width="7" height="3" fill="#ffc8b8" opacity="0.81" transform="rotate(50 1102 75)"/>
<rect x="1050" y="484" width="9" height="4" fill="#d0fff0" opacity="0.91" transform="rotate(173 1050 484)"/>
<rect x="948" y="51" width="9" height="4" fill="#e8e8ff" opacity="0.76" transform="rotate(36 948 51)"/>
<rect x="996" y="123" width="10" height="3" fill="#181028" opacity="0.86" transform="rotate(117 996 123)"/>
<rect x="884" y="326" width="9" height="3" fill="#e8e8ff" opacity="0.95" transform="rotate(137 884 326)"/>
<rect x="1043" y="466" width="7" height="3" fill="#ffb8b0" opacity="0.85" transform="rotate(160 1043 466)"/>
<rect x="846" y="685" width="7" height="3" fill="#181028" opacity="0.99" transform="rotate(45 846 685)"/>
<rect x="1116" y="402" width="6" height="3" fill="#181028" opacity="1.00" transform="rotate(115 1116 402)"/>
<rect x="987" y="296" width="8" height="3" fill="#181028" opacity="0.78" transform="rotate(21 987 296)"/>
<rect x="915" y="230" width="9" height="3" fill="#fff0c0" opacity="0.88" transform="rotate(127 915 230)"/>
<rect x="1050" y="156" width="8" height="3" fill="#e8e8ff" opacity="0.99" transform="rotate(22 1050 156)"/>
<rect x="1062" y="256" width="7" height="3" fill="#181028" opacity="0.79" transform="rotate(88 1062 256)"/>
<rect x="951" y="696" width="9" height="3" fill="#ffffff" opacity="0.84" transform="rotate(102 951 696)"/>
<rect x="927" y="467" width="8" height="3" fill="#d0fff0" opacity="0.97" transform="rotate(44 927 467)"/>
<rect x="935" y="626" width="8" height="3" fill="#ffffff" opacity="0.78" transform="rotate(154 935 626)"/>
<rect x="1413" y="586" width="7" height="3" fill="#fff0c0" opacity="0.80" transform="rotate(35 1413 586)"/>
<rect x="1452" y="671" width="8" height="3" fill="#ffffff" opacity="0.80" transform="rotate(90 1452 671)"/>
<rect x="1040" y="250" width="9" height="3" fill="#181028" opacity="0.78" transform="rotate(59 1040 250)"/>
<rect x="1029" y="236" width="7" height="4" fill="#fff0c0" opacity="0.89" transform="rotate(38 1029 236)"/>
<rect x="1196" y="203" width="10" height="4" fill="#ffffff" opacity="0.84" transform="rotate(129 1196 203)"/>
<rect x="1082" y="596" width="10" height="4" fill="#181028" opacity="0.77" transform="rotate(40 1082 596)"/>
<rect x="813" y="143" width="8" height="4" fill="#ffc8b8" opacity="0.84" transform="rotate(179 813 143)"/>
<rect x="1123" y="665" width="6" height="3" fill="#ffb8b0" opacity="0.80" transform="rotate(102 1123 665)"/>
<rect x="849" y="140" width="8" height="3" fill="#181028" opacity="0.93" transform="rotate(114 849 140)"/>
<rect x="1018" y="39" width="8" height="3" fill="#fff0c0" opacity="0.83" transform="rotate(95 1018 39)"/>
<rect x="992" y="293" width="10" height="4" fill="#ffffff" opacity="0.87" transform="rotate(155 992 293)"/>
<rect x="1023" y="130" width="7" height="3" fill="#b0f0e0" opacity="0.92" transform="rotate(49 1023 130)"/>
<rect x="791" y="690" width="7" height="3" fill="#ffffff" opacity="0.88" transform="rotate(109 791 690)"/>
<rect x="1345" y="474" width="9" height="3" fill="#ffd8d0" opacity="0.90" transform="rotate(11 1345 474)"/>
<rect x="1025" y="335" width="9" height="3" fill="#ffc8b8" opacity="0.86" transform="rotate(19 1025 335)"/>
<rect x="656" y="342" width="6" height="3" fill="#fff0c0" opacity="0.94" transform="rotate(89 656 342)"/>
<rect x="1048" y="238" width="6" height="4" fill="#b0f0e0" opacity="0.75" transform="rotate(143 1048 238)"/>
<rect x="1112" y="581" width="8" height="4" fill="#181028" opacity="0.81" transform="rotate(24 1112 581)"/>
<rect x="1068" y="126" width="7" height="4" fill="#ffb8b0" opacity="0.96" transform="rotate(106 1068 126)"/>
<rect x="804" y="202" width="8" height="4" fill="#e8e8ff" opacity="0.79" transform="rotate(157 804 202)"/>
<rect x="950" y="184" width="8" height="4" fill="#ffffff" opacity="0.82" transform="rotate(57 950 184)"/>
<rect x="1400" y="513" width="8" height="3" fill="#ffffff" opacity="0.78" transform="rotate(30 1400 513)"/>
<rect x="532" y="544" width="8" height="4" fill="#ffffff" opacity="0.98" transform="rotate(124 532 544)"/>
<rect x="1109" y="499" width="8" height="3" fill="#fff0f0" opacity="0.93" transform="rotate(17 1109 499)"/>
<rect x="840" y="31" width="7" height="4" fill="#ffc8b8" opacity="0.97" transform="rotate(109 840 31)"/>
<rect x="1006" y="207" width="9" height="3" fill="#fff0c0" opacity="0.88" transform="rotate(153 1006 207)"/>
<rect x="1071" y="83" width="9" height="4" fill="#ffb8b0" opacity="0.90" transform="rotate(113 1071 83)"/>
<rect x="1299" y="670" width="8" height="4" fill="#fff0c0" opacity="0.82" transform="rotate(2 1299 670)"/>
<rect x="1162" y="384" width="7" height="4" fill="#ffffff" opacity="0.78" transform="rotate(138 1162 384)"/>
<rect x="807" y="690" width="6" height="3" fill="#ffffff" opacity="0.90" transform="rotate(167 807 690)"/>
<rect x="1114" y="425" width="9" height="4" fill="#ffc8b8" opacity="0.96" transform="rotate(143 1114 425)"/>
<rect x="792" y="167" width="9" height="3" fill="#ffffff" opacity="0.92" transform="rotate(6 792 167)"/>
<rect x="1138" y="157" width="10" height="3" fill="#ffd8d0" opacity="0.82" transform="rotate(104 1138 157)"/>
<rect x="828" y="679" width="8" height="3" fill="#d0fff0" opacity="0.98" transform="rotate(142 828 679)"/>
<rect x="574" y="617" width="8" height="3" fill="#b0f0e0" opacity="0.76" transform="rotate(74 574 617)"/>
<rect x="1026" y="222" width="8" height="3" fill="#d0fff0" opacity="0.93" transform="rotate(89 1026 222)"/>
<rect x="1027" y="615" width="8" height="4" fill="#d0fff0" opacity="0.97" transform="rotate(20 1027 615)"/>
<rect x="1218" y="27" width="7" height="3" fill="#e8e8ff" opacity="0.93" transform="rotate(54 1218 27)"/>
<rect x="904" y="264" width="10" height="3" fill="#b0f0e0" opacity="0.95" transform="rotate(127 904 264)"/>
<rect x="830" y="115" width="10" height="4" fill="#fff0c0" opacity="0.88" transform="rotate(154 830 115)"/>
<rect x="1036" y="108" width="9" height="3" fill="#181028" opacity="0.84" transform="rotate(9 1036 108)"/>
<rect x="825" y="576" width="6" height="3" fill="#d0fff0" opacity="0.75" transform="rotate(30 825 576)"/>
<rect x="1402" y="230" width="7" height="4" fill="#fff0c0" opacity="0.78" transform="rotate(49 1402 230)"/>
<rect x="1007" y="183" width="9" height="3" fill="#181028" opacity="0.98" transform="rotate(113 1007 183)"/>
<rect x="763" y="646" width="7" height="4" fill="#ffffff" opacity="0.84" transform="rotate(161 763 646)"/>
<rect x="1237" y="12" width="8" height="3" fill="#b0f0e0" opacity="0.97" transform="rotate(106 1237 12)"/>
<rect x="552" y="687" width="10" height="3" fill="#e8e8ff" opacity="0.88" transform="rotate(18 552 687)"/>
<rect x="1201" y="467" width="9" height="3" fill="#fff0c0" opacity="1.00" transform="rotate(123 1201 467)"/>
<rect x="832" y="625" width="7" height="3" fill="#ffc8b8" opacity="0.85" transform="rotate(126 832 625)"/>
<g>
<path d="M596 585 Q623 570 652 585 L664 700 L584 700 Z" fill="#161428"/>
<ellipse cx="624" cy="553" rx="13" ry="17" fill="#4a4050" filter="url(#b2)"/>
<path d="M608 545 Q610 522 626 522 Q642 524 640 545 Z" fill="#48424a" filter="url(#b2)"/>
<path d="M600 655 L728 606 L732 614 L606 668 Z" fill="#4a3a38"/><ellipse cx="622" cy="655" rx="22" ry="14" fill="#3a2828" transform="rotate(-20 622 655)"/>
<path d="M1134 580 Q1163 568 1192 582 L1204 700 L1124 700 Z" fill="#2a2848"/>
<ellipse cx="1163" cy="553" rx="12" ry="16" fill="#7a6e80" filter="url(#b2)"/>
<path d="M1150 545 Q1152 530 1164 530 Q1178 531 1176 545 Z" fill="#8a8480" filter="url(#b2)"/>
<path d="M1158 655 L1272 580 L1277 588 L1166 668 Z" fill="#5a4a40"/>
<ellipse cx="982" cy="572" rx="26" ry="30" fill="#c8b8b0" opacity="0.85" filter="url(#b4)"/>
<path d="M962 605 L1004 605 L1014 700 L952 700 Z" fill="#603058" opacity="0.5" filter="url(#b4)"/>
<path d="M996 585 L1034 492 L1042 496 L1008 592 Z" fill="#c0a8a8" opacity="0.85"/>
</g>
<ellipse cx="976" cy="650" rx="560" ry="80" fill="#4250c8" opacity="0.35" filter="url(#b40)"/>
<g transform="rotate(-8 470 725)" fill="#0b0a1c" filter="url(#b2)"><path d="M464 765 Q465 665 468 605 L472 605 Q475 665 476 765 Z"/><path d="M464 607 L461 593 L467 599 L469 587 L473 598 L478 592 L476 607 Z"/></g>
<g transform="rotate(10 560 735)" fill="#0b0a1c" filter="url(#b2)"><path d="M554 775 Q555 685 558 635 L562 635 Q565 685 566 775 Z"/><path d="M554 637 L551 623 L557 629 L559 617 L563 628 L568 622 L566 637 Z"/></g>
<g transform="rotate(6 700 715)" fill="#0b0a1c" filter="url(#b2)"><path d="M694 755 Q695 640 698 565 L702 565 Q705 640 706 755 Z"/><path d="M694 567 L691 553 L697 559 L699 547 L703 558 L708 552 L706 567 Z"/></g>
<g transform="rotate(-10 760 735)" fill="#0b0a1c" filter="url(#b2)"><path d="M754 775 Q755 675 758 615 L762 615 Q765 675 766 775 Z"/><path d="M754 617 L751 603 L757 609 L759 597 L763 608 L768 602 L766 617 Z"/></g>
<g transform="rotate(8 875 725)" fill="#0b0a1c" filter="url(#b2)"><path d="M869 765 Q870 650 872 575 L878 575 Q880 650 881 765 Z"/><path d="M869 577 L866 563 L872 569 L874 557 L878 568 L883 562 L881 577 Z"/></g>
<g transform="rotate(-14 932 730)" fill="#0b0a1c" filter="url(#b2)"><path d="M926 770 Q927 675 930 620 L934 620 Q937 675 938 770 Z"/><path d="M926 622 L923 608 L929 614 L931 602 L935 613 L940 607 L938 622 Z"/></g>
<g transform="rotate(-16 1068 720)" fill="#0b0a1c" filter="url(#b2)"><path d="M1062 760 Q1063 640 1066 560 L1070 560 Q1073 640 1074 760 Z"/><path d="M1062 562 L1059 548 L1065 554 L1067 542 L1071 553 L1076 547 L1074 562 Z"/></g>
<g transform="rotate(12 1110 735)" fill="#0b0a1c" filter="url(#b2)"><path d="M1104 775 Q1105 670 1108 605 L1112 605 Q1115 670 1116 775 Z"/><path d="M1104 607 L1101 593 L1107 599 L1109 587 L1113 598 L1118 592 L1116 607 Z"/></g>
<g transform="rotate(-4 1190 720)" fill="#0b0a1c" filter="url(#b2)"><path d="M1184 760 Q1185 665 1188 610 L1192 610 Q1195 665 1196 760 Z"/><path d="M1184 612 L1181 598 L1187 604 L1189 592 L1193 603 L1198 597 L1196 612 Z"/></g>
<g transform="rotate(8 1262 725)" fill="#0b0a1c" filter="url(#b2)"><path d="M1256 765 Q1257 678 1260 630 L1264 630 Q1267 678 1268 765 Z"/><path d="M1256 632 L1253 618 L1259 624 L1261 612 L1265 623 L1270 617 L1268 632 Z"/></g>
<g transform="rotate(-10 1350 720)" fill="#0b0a1c" filter="url(#b2)"><path d="M1344 760 Q1345 670 1348 620 L1352 620 Q1355 670 1356 760 Z"/><path d="M1344 622 L1341 608 L1347 614 L1349 602 L1353 613 L1358 607 L1356 622 Z"/></g>
<rect x="0" y="640" width="1996" height="491" fill="url(#cbg)"/>
<ellipse cx="-13" cy="702" rx="19" ry="21" fill="#3040a0" opacity="0.0" filter="url(#b2)"/>
<ellipse cx="-13" cy="704" rx="17" ry="20" fill="#0c0b20"/>
<path d="M-49 1131 L-44 728 Q-13 716 18 728 L23 1131 Z" fill="#0c0b20"/>
<ellipse cx="8" cy="692" rx="17" ry="19" fill="#3040a0" opacity="0.12" filter="url(#b2)"/>
<ellipse cx="8" cy="694" rx="15" ry="17" fill="#0c0b20"/>
<path d="M-23 1131 L-19 714 Q8 704 35 714 L40 1131 Z" fill="#0c0b20"/>
<ellipse cx="29" cy="703" rx="20" ry="23" fill="#3040a0" opacity="0.0" filter="url(#b2)"/>
<ellipse cx="29" cy="705" rx="19" ry="22" fill="#0c0b20"/>
<path d="M-10 1131 L-5 731 Q29 718 63 731 L69 1131 Z" fill="#0c0b20"/>
<ellipse cx="62" cy="687" rx="14" ry="16" fill="#3040a0" opacity="0.0" filter="url(#b2)"/>
<ellipse cx="62" cy="689" rx="12" ry="14" fill="#0c0b20"/>
<path d="M36 1131 L40 707 Q62 698 84 707 L88 1131 Z" fill="#0c0b20"/>
<ellipse cx="80" cy="706" rx="21" ry="24" fill="#3040a0" opacity="0.0" filter="url(#b2)"/>
<ellipse cx="80" cy="708" rx="20" ry="23" fill="#0c0b20"/>
<path d="M39 1131 L45 735 Q80 722 116 735 L122 1131 Z" fill="#0c0b20"/>
<ellipse cx="108" cy="669" rx="17" ry="19" fill="#3040a0" opacity="0.0" filter="url(#b2)"/>
<ellipse cx="108" cy="671" rx="16" ry="18" fill="#0c0b20"/>
<path d="M76 1131 L80 692 Q108 682 136 692 L141 1131 Z" fill="#0c0b20"/>
<ellipse cx="127" cy="674" rx="21" ry="24" fill="#3040a0" opacity="0.0" filter="url(#b2)"/>
<ellipse cx="127" cy="676" rx="20" ry="23" fill="#0c0b20"/>
<path d="M86 1131 L92 703 Q127 690 162 703 L168 1131 Z" fill="#0c0b20"/>
<ellipse cx="156" cy="667" rx="21" ry="24" fill="#3040a0" opacity="0.12" filter="url(#b2)"/>
<ellipse cx="156" cy="669" rx="20" ry="23" fill="#0c0b20"/>
<path d="M115 1131 L121 696 Q156 682 192 696 L198 1131 Z" fill="#0c0b20"/>
<ellipse cx="188" cy="710" rx="21" ry="24" fill="#3040a0" opacity="0.0" filter="url(#b2)"/>
<ellipse cx="188" cy="712" rx="20" ry="22" fill="#0c0b20"/>
<path d="M147 1131 L153 739 Q188 725 223 739 L229 1131 Z" fill="#0c0b20"/>
<ellipse cx="223" cy="684" rx="21" ry="24" fill="#3040a0" opacity="0.48" filter="url(#b2)"/>
<ellipse cx="223" cy="686" rx="19" ry="22" fill="#0c0b20"/>
<path d="M182 1131 L188 712 Q223 699 258 712 L264 1131 Z" fill="#0c0b20"/>
<ellipse cx="259" cy="681" rx="16" ry="19" fill="#3040a0" opacity="0.0" filter="url(#b2)"/>
<ellipse cx="259" cy="683" rx="15" ry="17" fill="#0c0b20"/>
<path d="M228 1131 L233 703 Q259 693 286 703 L291 1131 Z" fill="#0c0b20"/>
<ellipse cx="286" cy="707" rx="20" ry="22" fill="#3040a0" opacity="0.0" filter="url(#b2)"/>
<ellipse cx="286" cy="709" rx="18" ry="21" fill="#0c0b20"/>
<path d="M248 1131 L254 734 Q286 721 319 734 L324 1131 Z" fill="#0c0b20"/>
<ellipse cx="319" cy="681" rx="15" ry="17" fill="#3040a0" opacity="0.12" filter="url(#b2)"/>
<ellipse cx="319" cy="683" rx="13" ry="16" fill="#0c0b20"/>
<path d="M291 1131 L295 702 Q319 692 344 702 L348 1131 Z" fill="#0c0b20"/>
<ellipse cx="343" cy="684" rx="17" ry="20" fill="#3040a0" opacity="0.12" filter="url(#b2)"/>
<ellipse cx="343" cy="686" rx="16" ry="18" fill="#0c0b20"/>
<path d="M310 1131 L314 708 Q343 697 371 708 L376 1131 Z" fill="#0c0b20"/>
<ellipse cx="366" cy="667" rx="14" ry="16" fill="#3040a0" opacity="0.48" filter="url(#b2)"/>
<ellipse cx="366" cy="669" rx="13" ry="15" fill="#0c0b20"/>
<path d="M339 1131 L343 686 Q366 677 389 686 L393 1131 Z" fill="#0c0b20"/>
<ellipse cx="385" cy="702" rx="19" ry="21" fill="#3040a0" opacity="0.12" filter="url(#b2)"/>
<ellipse cx="385" cy="704" rx="17" ry="20" fill="#0c0b20"/>
<path d="M348 1131 L353 728 Q385 716 416 728 L421 1131 Z" fill="#0c0b20"/>
<ellipse cx="407" cy="666" rx="16" ry="18" fill="#3040a0" opacity="0.0" filter="url(#b2)"/>
<ellipse cx="407" cy="668" rx="15" ry="17" fill="#0c0b20"/>
<path d="M376 1131 L381 688 Q407 678 433 688 L438 1131 Z" fill="#0c0b20"/>
<ellipse cx="428" cy="669" rx="15" ry="17" fill="#3040a0" opacity="0.0" filter="url(#b2)"/>
<ellipse cx="428" cy="671" rx="14" ry="16" fill="#0c0b20"/>
<path d="M399 1131 L403 690 Q428 680 453 690 L457 1131 Z" fill="#0c0b20"/>
<ellipse cx="452" cy="681" rx="21" ry="24" fill="#3040a0" opacity="0.0" filter="url(#b2)"/>
<ellipse cx="452" cy="683" rx="19" ry="22" fill="#0c0b20"/>
<path d="M411 1131 L417 710 Q452 696 487 710 L493 1131 Z" fill="#0c0b20"/>
<ellipse cx="480" cy="676" rx="21" ry="23" fill="#3040a0" opacity="0.0" filter="url(#b2)"/>
<ellipse cx="480" cy="678" rx="19" ry="22" fill="#0c0b20"/>
<path d="M440 1131 L446 704 Q480 691 515 704 L520 1131 Z" fill="#0c0b20"/>
<ellipse cx="515" cy="710" rx="19" ry="22" fill="#3040a0" opacity="0.12" filter="url(#b2)"/>
<ellipse cx="515" cy="712" rx="17" ry="20" fill="#0c0b20"/>
<path d="M478 1131 L484 736 Q515 724 546 736 L552 1131 Z" fill="#0c0b20"/>
<ellipse cx="545" cy="707" rx="16" ry="18" fill="#3040a0" opacity="0.0" filter="url(#b2)"/>
<ellipse cx="545" cy="709" rx="15" ry="17" fill="#0c0b20"/>
<path d="M514 1131 L518 729 Q545 719 571 729 L575 1131 Z" fill="#0c0b20"/>
<ellipse cx="568" cy="679" rx="14" ry="16" fill="#3040a0" opacity="0.0" filter="url(#b2)"/>
<ellipse cx="568" cy="681" rx="12" ry="14" fill="#0c0b20"/>
<path d="M542 1131 L545 698 Q568 690 590 698 L594 1131 Z" fill="#0c0b20"/>
<ellipse cx="584" cy="707" rx="20" ry="23" fill="#3040a0" opacity="0.0" filter="url(#b2)"/>
<ellipse cx="584" cy="709" rx="18" ry="21" fill="#0c0b20"/>
<path d="M545 1131 L551 734 Q584 722 617 734 L623 1131 Z" fill="#0c0b20"/>
<ellipse cx="616" cy="702" rx="19" ry="21" fill="#3040a0" opacity="0.0" filter="url(#b2)"/>
<ellipse cx="616" cy="704" rx="17" ry="20" fill="#0c0b20"/>
<path d="M580 1131 L585 728 Q616 716 647 728 L652 1131 Z" fill="#0c0b20"/>
<ellipse cx="648" cy="674" rx="21" ry="23" fill="#3040a0" opacity="0.0" filter="url(#b2)"/>
<ellipse cx="648" cy="676" rx="19" ry="22" fill="#0c0b20"/>
<path d="M608 1131 L613 702 Q648 689 682 702 L688 1131 Z" fill="#0c0b20"/>
<ellipse cx="684" cy="668" rx="14" ry="16" fill="#3040a0" opacity="0.0" filter="url(#b2)"/>
<ellipse cx="684" cy="670" rx="13" ry="15" fill="#0c0b20"/>
<path d="M657 1131 L661 687 Q684 678 707 687 L711 1131 Z" fill="#0c0b20"/>
<ellipse cx="708" cy="700" rx="17" ry="19" fill="#3040a0" opacity="0.0" filter="url(#b2)"/>
<ellipse cx="708" cy="702" rx="15" ry="17" fill="#0c0b20"/>
<path d="M676 1131 L681 723 Q708 712 735 723 L740 1131 Z" fill="#0c0b20"/>
<ellipse cx="728" cy="705" rx="15" ry="17" fill="#3040a0" opacity="0.0" filter="url(#b2)"/>
<ellipse cx="728" cy="707" rx="13" ry="16" fill="#0c0b20"/>
<path d="M700 1131 L704 725 Q728 716 752 725 L756 1131 Z" fill="#0c0b20"/>
<ellipse cx="746" cy="667" rx="17" ry="19" fill="#3040a0" opacity="0.24" filter="url(#b2)"/>
<ellipse cx="746" cy="669" rx="15" ry="18" fill="#0c0b20"/>
<path d="M713 1131 L718 690 Q746 680 773 690 L778 1131 Z" fill="#0c0b20"/>
<ellipse cx="766" cy="708" rx="16" ry="19" fill="#3040a0" opacity="0.0" filter="url(#b2)"/>
<ellipse cx="766" cy="710" rx="15" ry="17" fill="#0c0b20"/>
<path d="M735 1131 L739 731 Q766 721 792 731 L797 1131 Z" fill="#0c0b20"/>
<ellipse cx="789" cy="668" rx="18" ry="21" fill="#3040a0" opacity="0.0" filter="url(#b2)"/>
<ellipse cx="789" cy="670" rx="17" ry="19" fill="#0c0b20"/>
<path d="M754 1131 L759 693 Q789 681 819 693 L824 1131 Z" fill="#0c0b20"/>
<ellipse cx="809" cy="682" rx="19" ry="22" fill="#3040a0" opacity="0.0" filter="url(#b2)"/>
<ellipse cx="809" cy="684" rx="18" ry="20" fill="#0c0b20"/>
<path d="M772 1131 L778 708 Q809 696 841 708 L846 1131 Z" fill="#0c0b20"/>
<ellipse cx="831" cy="676" rx="18" ry="20" fill="#3040a0" opacity="0.0" filter="url(#b2)"/>
<ellipse cx="831" cy="678" rx="16" ry="19" fill="#0c0b20"/>
<path d="M797 1131 L801 700 Q831 689 860 700 L865 1131 Z" fill="#0c0b20"/>
<ellipse cx="853" cy="696" rx="15" ry="17" fill="#3040a0" opacity="0.0" filter="url(#b2)"/>
<ellipse cx="853" cy="698" rx="13" ry="15" fill="#0c0b20"/>
<path d="M825 1131 L829 716 Q853 707 877 716 L881 1131 Z" fill="#0c0b20"/>
<ellipse cx="871" cy="668" rx="19" ry="22" fill="#3040a0" opacity="0.0" filter="url(#b2)"/>
<ellipse cx="871" cy="670" rx="18" ry="20" fill="#0c0b20"/>
<path d="M834 1131 L840 695 Q871 682 903 695 L908 1131 Z" fill="#0c0b20"/>
<ellipse cx="901" cy="684" rx="16" ry="19" fill="#3040a0" opacity="0.0" filter="url(#b2)"/>
<ellipse cx="901" cy="686" rx="15" ry="17" fill="#0c0b20"/>
<path d="M870 1131 L875 706 Q901 696 928 706 L932 1131 Z" fill="#0c0b20"/>
<ellipse cx="923" cy="708" rx="17" ry="19" fill="#3040a0" opacity="0.24" filter="url(#b2)"/>
<ellipse cx="923" cy="710" rx="16" ry="18" fill="#0c0b20"/>
<path d="M890 1131 L895 731 Q923 721 951 731 L956 1131 Z" fill="#0c0b20"/>
<ellipse cx="947" cy="700" rx="15" ry="17" fill="#3040a0" opacity="0.0" filter="url(#b2)"/>
<ellipse cx="947" cy="702" rx="13" ry="15" fill="#0c0b20"/>
<path d="M919 1131 L923 720 Q947 711 971 720 L975 1131 Z" fill="#0c0b20"/>
<ellipse cx="966" cy="707" rx="14" ry="16" fill="#3040a0" opacity="0.0" filter="url(#b2)"/>
<ellipse cx="966" cy="709" rx="13" ry="14" fill="#0c0b20"/>
<path d="M940 1131 L943 726 Q966 717 989 726 L992 1131 Z" fill="#0c0b20"/>
<ellipse cx="988" cy="683" rx="19" ry="22" fill="#3040a0" opacity="0.0" filter="url(#b2)"/>
<ellipse cx="988" cy="685" rx="17" ry="20" fill="#0c0b20"/>
<path d="M951 1131 L957 709 Q988 697 1019 709 L1024 1131 Z" fill="#0c0b20"/>
<ellipse cx="1013" cy="668" rx="16" ry="18" fill="#3040a0" opacity="0.0" filter="url(#b2)"/>
<ellipse cx="1013" cy="670" rx="14" ry="16" fill="#0c0b20"/>
<path d="M983 1131 L988 690 Q1013 680 1039 690 L1043 1131 Z" fill="#0c0b20"/>
<ellipse cx="1037" cy="696" rx="14" ry="16" fill="#3040a0" opacity="0.0" filter="url(#b2)"/>
<ellipse cx="1037" cy="698" rx="13" ry="15" fill="#0c0b20"/>
<path d="M1010 1131 L1014 715 Q1037 707 1059 715 L1063 1131 Z" fill="#0c0b20"/>
<ellipse cx="1060" cy="703" rx="20" ry="23" fill="#3040a0" opacity="0.48" filter="url(#b2)"/>
<ellipse cx="1060" cy="705" rx="18" ry="21" fill="#0c0b20"/>
<path d="M1022 1131 L1027 731 Q1060 718 1094 731 L1099 1131 Z" fill="#0c0b20"/>
<ellipse cx="1093" cy="704" rx="14" ry="16" fill="#3040a0" opacity="0.0" filter="url(#b2)"/>
<ellipse cx="1093" cy="706" rx="13" ry="15" fill="#0c0b20"/>
<path d="M1066 1131 L1070 724 Q1093 715 1116 724 L1120 1131 Z" fill="#0c0b20"/>
<ellipse cx="1116" cy="677" rx="18" ry="20" fill="#3040a0" opacity="0.24" filter="url(#b2)"/>
<ellipse cx="1116" cy="679" rx="16" ry="18" fill="#0c0b20"/>
<path d="M1082 1131 L1087 701 Q1116 690 1145 701 L1149 1131 Z" fill="#0c0b20"/>
<ellipse cx="1140" cy="669" rx="21" ry="24" fill="#3040a0" opacity="0.24" filter="url(#b2)"/>
<ellipse cx="1140" cy="671" rx="20" ry="23" fill="#0c0b20"/>
<path d="M1099 1131 L1105 698 Q1140 685 1176 698 L1182 1131 Z" fill="#0c0b20"/>
<ellipse cx="1166" cy="695" rx="15" ry="18" fill="#3040a0" opacity="0.0" filter="url(#b2)"/>
<ellipse cx="1166" cy="697" rx="14" ry="16" fill="#0c0b20"/>
<path d="M1136 1131 L1140 716 Q1166 707 1191 716 L1195 1131 Z" fill="#0c0b20"/>
<ellipse cx="1183" cy="679" rx="21" ry="23" fill="#3040a0" opacity="0.24" filter="url(#b2)"/>
<ellipse cx="1183" cy="681" rx="19" ry="22" fill="#0c0b20"/>
<path d="M1143 1131 L1148 708 Q1183 695 1217 708 L1223 1131 Z" fill="#0c0b20"/>
<ellipse cx="1216" cy="672" rx="20" ry="22" fill="#3040a0" opacity="0.0" filter="url(#b2)"/>
<ellipse cx="1216" cy="674" rx="18" ry="21" fill="#0c0b20"/>
<path d="M1178 1131 L1184 699 Q1216 687 1249 699 L1255 1131 Z" fill="#0c0b20"/>
<ellipse cx="1240" cy="669" rx="17" ry="19" fill="#3040a0" opacity="0.12" filter="url(#b2)"/>
<ellipse cx="1240" cy="671" rx="16" ry="18" fill="#0c0b20"/>
<path d="M1207 1131 L1212 692 Q1240 682 1268 692 L1272 1131 Z" fill="#0c0b20"/>
<ellipse cx="1263" cy="688" rx="15" ry="17" fill="#3040a0" opacity="0.48" filter="url(#b2)"/>
<ellipse cx="1263" cy="690" rx="13" ry="15" fill="#0c0b20"/>
<path d="M1235 1131 L1239 709 Q1263 700 1287 709 L1291 1131 Z" fill="#0c0b20"/>
<ellipse cx="1282" cy="703" rx="18" ry="20" fill="#3040a0" opacity="0.12" filter="url(#b2)"/>
<ellipse cx="1282" cy="705" rx="16" ry="19" fill="#0c0b20"/>
<path d="M1248 1131 L1253 727 Q1282 716 1311 727 L1316 1131 Z" fill="#0c0b20"/>
<ellipse cx="1307" cy="694" rx="17" ry="20" fill="#3040a0" opacity="0.12" filter="url(#b2)"/>
<ellipse cx="1307" cy="696" rx="16" ry="18" fill="#0c0b20"/>
<path d="M1274 1131 L1279 717 Q1307 706 1336 717 L1340 1131 Z" fill="#0c0b20"/>
<ellipse cx="1336" cy="667" rx="16" ry="18" fill="#3040a0" opacity="0.24" filter="url(#b2)"/>
<ellipse cx="1336" cy="669" rx="15" ry="17" fill="#0c0b20"/>
<path d="M1305 1131 L1309 690 Q1336 680 1362 690 L1367 1131 Z" fill="#0c0b20"/>
<ellipse cx="1356" cy="690" rx="17" ry="19" fill="#3040a0" opacity="0.0" filter="url(#b2)"/>
<ellipse cx="1356" cy="692" rx="16" ry="18" fill="#0c0b20"/>
<path d="M1323 1131 L1328 714 Q1356 703 1384 714 L1389 1131 Z" fill="#0c0b20"/>
<ellipse cx="1380" cy="705" rx="20" ry="22" fill="#3040a0" opacity="0.24" filter="url(#b2)"/>
<ellipse cx="1380" cy="707" rx="18" ry="21" fill="#0c0b20"/>
<path d="M1342 1131 L1347 732 Q1380 720 1413 732 L1418 1131 Z" fill="#0c0b20"/>
<ellipse cx="1402" cy="709" rx="16" ry="18" fill="#3040a0" opacity="0.48" filter="url(#b2)"/>
<ellipse cx="1402" cy="711" rx="14" ry="16" fill="#0c0b20"/>
<path d="M1372 1131 L1377 730 Q1402 721 1428 730 L1432 1131 Z" fill="#0c0b20"/>
<ellipse cx="1422" cy="695" rx="16" ry="19" fill="#3040a0" opacity="0.0" filter="url(#b2)"/>
<ellipse cx="1422" cy="697" rx="15" ry="17" fill="#0c0b20"/>
<path d="M1390 1131 L1395 718 Q1422 707 1449 718 L1453 1131 Z" fill="#0c0b20"/>
<ellipse cx="1446" cy="686" rx="19" ry="22" fill="#3040a0" opacity="0.0" filter="url(#b2)"/>
<ellipse cx="1446" cy="688" rx="18" ry="20" fill="#0c0b20"/>
<path d="M1409 1131 L1414 713 Q1446 700 1478 713 L1483 1131 Z" fill="#0c0b20"/>
<ellipse cx="1479" cy="686" rx="14" ry="15" fill="#3040a0" opacity="0.0" filter="url(#b2)"/>
<ellipse cx="1479" cy="688" rx="12" ry="14" fill="#0c0b20"/>
<path d="M1453 1131 L1457 705 Q1479 697 1500 705 L1504 1131 Z" fill="#0c0b20"/>
<ellipse cx="1496" cy="672" rx="17" ry="19" fill="#3040a0" opacity="0.0" filter="url(#b2)"/>
<ellipse cx="1496" cy="674" rx="15" ry="18" fill="#0c0b20"/>
<path d="M1464 1131 L1469 695 Q1496 685 1524 695 L1528 1131 Z" fill="#0c0b20"/>
<ellipse cx="1515" cy="668" rx="16" ry="18" fill="#3040a0" opacity="0.0" filter="url(#b2)"/>
<ellipse cx="1515" cy="670" rx="14" ry="17" fill="#0c0b20"/>
<path d="M1484 1131 L1489 690 Q1515 680 1541 690 L1545 1131 Z" fill="#0c0b20"/>
<ellipse cx="1533" cy="702" rx="17" ry="19" fill="#3040a0" opacity="0.0" filter="url(#b2)"/>
<ellipse cx="1533" cy="704" rx="15" ry="17" fill="#0c0b20"/>
<path d="M1501 1131 L1506 724 Q1533 714 1560 724 L1565 1131 Z" fill="#0c0b20"/>
<ellipse cx="1553" cy="708" rx="21" ry="24" fill="#3040a0" opacity="0.0" filter="url(#b2)"/>
<ellipse cx="1553" cy="710" rx="20" ry="23" fill="#0c0b20"/>
<path d="M1511 1131 L1517 737 Q1553 724 1589 737 L1595 1131 Z" fill="#0c0b20"/>
<ellipse cx="1588" cy="708" rx="17" ry="19" fill="#3040a0" opacity="0.24" filter="url(#b2)"/>
<ellipse cx="1588" cy="710" rx="15" ry="18" fill="#0c0b20"/>
<path d="M1556 1131 L1561 731 Q1588 721 1616 731 L1621 1131 Z" fill="#0c0b20"/>
<ellipse cx="1608" cy="698" rx="15" ry="17" fill="#3040a0" opacity="0.0" filter="url(#b2)"/>
<ellipse cx="1608" cy="700" rx="13" ry="15" fill="#0c0b20"/>
<path d="M1580 1131 L1584 718 Q1608 709 1632 718 L1636 1131 Z" fill="#0c0b20"/>
<ellipse cx="1633" cy="678" rx="19" ry="22" fill="#3040a0" opacity="0.12" filter="url(#b2)"/>
<ellipse cx="1633" cy="680" rx="18" ry="21" fill="#0c0b20"/>
<path d="M1596 1131 L1601 705 Q1633 693 1665 705 L1671 1131 Z" fill="#0c0b20"/>
<ellipse cx="1660" cy="701" rx="16" ry="18" fill="#3040a0" opacity="0.12" filter="url(#b2)"/>
<ellipse cx="1660" cy="703" rx="15" ry="17" fill="#0c0b20"/>
<path d="M1629 1131 L1633 723 Q1660 713 1686 723 L1691 1131 Z" fill="#0c0b20"/>
<ellipse cx="1683" cy="703" rx="19" ry="22" fill="#3040a0" opacity="0.0" filter="url(#b2)"/>
<ellipse cx="1683" cy="705" rx="17" ry="20" fill="#0c0b20"/>
<path d="M1647 1131 L1652 729 Q1683 717 1715 729 L1720 1131 Z" fill="#0c0b20"/>
<ellipse cx="1710" cy="678" rx="15" ry="17" fill="#3040a0" opacity="0.0" filter="url(#b2)"/>
<ellipse cx="1710" cy="680" rx="14" ry="16" fill="#0c0b20"/>
<path d="M1681 1131 L1685 699 Q1710 689 1734 699 L1739 1131 Z" fill="#0c0b20"/>
<ellipse cx="1735" cy="685" rx="15" ry="17" fill="#3040a0" opacity="0.24" filter="url(#b2)"/>
<ellipse cx="1735" cy="687" rx="13" ry="15" fill="#0c0b20"/>
<path d="M1708 1131 L1711 705 Q1735 696 1759 705 L1762 1131 Z" fill="#0c0b20"/>
<ellipse cx="1760" cy="670" rx="19" ry="22" fill="#3040a0" opacity="0.12" filter="url(#b2)"/>
<ellipse cx="1760" cy="672" rx="18" ry="21" fill="#0c0b20"/>
<path d="M1722 1131 L1728 697 Q1760 684 1792 697 L1798 1131 Z" fill="#0c0b20"/>
<ellipse cx="1786" cy="705" rx="18" ry="21" fill="#3040a0" opacity="0.0" filter="url(#b2)"/>
<ellipse cx="1786" cy="707" rx="17" ry="19" fill="#0c0b20"/>
<path d="M1750 1131 L1756 731 Q1786 719 1816 731 L1821 1131 Z" fill="#0c0b20"/>
<ellipse cx="1811" cy="700" rx="18" ry="21" fill="#3040a0" opacity="0.48" filter="url(#b2)"/>
<ellipse cx="1811" cy="702" rx="17" ry="19" fill="#0c0b20"/>
<path d="M1776 1131 L1781 725 Q1811 714 1841 725 L1846 1131 Z" fill="#0c0b20"/>
<ellipse cx="1833" cy="671" rx="17" ry="19" fill="#3040a0" opacity="0.48" filter="url(#b2)"/>
<ellipse cx="1833" cy="673" rx="16" ry="18" fill="#0c0b20"/>
<path d="M1800 1131 L1805 695 Q1833 684 1861 695 L1866 1131 Z" fill="#0c0b20"/>
<ellipse cx="1862" cy="666" rx="16" ry="18" fill="#3040a0" opacity="0.12" filter="url(#b2)"/>
<ellipse cx="1862" cy="668" rx="14" ry="17" fill="#0c0b20"/>
<path d="M1831 1131 L1835 688 Q1862 678 1888 688 L1892 1131 Z" fill="#0c0b20"/>
<ellipse cx="1881" cy="698" rx="15" ry="17" fill="#3040a0" opacity="0.0" filter="url(#b2)"/>
<ellipse cx="1881" cy="700" rx="14" ry="16" fill="#0c0b20"/>
<path d="M1853 1131 L1857 719 Q1881 709 1905 719 L1909 1131 Z" fill="#0c0b20"/>
<ellipse cx="1906" cy="694" rx="18" ry="20" fill="#3040a0" opacity="0.0" filter="url(#b2)"/>
<ellipse cx="1906" cy="696" rx="16" ry="19" fill="#0c0b20"/>
<path d="M1872 1131 L1877 718 Q1906 707 1935 718 L1940 1131 Z" fill="#0c0b20"/>
<ellipse cx="1929" cy="705" rx="16" ry="19" fill="#3040a0" opacity="0.0" filter="url(#b2)"/>
<ellipse cx="1929" cy="707" rx="15" ry="17" fill="#0c0b20"/>
<path d="M1898 1131 L1902 727 Q1929 717 1956 727 L1961 1131 Z" fill="#0c0b20"/>
<ellipse cx="1952" cy="671" rx="17" ry="20" fill="#3040a0" opacity="0.24" filter="url(#b2)"/>
<ellipse cx="1952" cy="673" rx="16" ry="18" fill="#0c0b20"/>
<path d="M1918 1131 L1923 694 Q1952 683 1980 694 L1985 1131 Z" fill="#0c0b20"/>
<ellipse cx="1974" cy="709" rx="21" ry="24" fill="#3040a0" opacity="0.0" filter="url(#b2)"/>
<ellipse cx="1974" cy="711" rx="20" ry="23" fill="#0c0b20"/>
<path d="M1932 1131 L1938 738 Q1974 724 2010 738 L2016 1131 Z" fill="#0c0b20"/>
<ellipse cx="2004" cy="708" rx="15" ry="17" fill="#3040a0" opacity="0.48" filter="url(#b2)"/>
<ellipse cx="2004" cy="710" rx="13" ry="15" fill="#0c0b20"/>
<path d="M1976 1131 L1980 728 Q2004 719 2028 728 L2032 1131 Z" fill="#0c0b20"/>
<ellipse cx="-14" cy="745" rx="25" ry="28" fill="#2a3a90" opacity="0.0" filter="url(#b2)"/>
<ellipse cx="-14" cy="747" rx="23" ry="27" fill="#0b0a1c"/>
<path d="M-62 1131 L-56 779 Q-14 763 28 779 L35 1131 Z" fill="#0b0a1c"/>
<ellipse cx="23" cy="718" rx="25" ry="29" fill="#2a3a90" opacity="0.42" filter="url(#b2)"/>
<ellipse cx="23" cy="720" rx="24" ry="28" fill="#0b0a1c"/>
<path d="M-28 1131 L-21 753 Q23 737 66 753 L73 1131 Z" fill="#0b0a1c"/>
<ellipse cx="77" cy="741" rx="20" ry="23" fill="#2a3a90" opacity="0.21" filter="url(#b2)"/>
<ellipse cx="77" cy="743" rx="18" ry="21" fill="#0b0a1c"/>
<path d="M38 1131 L44 768 Q77 756 110 768 L116 1131 Z" fill="#0b0a1c"/>
<ellipse cx="107" cy="734" rx="19" ry="21" fill="#2a3a90" opacity="0.21" filter="url(#b2)"/>
<ellipse cx="107" cy="736" rx="17" ry="20" fill="#0b0a1c"/>
<path d="M72 1131 L77 759 Q107 747 138 759 L143 1131 Z" fill="#0b0a1c"/>
<ellipse cx="145" cy="732" rx="25" ry="29" fill="#2a3a90" opacity="0.42" filter="url(#b2)"/>
<ellipse cx="145" cy="734" rx="24" ry="27" fill="#0b0a1c"/>
<path d="M96 1131 L103 767 Q145 750 187 767 L195 1131 Z" fill="#0b0a1c"/>
<ellipse cx="193" cy="721" rx="21" ry="24" fill="#2a3a90" opacity="0.105" filter="url(#b2)"/>
<ellipse cx="193" cy="723" rx="19" ry="22" fill="#0b0a1c"/>
<path d="M153 1131 L158 750 Q193 736 228 750 L233 1131 Z" fill="#0b0a1c"/>
<ellipse cx="231" cy="744" rx="21" ry="24" fill="#2a3a90" opacity="0.21" filter="url(#b2)"/>
<ellipse cx="231" cy="746" rx="19" ry="22" fill="#0b0a1c"/>
<path d="M191 1131 L197 773 Q231 760 266 773 L272 1131 Z" fill="#0b0a1c"/>
<ellipse cx="266" cy="714" rx="20" ry="23" fill="#2a3a90" opacity="0.105" filter="url(#b2)"/>
<ellipse cx="266" cy="716" rx="19" ry="21" fill="#0b0a1c"/>
<path d="M227 1131 L232 742 Q266 729 299 742 L305 1131 Z" fill="#0b0a1c"/>
<ellipse cx="303" cy="736" rx="24" ry="27" fill="#2a3a90" opacity="0.42" filter="url(#b2)"/>
<ellipse cx="303" cy="738" rx="22" ry="26" fill="#0b0a1c"/>
<path d="M257 1131 L264 768 Q303 753 343 768 L350 1131 Z" fill="#0b0a1c"/>
<ellipse cx="337" cy="753" rx="24" ry="27" fill="#2a3a90" opacity="0.0" filter="url(#b2)"/>
<ellipse cx="337" cy="755" rx="22" ry="25" fill="#0b0a1c"/>
<path d="M291 1131 L297 785 Q337 770 377 785 L384 1131 Z" fill="#0b0a1c"/>
<ellipse cx="379" cy="715" rx="25" ry="29" fill="#2a3a90" opacity="0.42" filter="url(#b2)"/>
<ellipse cx="379" cy="717" rx="24" ry="27" fill="#0b0a1c"/>
<path d="M329 1131 L336 749 Q379 733 421 749 L429 1131 Z" fill="#0b0a1c"/>
<ellipse cx="419" cy="735" rx="22" ry="25" fill="#2a3a90" opacity="0.105" filter="url(#b2)"/>
<ellipse cx="419" cy="737" rx="20" ry="23" fill="#0b0a1c"/>
<path d="M377 1131 L383 765 Q419 751 455 765 L461 1131 Z" fill="#0b0a1c"/>
<ellipse cx="464" cy="750" rx="28" ry="32" fill="#2a3a90" opacity="0.105" filter="url(#b2)"/>
<ellipse cx="464" cy="752" rx="27" ry="31" fill="#0b0a1c"/>
<path d="M408 1131 L416 788 Q464 770 512 788 L520 1131 Z" fill="#0b0a1c"/>
<ellipse cx="504" cy="753" rx="23" ry="26" fill="#2a3a90" opacity="0.0" filter="url(#b2)"/>
<ellipse cx="504" cy="755" rx="22" ry="25" fill="#0b0a1c"/>
<path d="M459 1131 L465 784 Q504 769 543 784 L549 1131 Z" fill="#0b0a1c"/>
<ellipse cx="542" cy="747" rx="23" ry="26" fill="#2a3a90" opacity="0.0" filter="url(#b2)"/>
<ellipse cx="542" cy="749" rx="21" ry="24" fill="#0b0a1c"/>
<path d="M498 1131 L504 778 Q542 764 581 778 L587 1131 Z" fill="#0b0a1c"/>
<ellipse cx="576" cy="719" rx="18" ry="21" fill="#2a3a90" opacity="0.21" filter="url(#b2)"/>
<ellipse cx="576" cy="721" rx="17" ry="20" fill="#0b0a1c"/>
<path d="M541 1131 L546 745 Q576 733 607 745 L612 1131 Z" fill="#0b0a1c"/>
<ellipse cx="609" cy="716" rx="19" ry="22" fill="#2a3a90" opacity="0.42" filter="url(#b2)"/>
<ellipse cx="609" cy="718" rx="18" ry="21" fill="#0b0a1c"/>
<path d="M571 1131 L576 743 Q609 731 641 743 L646 1131 Z" fill="#0b0a1c"/>
<ellipse cx="646" cy="723" rx="25" ry="29" fill="#2a3a90" opacity="0.0" filter="url(#b2)"/>
<ellipse cx="646" cy="725" rx="24" ry="27" fill="#0b0a1c"/>
<path d="M596 1131 L603 758 Q646 741 689 758 L696 1131 Z" fill="#0b0a1c"/>
<ellipse cx="692" cy="744" rx="26" ry="30" fill="#2a3a90" opacity="0.0" filter="url(#b2)"/>
<ellipse cx="692" cy="746" rx="25" ry="28" fill="#0b0a1c"/>
<path d="M640 1131 L647 780 Q692 763 736 780 L743 1131 Z" fill="#0b0a1c"/>
<ellipse cx="732" cy="720" rx="29" ry="33" fill="#2a3a90" opacity="0.0" filter="url(#b2)"/>
<ellipse cx="732" cy="722" rx="27" ry="31" fill="#0b0a1c"/>
<path d="M675 1131 L683 760 Q732 741 781 760 L789 1131 Z" fill="#0b0a1c"/>
<ellipse cx="794" cy="737" rx="26" ry="30" fill="#2a3a90" opacity="0.0" filter="url(#b2)"/>
<ellipse cx="794" cy="739" rx="25" ry="28" fill="#0b0a1c"/>
<path d="M742 1131 L750 774 Q794 757 838 774 L846 1131 Z" fill="#0b0a1c"/>
<ellipse cx="836" cy="747" rx="25" ry="29" fill="#2a3a90" opacity="0.21" filter="url(#b2)"/>
<ellipse cx="836" cy="749" rx="24" ry="27" fill="#0b0a1c"/>
<path d="M786 1131 L793 782 Q836 766 879 782 L886 1131 Z" fill="#0b0a1c"/>
<ellipse cx="887" cy="717" rx="24" ry="28" fill="#2a3a90" opacity="0.42" filter="url(#b2)"/>
<ellipse cx="887" cy="719" rx="23" ry="26" fill="#0b0a1c"/>
<path d="M839 1131 L846 751 Q887 735 928 751 L935 1131 Z" fill="#0b0a1c"/>
<ellipse cx="927" cy="713" rx="19" ry="22" fill="#2a3a90" opacity="0.105" filter="url(#b2)"/>
<ellipse cx="927" cy="715" rx="18" ry="20" fill="#0b0a1c"/>
<path d="M890 1131 L895 739 Q927 727 959 739 L964 1131 Z" fill="#0b0a1c"/>
<ellipse cx="966" cy="719" rx="22" ry="25" fill="#2a3a90" opacity="0.105" filter="url(#b2)"/>
<ellipse cx="966" cy="721" rx="21" ry="24" fill="#0b0a1c"/>
<path d="M923 1131 L929 750 Q966 736 1004 750 L1010 1131 Z" fill="#0b0a1c"/>
<ellipse cx="1000" cy="720" rx="22" ry="25" fill="#2a3a90" opacity="0.105" filter="url(#b2)"/>
<ellipse cx="1000" cy="722" rx="21" ry="24" fill="#0b0a1c"/>
<path d="M957 1131 L963 751 Q1000 737 1037 751 L1043 1131 Z" fill="#0b0a1c"/>
<ellipse cx="1044" cy="723" rx="23" ry="26" fill="#2a3a90" opacity="0.0" filter="url(#b2)"/>
<ellipse cx="1044" cy="725" rx="22" ry="25" fill="#0b0a1c"/>
<path d="M999 1131 L1005 755 Q1044 740 1083 755 L1090 1131 Z" fill="#0b0a1c"/>
<ellipse cx="1090" cy="732" rx="19" ry="22" fill="#2a3a90" opacity="0.105" filter="url(#b2)"/>
<ellipse cx="1090" cy="734" rx="18" ry="20" fill="#0b0a1c"/>
<path d="M1053 1131 L1058 758 Q1090 746 1122 758 L1127 1131 Z" fill="#0b0a1c"/>
<ellipse cx="1120" cy="712" rx="28" ry="32" fill="#2a3a90" opacity="0.0" filter="url(#b2)"/>
<ellipse cx="1120" cy="714" rx="26" ry="30" fill="#0b0a1c"/>
<path d="M1065 1131 L1073 750 Q1120 732 1168 750 L1176 1131 Z" fill="#0b0a1c"/>
<ellipse cx="1161" cy="753" rx="27" ry="31" fill="#2a3a90" opacity="0.105" filter="url(#b2)"/>
<ellipse cx="1161" cy="755" rx="25" ry="29" fill="#0b0a1c"/>
<path d="M1108 1131 L1115 789 Q1161 772 1206 789 L1214 1131 Z" fill="#0b0a1c"/>
<ellipse cx="1210" cy="716" rx="19" ry="21" fill="#2a3a90" opacity="0.42" filter="url(#b2)"/>
<ellipse cx="1210" cy="718" rx="17" ry="20" fill="#0b0a1c"/>
<path d="M1174 1131 L1179 741 Q1210 729 1240 741 L1246 1131 Z" fill="#0b0a1c"/>
<ellipse cx="1241" cy="720" rx="20" ry="23" fill="#2a3a90" opacity="0.0" filter="url(#b2)"/>
<ellipse cx="1241" cy="722" rx="19" ry="22" fill="#0b0a1c"/>
<path d="M1201 1131 L1207 748 Q1241 735 1275 748 L1280 1131 Z" fill="#0b0a1c"/>
<ellipse cx="1277" cy="750" rx="23" ry="26" fill="#2a3a90" opacity="0.0" filter="url(#b2)"/>
<ellipse cx="1277" cy="752" rx="21" ry="24" fill="#0b0a1c"/>
<path d="M1233 1131 L1239 781 Q1277 766 1315 781 L1322 1131 Z" fill="#0b0a1c"/>
<ellipse cx="1312" cy="739" rx="26" ry="30" fill="#2a3a90" opacity="0.105" filter="url(#b2)"/>
<ellipse cx="1312" cy="741" rx="25" ry="28" fill="#0b0a1c"/>
<path d="M1260 1131 L1267 775 Q1312 758 1356 775 L1364 1131 Z" fill="#0b0a1c"/>
<ellipse cx="1352" cy="724" rx="26" ry="29" fill="#2a3a90" opacity="0.105" filter="url(#b2)"/>
<ellipse cx="1352" cy="726" rx="24" ry="28" fill="#0b0a1c"/>
<path d="M1301 1131 L1308 759 Q1352 743 1396 759 L1403 1131 Z" fill="#0b0a1c"/>
<ellipse cx="1387" cy="740" rx="27" ry="31" fill="#2a3a90" opacity="0.21" filter="url(#b2)"/>
<ellipse cx="1387" cy="742" rx="26" ry="30" fill="#0b0a1c"/>
<path d="M1332 1131 L1340 778 Q1387 760 1433 778 L1441 1131 Z" fill="#0b0a1c"/>
<ellipse cx="1428" cy="727" rx="22" ry="25" fill="#2a3a90" opacity="0.42" filter="url(#b2)"/>
<ellipse cx="1428" cy="729" rx="20" ry="24" fill="#0b0a1c"/>
<path d="M1385 1131 L1391 757 Q1428 743 1465 757 L1471 1131 Z" fill="#0b0a1c"/>
<ellipse cx="1470" cy="715" rx="21" ry="23" fill="#2a3a90" opacity="0.105" filter="url(#b2)"/>
<ellipse cx="1470" cy="717" rx="19" ry="22" fill="#0b0a1c"/>
<path d="M1430 1131 L1435 743 Q1470 730 1504 743 L1510 1131 Z" fill="#0b0a1c"/>
<ellipse cx="1497" cy="743" rx="23" ry="26" fill="#2a3a90" opacity="0.0" filter="url(#b2)"/>
<ellipse cx="1497" cy="745" rx="21" ry="25" fill="#0b0a1c"/>
<path d="M1452 1131 L1458 775 Q1497 760 1536 775 L1542 1131 Z" fill="#0b0a1c"/>
<ellipse cx="1545" cy="735" rx="25" ry="28" fill="#2a3a90" opacity="0.105" filter="url(#b2)"/>
<ellipse cx="1545" cy="737" rx="23" ry="27" fill="#0b0a1c"/>
<path d="M1497 1131 L1504 769 Q1545 753 1587 769 L1594 1131 Z" fill="#0b0a1c"/>
<ellipse cx="1585" cy="724" rx="29" ry="33" fill="#2a3a90" opacity="0.42" filter="url(#b2)"/>
<ellipse cx="1585" cy="726" rx="27" ry="31" fill="#0b0a1c"/>
<path d="M1528 1131 L1536 763 Q1585 744 1633 763 L1642 1131 Z" fill="#0b0a1c"/>
<ellipse cx="1634" cy="724" rx="22" ry="25" fill="#2a3a90" opacity="0.0" filter="url(#b2)"/>
<ellipse cx="1634" cy="726" rx="20" ry="23" fill="#0b0a1c"/>
<path d="M1592 1131 L1598 753 Q1634 739 1670 753 L1676 1131 Z" fill="#0b0a1c"/>
<ellipse cx="1664" cy="743" rx="21" ry="24" fill="#2a3a90" opacity="0.0" filter="url(#b2)"/>
<ellipse cx="1664" cy="745" rx="19" ry="22" fill="#0b0a1c"/>
<path d="M1623 1131 L1629 772 Q1664 759 1699 772 L1705 1131 Z" fill="#0b0a1c"/>
<ellipse cx="1708" cy="720" rx="24" ry="28" fill="#2a3a90" opacity="0.0" filter="url(#b2)"/>
<ellipse cx="1708" cy="722" rx="23" ry="26" fill="#0b0a1c"/>
<path d="M1660 1131 L1667 753 Q1708 737 1749 753 L1755 1131 Z" fill="#0b0a1c"/>
<ellipse cx="1756" cy="728" rx="26" ry="29" fill="#2a3a90" opacity="0.21" filter="url(#b2)"/>
<ellipse cx="1756" cy="730" rx="24" ry="28" fill="#0b0a1c"/>
<path d="M1705 1131 L1713 763 Q1756 746 1800 763 L1807 1131 Z" fill="#0b0a1c"/>
<ellipse cx="1805" cy="717" rx="23" ry="26" fill="#2a3a90" opacity="0.0" filter="url(#b2)"/>
<ellipse cx="1805" cy="719" rx="22" ry="25" fill="#0b0a1c"/>
<path d="M1759 1131 L1766 749 Q1805 734 1844 749 L1850 1131 Z" fill="#0b0a1c"/>
<ellipse cx="1848" cy="735" rx="20" ry="22" fill="#2a3a90" opacity="0.21" filter="url(#b2)"/>
<ellipse cx="1848" cy="737" rx="18" ry="21" fill="#0b0a1c"/>
<path d="M1810 1131 L1815 762 Q1848 750 1880 762 L1886 1131 Z" fill="#0b0a1c"/>
<ellipse cx="1881" cy="730" rx="22" ry="25" fill="#2a3a90" opacity="0.0" filter="url(#b2)"/>
<ellipse cx="1881" cy="732" rx="20" ry="23" fill="#0b0a1c"/>
<path d="M1838 1131 L1844 760 Q1881 746 1917 760 L1923 1131 Z" fill="#0b0a1c"/>
<ellipse cx="1922" cy="733" rx="25" ry="28" fill="#2a3a90" opacity="0.21" filter="url(#b2)"/>
<ellipse cx="1922" cy="735" rx="23" ry="27" fill="#0b0a1c"/>
<path d="M1873 1131 L1880 767 Q1922 751 1963 767 L1970 1131 Z" fill="#0b0a1c"/>
<ellipse cx="1960" cy="742" rx="26" ry="30" fill="#2a3a90" opacity="0.42" filter="url(#b2)"/>
<ellipse cx="1960" cy="744" rx="25" ry="29" fill="#0b0a1c"/>
<path d="M1908 1131 L1915 778 Q1960 761 2005 778 L2012 1131 Z" fill="#0b0a1c"/>
<ellipse cx="2007" cy="728" rx="26" ry="30" fill="#2a3a90" opacity="0.0" filter="url(#b2)"/>
<ellipse cx="2007" cy="730" rx="25" ry="28" fill="#0b0a1c"/>
<path d="M1955 1131 L1963 764 Q2007 747 2051 764 L2058 1131 Z" fill="#0b0a1c"/>
<ellipse cx="-1" cy="799" rx="34" ry="39" fill="#24348a" opacity="0.0" filter="url(#b2)"/>
<ellipse cx="-1" cy="801" rx="33" ry="37" fill="#0a0a1a"/>
<path d="M-70 1131 L-60 846 Q-1 823 57 846 L67 1131 Z" fill="#0a0a1a"/>
<ellipse cx="60" cy="813" rx="26" ry="30" fill="#24348a" opacity="0.18" filter="url(#b2)"/>
<ellipse cx="60" cy="815" rx="25" ry="29" fill="#0a0a1a"/>
<path d="M8 1131 L16 850 Q60 833 105 850 L112 1131 Z" fill="#0a0a1a"/>
<ellipse cx="102" cy="800" rx="26" ry="29" fill="#24348a" opacity="0.18" filter="url(#b2)"/>
<ellipse cx="102" cy="802" rx="24" ry="28" fill="#0a0a1a"/>
<path d="M51 1131 L58 836 Q102 819 145 836 L152 1131 Z" fill="#0a0a1a"/>
<ellipse cx="149" cy="784" rx="37" ry="42" fill="#24348a" opacity="0.36" filter="url(#b2)"/>
<ellipse cx="149" cy="786" rx="35" ry="40" fill="#0a0a1a"/>
<path d="M75 1131 L86 835 Q149 810 212 835 L223 1131 Z" fill="#0a0a1a"/>
<ellipse cx="230" cy="783" rx="33" ry="37" fill="#24348a" opacity="0.09" filter="url(#b2)"/>
<ellipse cx="230" cy="785" rx="31" ry="36" fill="#0a0a1a"/>
<path d="M165 1131 L174 828 Q230 806 287 828 L296 1131 Z" fill="#0a0a1a"/>
<ellipse cx="301" cy="792" rx="29" ry="33" fill="#24348a" opacity="0.09" filter="url(#b2)"/>
<ellipse cx="301" cy="794" rx="27" ry="31" fill="#0a0a1a"/>
<path d="M243 1131 L252 832 Q301 813 350 832 L358 1131 Z" fill="#0a0a1a"/>
<ellipse cx="346" cy="822" rx="27" ry="30" fill="#24348a" opacity="0.0" filter="url(#b2)"/>
<ellipse cx="346" cy="824" rx="25" ry="29" fill="#0a0a1a"/>
<path d="M293 1131 L301 859 Q346 842 392 859 L399 1131 Z" fill="#0a0a1a"/>
<ellipse cx="400" cy="796" rx="34" ry="39" fill="#24348a" opacity="0.36" filter="url(#b2)"/>
<ellipse cx="400" cy="798" rx="32" ry="37" fill="#0a0a1a"/>
<path d="M332 1131 L341 843 Q400 820 458 843 L468 1131 Z" fill="#0a0a1a"/>
<ellipse cx="465" cy="792" rx="33" ry="38" fill="#24348a" opacity="0.09" filter="url(#b2)"/>
<ellipse cx="465" cy="794" rx="32" ry="36" fill="#0a0a1a"/>
<path d="M399 1131 L408 838 Q465 816 522 838 L531 1131 Z" fill="#0a0a1a"/>
<ellipse cx="530" cy="778" rx="28" ry="32" fill="#24348a" opacity="0.36" filter="url(#b2)"/>
<ellipse cx="530" cy="780" rx="27" ry="31" fill="#0a0a1a"/>
<path d="M474 1131 L482 816 Q530 798 578 816 L586 1131 Z" fill="#0a0a1a"/>
<ellipse cx="588" cy="797" rx="38" ry="44" fill="#24348a" opacity="0.18" filter="url(#b2)"/>
<ellipse cx="588" cy="799" rx="37" ry="42" fill="#0a0a1a"/>
<path d="M511 1131 L522 850 Q588 824 654 850 L665 1131 Z" fill="#0a0a1a"/>
<ellipse cx="657" cy="815" rx="41" ry="47" fill="#24348a" opacity="0.18" filter="url(#b2)"/>
<ellipse cx="657" cy="817" rx="40" ry="46" fill="#0a0a1a"/>
<path d="M574 1131 L586 872 Q657 844 729 872 L741 1131 Z" fill="#0a0a1a"/>
<ellipse cx="753" cy="776" rx="35" ry="40" fill="#24348a" opacity="0.18" filter="url(#b2)"/>
<ellipse cx="753" cy="778" rx="34" ry="39" fill="#0a0a1a"/>
<path d="M682 1131 L692 824 Q753 801 814 824 L824 1131 Z" fill="#0a0a1a"/>
<ellipse cx="818" cy="781" rx="36" ry="41" fill="#24348a" opacity="0.36" filter="url(#b2)"/>
<ellipse cx="818" cy="783" rx="35" ry="40" fill="#0a0a1a"/>
<path d="M745 1131 L756 830 Q818 806 880 830 L890 1131 Z" fill="#0a0a1a"/>
<ellipse cx="875" cy="792" rx="39" ry="45" fill="#24348a" opacity="0.0" filter="url(#b2)"/>
<ellipse cx="875" cy="794" rx="38" ry="43" fill="#0a0a1a"/>
<path d="M796 1131 L807 846 Q875 820 943 846 L954 1131 Z" fill="#0a0a1a"/>
<ellipse cx="943" cy="800" rx="32" ry="36" fill="#24348a" opacity="0.0" filter="url(#b2)"/>
<ellipse cx="943" cy="802" rx="30" ry="35" fill="#0a0a1a"/>
<path d="M880 1131 L889 844 Q943 823 998 844 L1007 1131 Z" fill="#0a0a1a"/>
<ellipse cx="996" cy="800" rx="29" ry="33" fill="#24348a" opacity="0.0" filter="url(#b2)"/>
<ellipse cx="996" cy="802" rx="27" ry="31" fill="#0a0a1a"/>
<path d="M940 1131 L948 839 Q996 820 1045 839 L1053 1131 Z" fill="#0a0a1a"/>
<ellipse cx="1052" cy="814" rx="37" ry="42" fill="#24348a" opacity="0.0" filter="url(#b2)"/>
<ellipse cx="1052" cy="816" rx="35" ry="40" fill="#0a0a1a"/>
<path d="M978 1131 L989 864 Q1052 840 1115 864 L1126 1131 Z" fill="#0a0a1a"/>
<ellipse cx="1129" cy="776" rx="34" ry="38" fill="#24348a" opacity="0.09" filter="url(#b2)"/>
<ellipse cx="1129" cy="778" rx="32" ry="37" fill="#0a0a1a"/>
<path d="M1061 1131 L1071 822 Q1129 800 1187 822 L1196 1131 Z" fill="#0a0a1a"/>
<ellipse cx="1199" cy="778" rx="39" ry="44" fill="#24348a" opacity="0.18" filter="url(#b2)"/>
<ellipse cx="1199" cy="780" rx="37" ry="43" fill="#0a0a1a"/>
<path d="M1121 1131 L1132 831 Q1199 805 1266 831 L1277 1131 Z" fill="#0a0a1a"/>
<ellipse cx="1289" cy="810" rx="41" ry="47" fill="#24348a" opacity="0.18" filter="url(#b2)"/>
<ellipse cx="1289" cy="812" rx="39" ry="45" fill="#0a0a1a"/>
<path d="M1206 1131 L1218 866 Q1289 839 1360 866 L1371 1131 Z" fill="#0a0a1a"/>
<ellipse cx="1385" cy="783" rx="27" ry="31" fill="#24348a" opacity="0.36" filter="url(#b2)"/>
<ellipse cx="1385" cy="785" rx="26" ry="30" fill="#0a0a1a"/>
<path d="M1330 1131 L1338 821 Q1385 803 1431 821 L1439 1131 Z" fill="#0a0a1a"/>
<ellipse cx="1446" cy="819" rx="33" ry="38" fill="#24348a" opacity="0.0" filter="url(#b2)"/>
<ellipse cx="1446" cy="821" rx="31" ry="36" fill="#0a0a1a"/>
<path d="M1380 1131 L1390 865 Q1446 843 1503 865 L1512 1131 Z" fill="#0a0a1a"/>
<ellipse cx="1511" cy="783" rx="33" ry="38" fill="#24348a" opacity="0.09" filter="url(#b2)"/>
<ellipse cx="1511" cy="785" rx="32" ry="37" fill="#0a0a1a"/>
<path d="M1444 1131 L1454 829 Q1511 807 1569 829 L1578 1131 Z" fill="#0a0a1a"/>
<ellipse cx="1590" cy="822" rx="30" ry="34" fill="#24348a" opacity="0.0" filter="url(#b2)"/>
<ellipse cx="1590" cy="824" rx="28" ry="33" fill="#0a0a1a"/>
<path d="M1531 1131 L1539 863 Q1590 844 1642 863 L1650 1131 Z" fill="#0a0a1a"/>
<ellipse cx="1639" cy="796" rx="39" ry="45" fill="#24348a" opacity="0.36" filter="url(#b2)"/>
<ellipse cx="1639" cy="798" rx="38" ry="43" fill="#0a0a1a"/>
<path d="M1560 1131 L1571 850 Q1639 824 1706 850 L1718 1131 Z" fill="#0a0a1a"/>
<ellipse cx="1707" cy="820" rx="27" ry="30" fill="#24348a" opacity="0.0" filter="url(#b2)"/>
<ellipse cx="1707" cy="822" rx="25" ry="29" fill="#0a0a1a"/>
<path d="M1654 1131 L1662 857 Q1707 840 1752 857 L1760 1131 Z" fill="#0a0a1a"/>
<ellipse cx="1757" cy="811" rx="39" ry="45" fill="#24348a" opacity="0.18" filter="url(#b2)"/>
<ellipse cx="1757" cy="813" rx="37" ry="43" fill="#0a0a1a"/>
<path d="M1679 1131 L1690 864 Q1757 839 1825 864 L1836 1131 Z" fill="#0a0a1a"/>
<ellipse cx="1822" cy="803" rx="32" ry="37" fill="#24348a" opacity="0.0" filter="url(#b2)"/>
<ellipse cx="1822" cy="805" rx="31" ry="35" fill="#0a0a1a"/>
<path d="M1757 1131 L1766 847 Q1822 826 1877 847 L1886 1131 Z" fill="#0a0a1a"/>
<ellipse cx="1878" cy="806" rx="32" ry="36" fill="#24348a" opacity="0.0" filter="url(#b2)"/>
<ellipse cx="1878" cy="808" rx="30" ry="35" fill="#0a0a1a"/>
<path d="M1815 1131 L1824 850 Q1878 829 1932 850 L1941 1131 Z" fill="#0a0a1a"/>
<ellipse cx="1937" cy="801" rx="34" ry="39" fill="#24348a" opacity="0.18" filter="url(#b2)"/>
<ellipse cx="1937" cy="803" rx="33" ry="38" fill="#0a0a1a"/>
<path d="M1869 1131 L1879 848 Q1937 825 1996 848 L2006 1131 Z" fill="#0a0a1a"/>
<ellipse cx="1997" cy="801" rx="26" ry="30" fill="#24348a" opacity="0.09" filter="url(#b2)"/>
<ellipse cx="1997" cy="803" rx="24" ry="28" fill="#0a0a1a"/>
<path d="M1945 1131 L1953 837 Q1997 820 2041 837 L2048 1131 Z" fill="#0a0a1a"/>
<ellipse cx="-28" cy="913" rx="43" ry="49" fill="#20307e" opacity="0.0" filter="url(#b2)"/>
<ellipse cx="-28" cy="915" rx="41" ry="47" fill="#09091a"/>
<path d="M-114 1131 L-102 972 Q-28 943 46 972 L59 1131 Z" fill="#09091a"/>
<ellipse cx="62" cy="879" rx="58" ry="67" fill="#20307e" opacity="0.09" filter="url(#b2)"/>
<ellipse cx="62" cy="881" rx="57" ry="65" fill="#09091a"/>
<path d="M-57 1131 L-40 959 Q62 920 164 959 L181 1131 Z" fill="#09091a"/>
<ellipse cx="179" cy="884" rx="41" ry="47" fill="#20307e" opacity="0.36" filter="url(#b2)"/>
<ellipse cx="179" cy="886" rx="40" ry="46" fill="#09091a"/>
<path d="M95 1131 L107 941 Q179 913 251 941 L263 1131 Z" fill="#09091a"/>
<ellipse cx="261" cy="854" rx="48" ry="55" fill="#20307e" opacity="0.18" filter="url(#b2)"/>
<ellipse cx="261" cy="856" rx="47" ry="54" fill="#09091a"/>
<path d="M163 1131 L177 920 Q261 888 345 920 L359 1131 Z" fill="#09091a"/>
<ellipse cx="341" cy="907" rx="41" ry="47" fill="#20307e" opacity="0.0" filter="url(#b2)"/>
<ellipse cx="341" cy="909" rx="39" ry="45" fill="#09091a"/>
<path d="M259 1131 L271 963 Q341 936 412 963 L424 1131 Z" fill="#09091a"/>
<ellipse cx="424" cy="895" rx="47" ry="54" fill="#20307e" opacity="0.18" filter="url(#b2)"/>
<ellipse cx="424" cy="897" rx="46" ry="52" fill="#09091a"/>
<path d="M328 1131 L341 960 Q424 928 506 960 L519 1131 Z" fill="#09091a"/>
<ellipse cx="513" cy="912" rx="46" ry="52" fill="#20307e" opacity="0.0" filter="url(#b2)"/>
<ellipse cx="513" cy="914" rx="44" ry="51" fill="#09091a"/>
<path d="M420 1131 L434 975 Q513 944 593 975 L606 1131 Z" fill="#09091a"/>
<ellipse cx="592" cy="854" rx="47" ry="53" fill="#20307e" opacity="0.0" filter="url(#b2)"/>
<ellipse cx="592" cy="856" rx="45" ry="52" fill="#09091a"/>
<path d="M497 1131 L511 918 Q592 887 673 918 L686 1131 Z" fill="#09091a"/>
<ellipse cx="670" cy="908" rx="56" ry="64" fill="#20307e" opacity="0.0" filter="url(#b2)"/>
<ellipse cx="670" cy="910" rx="54" ry="62" fill="#09091a"/>
<path d="M556 1131 L573 985 Q670 948 767 985 L784 1131 Z" fill="#09091a"/>
<ellipse cx="789" cy="858" rx="58" ry="66" fill="#20307e" opacity="0.09" filter="url(#b2)"/>
<ellipse cx="789" cy="860" rx="56" ry="65" fill="#09091a"/>
<path d="M671 1131 L688 938 Q789 899 890 938 L907 1131 Z" fill="#09091a"/>
<ellipse cx="922" cy="878" rx="53" ry="61" fill="#20307e" opacity="0.0" filter="url(#b2)"/>
<ellipse cx="922" cy="880" rx="52" ry="59" fill="#09091a"/>
<path d="M813 1131 L829 951 Q922 915 1014 951 L1030 1131 Z" fill="#09091a"/>
<ellipse cx="1029" cy="865" rx="59" ry="68" fill="#20307e" opacity="0.0" filter="url(#b2)"/>
<ellipse cx="1029" cy="867" rx="58" ry="66" fill="#09091a"/>
<path d="M908 1131 L925 947 Q1029 907 1132 947 L1150 1131 Z" fill="#09091a"/>
<ellipse cx="1140" cy="873" rx="43" ry="49" fill="#20307e" opacity="0.09" filter="url(#b2)"/>
<ellipse cx="1140" cy="875" rx="42" ry="48" fill="#09091a"/>
<path d="M1052 1131 L1064 932 Q1140 903 1215 932 L1227 1131 Z" fill="#09091a"/>
<ellipse cx="1230" cy="905" rx="40" ry="45" fill="#20307e" opacity="0.0" filter="url(#b2)"/>
<ellipse cx="1230" cy="907" rx="38" ry="44" fill="#09091a"/>
<path d="M1150 1131 L1161 960 Q1230 933 1299 960 L1310 1131 Z" fill="#09091a"/>
<ellipse cx="1306" cy="862" rx="50" ry="57" fill="#20307e" opacity="0.09" filter="url(#b2)"/>
<ellipse cx="1306" cy="864" rx="48" ry="55" fill="#09091a"/>
<path d="M1205 1131 L1219 930 Q1306 897 1392 930 L1407 1131 Z" fill="#09091a"/>
<ellipse cx="1411" cy="884" rx="51" ry="59" fill="#20307e" opacity="0.0" filter="url(#b2)"/>
<ellipse cx="1411" cy="886" rx="50" ry="57" fill="#09091a"/>
<path d="M1306 1131 L1321 955 Q1411 920 1501 955 L1516 1131 Z" fill="#09091a"/>
<ellipse cx="1544" cy="885" rx="57" ry="65" fill="#20307e" opacity="0.36" filter="url(#b2)"/>
<ellipse cx="1544" cy="887" rx="55" ry="64" fill="#09091a"/>
<path d="M1428 1131 L1444 963 Q1544 925 1643 963 L1660 1131 Z" fill="#09091a"/>
<ellipse cx="1679" cy="904" rx="58" ry="66" fill="#20307e" opacity="0.0" filter="url(#b2)"/>
<ellipse cx="1679" cy="906" rx="56" ry="65" fill="#09091a"/>
<path d="M1562 1131 L1578 983 Q1679 945 1781 983 L1797 1131 Z" fill="#09091a"/>
<ellipse cx="1777" cy="879" rx="57" ry="66" fill="#20307e" opacity="0.0" filter="url(#b2)"/>
<ellipse cx="1777" cy="881" rx="56" ry="64" fill="#09091a"/>
<path d="M1660 1131 L1676 959 Q1777 920 1878 959 L1894 1131 Z" fill="#09091a"/>
<ellipse cx="1876" cy="859" rx="61" ry="70" fill="#20307e" opacity="0.36" filter="url(#b2)"/>
<ellipse cx="1876" cy="861" rx="60" ry="69" fill="#09091a"/>
<path d="M1750 1131 L1768 944 Q1876 903 1984 944 L2002 1131 Z" fill="#09091a"/>
<ellipse cx="2002" cy="872" rx="44" ry="50" fill="#20307e" opacity="0.09" filter="url(#b2)"/>
<ellipse cx="2002" cy="874" rx="42" ry="49" fill="#09091a"/>
<path d="M1913 1131 L1926 933 Q2002 903 2078 933 L2091 1131 Z" fill="#09091a"/>
<ellipse cx="-37" cy="1007" rx="56" ry="64" fill="#1e3090" opacity="0.0" filter="url(#b2)"/>
<ellipse cx="-37" cy="1009" rx="55" ry="63" fill="#080816"/>
<path d="M-151 1131 L-135 1084 Q-37 1047 62 1084 L78 1131 Z" fill="#080816"/>
<ellipse cx="116" cy="955" rx="59" ry="67" fill="#1e3090" opacity="0.42" filter="url(#b2)"/>
<ellipse cx="116" cy="957" rx="57" ry="66" fill="#080816"/>
<path d="M-5 1131 L12 1037 Q116 997 219 1037 L236 1131 Z" fill="#080816"/>
<ellipse cx="261" cy="970" rx="65" ry="74" fill="#1e3090" opacity="0.0" filter="url(#b2)"/>
<ellipse cx="261" cy="972" rx="63" ry="73" fill="#080816"/>
<path d="M128 1131 L147 1059 Q261 1015 375 1059 L394 1131 Z" fill="#080816"/>
<ellipse cx="410" cy="992" rx="64" ry="73" fill="#1e3090" opacity="0.0" filter="url(#b2)"/>
<ellipse cx="410" cy="994" rx="62" ry="71" fill="#080816"/>
<path d="M280 1131 L298 1080 Q410 1037 522 1080 L540 1131 Z" fill="#080816"/>
<ellipse cx="534" cy="963" rx="61" ry="70" fill="#1e3090" opacity="0.42" filter="url(#b2)"/>
<ellipse cx="534" cy="965" rx="59" ry="68" fill="#080816"/>
<path d="M410 1131 L428 1047 Q534 1006 641 1047 L659 1131 Z" fill="#080816"/>
<ellipse cx="643" cy="967" rx="54" ry="62" fill="#1e3090" opacity="0.0" filter="url(#b2)"/>
<ellipse cx="643" cy="969" rx="53" ry="61" fill="#080816"/>
<path d="M531 1131 L547 1042 Q643 1005 738 1042 L754 1131 Z" fill="#080816"/>
<ellipse cx="750" cy="954" rx="67" ry="77" fill="#1e3090" opacity="0.0" filter="url(#b2)"/>
<ellipse cx="750" cy="956" rx="65" ry="75" fill="#080816"/>
<path d="M613 1131 L632 1046 Q750 1001 868 1046 L887 1131 Z" fill="#080816"/>
<ellipse cx="889" cy="1014" rx="70" ry="80" fill="#1e3090" opacity="0.0" filter="url(#b2)"/>
<ellipse cx="889" cy="1016" rx="69" ry="79" fill="#080816"/>
<path d="M745 1131 L766 1110 Q889 1063 1012 1110 L1033 1131 Z" fill="#080816"/>
<ellipse cx="1050" cy="989" rx="60" ry="69" fill="#1e3090" opacity="0.0" filter="url(#b2)"/>
<ellipse cx="1050" cy="991" rx="58" ry="67" fill="#080816"/>
<path d="M927 1131 L945 1072 Q1050 1031 1155 1072 L1172 1131 Z" fill="#080816"/>
<ellipse cx="1167" cy="972" rx="66" ry="76" fill="#1e3090" opacity="0.105" filter="url(#b2)"/>
<ellipse cx="1167" cy="974" rx="65" ry="74" fill="#080816"/>
<path d="M1032 1131 L1051 1064 Q1167 1019 1284 1064 L1303 1131 Z" fill="#080816"/>
<ellipse cx="1306" cy="987" rx="87" ry="100" fill="#1e3090" opacity="0.21" filter="url(#b2)"/>
<ellipse cx="1306" cy="989" rx="86" ry="99" fill="#080816"/>
<path d="M1126 1131 L1152 1108 Q1306 1048 1460 1108 L1486 1131 Z" fill="#080816"/>
<ellipse cx="1543" cy="985" rx="73" ry="84" fill="#1e3090" opacity="0.0" filter="url(#b2)"/>
<ellipse cx="1543" cy="987" rx="72" ry="83" fill="#080816"/>
<path d="M1392 1131 L1413 1086 Q1543 1037 1672 1086 L1694 1131 Z" fill="#080816"/>
<ellipse cx="1686" cy="960" rx="62" ry="71" fill="#1e3090" opacity="0.0" filter="url(#b2)"/>
<ellipse cx="1686" cy="962" rx="61" ry="70" fill="#080816"/>
<path d="M1558 1131 L1576 1046 Q1686 1004 1795 1046 L1814 1131 Z" fill="#080816"/>
<ellipse cx="1858" cy="958" rx="74" ry="85" fill="#1e3090" opacity="0.0" filter="url(#b2)"/>
<ellipse cx="1858" cy="960" rx="72" ry="83" fill="#080816"/>
<path d="M1706 1131 L1728 1060 Q1858 1010 1989 1060 L2011 1131 Z" fill="#080816"/>
<ellipse cx="2032" cy="1001" rx="76" ry="88" fill="#1e3090" opacity="0.105" filter="url(#b2)"/>
<ellipse cx="2032" cy="1003" rx="75" ry="86" fill="#080816"/>
<path d="M1874 1131 L1897 1107 Q2032 1055 2166 1107 L2189 1131 Z" fill="#080816"/>
<ellipse cx="-6" cy="1098" rx="87" ry="100" fill="#1e3298" opacity="0.0" filter="url(#b2)"/>
<ellipse cx="-6" cy="1100" rx="85" ry="98" fill="#070714"/>
<path d="M-186 1131 L-160 1218 Q-6 1159 147 1218 L173 1131 Z" fill="#070714"/>
<ellipse cx="198" cy="1129" rx="97" ry="111" fill="#1e3298" opacity="0.0" filter="url(#b2)"/>
<ellipse cx="198" cy="1131" rx="95" ry="109" fill="#070714"/>
<path d="M-2 1131 L27 1262 Q198 1196 369 1262 L398 1131 Z" fill="#070714"/>
<ellipse cx="416" cy="1120" rx="120" ry="138" fill="#1e3298" opacity="0.21" filter="url(#b2)"/>
<ellipse cx="416" cy="1122" rx="118" ry="136" fill="#070714"/>
<path d="M167 1131 L203 1285 Q416 1203 629 1285 L665 1131 Z" fill="#070714"/>
<ellipse cx="705" cy="1095" rx="81" ry="93" fill="#1e3298" opacity="0.0" filter="url(#b2)"/>
<ellipse cx="705" cy="1097" rx="79" ry="91" fill="#070714"/>
<path d="M538 1131 L562 1207 Q705 1152 848 1207 L872 1131 Z" fill="#070714"/>
<ellipse cx="883" cy="1096" rx="117" ry="134" fill="#1e3298" opacity="0.21" filter="url(#b2)"/>
<ellipse cx="883" cy="1098" rx="115" ry="133" fill="#070714"/>
<path d="M641 1131 L676 1257 Q883 1177 1091 1257 L1125 1131 Z" fill="#070714"/>
<ellipse cx="1101" cy="1100" rx="87" ry="100" fill="#1e3298" opacity="0.0" filter="url(#b2)"/>
<ellipse cx="1101" cy="1102" rx="85" ry="98" fill="#070714"/>
<path d="M921 1131 L947 1220 Q1101 1161 1254 1220 L1280 1131 Z" fill="#070714"/>
<ellipse cx="1294" cy="1107" rx="86" ry="99" fill="#1e3298" opacity="0.42" filter="url(#b2)"/>
<ellipse cx="1294" cy="1109" rx="85" ry="98" fill="#070714"/>
<path d="M1115 1131 L1141 1226 Q1294 1167 1447 1226 L1472 1131 Z" fill="#070714"/>
<ellipse cx="1482" cy="1118" rx="80" ry="92" fill="#1e3298" opacity="0.0" filter="url(#b2)"/>
<ellipse cx="1482" cy="1120" rx="79" ry="90" fill="#070714"/>
<path d="M1317 1131 L1340 1229 Q1482 1174 1623 1229 L1647 1131 Z" fill="#070714"/>
<ellipse cx="1709" cy="1076" rx="116" ry="133" fill="#1e3298" opacity="0.0" filter="url(#b2)"/>
<ellipse cx="1709" cy="1078" rx="114" ry="132" fill="#070714"/>
<path d="M1469 1131 L1503 1236 Q1709 1157 1915 1236 L1949 1131 Z" fill="#070714"/>
<ellipse cx="2041" cy="1143" rx="113" ry="129" fill="#1e3298" opacity="0.0" filter="url(#b2)"/>
<ellipse cx="2041" cy="1145" rx="111" ry="128" fill="#070714"/>
<path d="M1808 1131 L1841 1298 Q2041 1221 2241 1298 L2275 1131 Z" fill="#070714"/>
<ellipse cx="150" cy="900" rx="220" ry="160" fill="#1a2c78" opacity="0.35" filter="url(#b60)"/>
<ellipse cx="420" cy="1000" rx="200" ry="120" fill="#1a2c78" opacity="0.25" filter="url(#b60)"/>
<ellipse cx="1550" cy="960" rx="260" ry="140" fill="#1a2c78" opacity="0.3" filter="url(#b60)"/>
<ellipse cx="1850" cy="1020" rx="200" ry="160" fill="#1a2c78" opacity="0.35" filter="url(#b60)"/>
<ellipse cx="1200" cy="880" rx="200" ry="100" fill="#1a2c78" opacity="0.25" filter="url(#b60)"/>
<ellipse cx="800" cy="860" rx="220" ry="80" fill="#1a2c78" opacity="0.25" filter="url(#b60)"/>
<rect x="0" y="700" width="1996" height="431" fill="url(#cfade)"/>
<path d="M-29 944 A90 103 0 0 1 105 882" fill="none" stroke="#4a78f0" stroke-width="5" opacity="0.55" filter="url(#b2)"/>
<path d="M114 879 A60 69 0 0 1 216 861" fill="none" stroke="#4a78f0" stroke-width="4" opacity="0.45" filter="url(#b2)"/>
<path d="M269 959 A80 92 0 0 1 399 970" fill="none" stroke="#4a78f0" stroke-width="4" opacity="0.35" filter="url(#b2)"/>
<path d="M885 903 A80 92 0 0 1 1000 861" fill="none" stroke="#4a78f0" stroke-width="4" opacity="0.35" filter="url(#b2)"/>
<path d="M1184 856 A70 80 0 0 1 1304 835" fill="none" stroke="#4a78f0" stroke-width="5" opacity="0.5" filter="url(#b2)"/>
<path d="M1291 944 A90 103 0 0 1 1396 871" fill="none" stroke="#4a78f0" stroke-width="4" opacity="0.45" filter="url(#b2)"/>
<path d="M1485 933 A80 92 0 0 1 1629 920" fill="none" stroke="#4a78f0" stroke-width="5" opacity="0.55" filter="url(#b2)"/>
<path d="M1659 885 A70 80 0 0 1 1774 875" fill="none" stroke="#4a78f0" stroke-width="4" opacity="0.5" filter="url(#b2)"/>
<path d="M1854 856 A70 80 0 0 1 1981 845" fill="none" stroke="#4a78f0" stroke-width="5" opacity="0.55" filter="url(#b2)"/>
<path d="M1615 1029 A90 103 0 0 1 1745 982" fill="none" stroke="#4a78f0" stroke-width="4" opacity="0.4" filter="url(#b2)"/>
<path d="M1061 960 A80 92 0 0 1 1191 949" fill="none" stroke="#4a78f0" stroke-width="3" opacity="0.35" filter="url(#b2)"/>
<rect x="0" y="520" width="1996" height="611" fill="url(#hvig)" mask="url(#hvmask)"/>
<rect width="1996" height="1131" fill="url(#vig)"/>
</symbol></defs></svg>
<div id="win">
  <!-- tab strip -->
  <div class="a" style="left:21px;top:19px;width:82px;height:82px;border-radius:22px;background:#878a93"></div>
  <svg class="a" style="left:42px;top:40px" width="40" height="40" viewBox="0 0 40 40"><path d="M10.5 15.5 L20 25 L29.5 15.5" fill="none" stroke="#2f3133" stroke-width="4.5"/></svg>

  <div class="ul" style="left:127px;width:141px;background:#6a3399"></div>
  <div class="ul" style="left:310px;width:161px;background:#9b7415"></div>
  <div class="ul" style="left:513px;width:257px;background:#2656a1"></div>
  <div class="chip" style="left:121px;width:153px;background:#6a3399;color:#aaa5ae">Muzika</div>
  <div class="chip" style="left:304px;width:173px;background:#9b7415;color:#1e1e1e">Mokykla</div>
  <div class="chip" style="left:507px;width:269px;background:#2656a1;color:#a3a8b0;letter-spacing:0.9px">Bendruomenė</div>

  <!-- active tab -->
  <svg class="a" style="left:786px;top:19px" width="713" height="101" viewBox="0 0 713 101">
    <path d="M0 101 Q32 101 32 69 L32 30 Q32 0 62 0 L651 0 Q681 0 681 30 L681 69 Q681 101 713 101 Z" fill="#8f9191"/>
  </svg>
  <svg class="a" style="left:844px;top:45px" width="43" height="30" viewBox="0 0 43 30"><rect x="0" y="0" width="43" height="30" rx="8" fill="#a51414"/><path d="M16 8 L29 15 L16 22 Z" fill="#8f9191"/></svg>
  <div class="txt" style="left:907px;top:42px;font-size:36px;color:#202124">YouTube</div>
  <svg class="a" style="left:1404px;top:44px" width="32" height="32" viewBox="0 0 32 32"><path d="M5 5 L27 27 M27 5 L5 27" stroke="#202124" stroke-width="4.5"/></svg>
  <svg class="a" style="left:1515px;top:44px" width="32" height="32" viewBox="0 0 32 32"><path d="M16 3 V29 M3 16 H29" stroke="#2f3133" stroke-width="4.5"/></svg>

  <!-- window controls -->
  <div class="a" style="left:2532px;top:57px;width:36px;height:6px;background:#17469a"></div>
  <div class="a" style="left:2652px;top:41px;width:37px;height:37px;border:6px solid #17469a"></div>
  <svg class="a" style="left:2766px;top:40px" width="40" height="40" viewBox="0 0 40 40"><path d="M4.5 4.5 L35.5 35.5 M35.5 4.5 L4.5 35.5" stroke="#17469a" stroke-width="5.5"/></svg>

  <!-- toolbar -->
  <div class="a" style="left:0;top:119px;width:2848px;height:115px;background:#8f9191;border-radius:12px 12px 0 0"></div>
  <div class="a" style="left:0;top:232px;width:2848px;height:2px;background:#7d7f80"></div>
  <div class="a" style="left:298px;top:135px;width:2200px;height:82px;border-radius:41px;background:#87898b"></div>
  <div class="a" style="left:310px;top:145px;width:58px;height:58px;border-radius:29px;background:#8e9092"></div>
  <div class="txt" style="left:390px;top:156px;font-size:36px;color:#2a2b2d">youtube.com/watch/</div>
  <!-- nav icons -->
  <svg class="a" style="left:36px;top:155px" width="40" height="40" viewBox="532 435 40 40"><path d="M569 455 H539 M554.2 439.7 L538.8 455 L554.2 470.4" fill="none" stroke="#2f3133" stroke-width="3"/></svg>
  <svg class="a" style="left:124px;top:155px" width="40" height="40" viewBox="620 435 40 40"><path d="M625.5 455 H655.5 M640.9 439.7 L656.2 455 L640.9 470.4" fill="none" stroke="#626466" stroke-width="3"/></svg>
  <svg class="a" style="left:214px;top:155px" width="40" height="40" viewBox="710 435 40 40"><path d="M739.4 443.8 A15.3 15.3 0 1 0 744 460.6" fill="none" stroke="#2f3133" stroke-width="3"/><path d="M733.8 450.6 H745.7 V439" fill="none" stroke="#2f3133" stroke-width="3"/></svg>
  <svg class="a" style="left:319px;top:154px" width="40" height="40" viewBox="0 0 40 40"><circle cx="11" cy="13.4" r="4.4" fill="none" stroke="#2f3133" stroke-width="2.6"/><path d="M21.5 13.4 H34.8" stroke="#2f3133" stroke-width="2.6"/><circle cx="29.9" cy="28.7" r="4.4" fill="none" stroke="#2f3133" stroke-width="2.6"/><path d="M6.2 28.7 H18.7" stroke="#2f3133" stroke-width="2.6"/></svg>
  <svg class="a" style="left:2422px;top:156px" width="42" height="42" viewBox="0 0 42 42"><path transform="translate(21.5 22.5) scale(0.9) translate(-21 -22)" d="M21 4 L26 16.5 L39.5 17.5 L29 26 L32.5 39 L21 31.5 L9.5 39 L13 26 L2.5 17.5 L16 16.5 Z" fill="none" stroke="#2f3133" stroke-width="3" stroke-linejoin="miter"/></svg>
  <svg class="a" style="left:2534px;top:148px" width="52" height="52" viewBox="3030 428 52 52"><path d="M3040.5 440.5 H3072.5 V472 H3040.5 V461.5 A5.5 5.5 0 0 0 3040.5 450.5 Z" fill="none" stroke="#2f3133" stroke-width="3.2" stroke-linejoin="round"/><path d="M3051 440.5 A6 6 0 0 1 3063 440.5 Z M3072.5 450 A6 6 0 0 1 3072.5 462 Z" fill="#2f3133" stroke="#2f3133" stroke-width="1.5"/></svg>
  <!-- avatar -->
  <svg class="a" style="left:2759px;top:151px" width="50" height="50" viewBox="0 0 50 50"><defs><clipPath id="avc"><circle cx="25.4" cy="25" r="24.4"/></clipPath><filter id="avb"><feGaussianBlur stdDeviation="0.8"/></filter></defs><g clip-path="url(#avc)"><rect width="50" height="50" fill="#959597"/><g filter="url(#avb)"><rect x="1" y="6" width="14" height="32" rx="5" fill="#808083"/><rect x="35" y="7" width="15" height="31" rx="5" fill="#828285"/><path d="M3 50 Q5 33 20 32 L30 32 Q45 33 47 50 Z" fill="#a9a9aa"/><path d="M19.8 33 L24.8 49 L29.4 33 Z" fill="#54382f"/><path d="M16 17 Q16 8 25 8 Q34 8 34.3 17 Q34.5 28 29 33 Q25 35.5 21 33 Q15.5 28 16 17 Z" fill="#5a4038"/><path d="M14 21 Q12 3 25 2 Q38 3 36.5 20 Q35 10 25 9 Q16 10 14 21 Z" fill="#2a2828"/><ellipse cx="21.5" cy="20.5" rx="1.6" ry="1.1" fill="#251a18"/><ellipse cx="29" cy="20.5" rx="1.6" ry="1.1" fill="#251a18"/><ellipse cx="25.2" cy="28" rx="2.6" ry="1.2" fill="#b8aca6"/></g></g></svg>
  <!-- content -->
  <div class="a" style="left:0;top:234px;width:2848px;height:1366px;background:#909192"></div>
  <!-- youtube header -->
  <div class="a" style="left:49px;top:265px;width:31px;height:2px;background:#2a2b2d"></div>
  <div class="a" style="left:49px;top:276px;width:31px;height:2px;background:#2a2b2d"></div>
  <div class="a" style="left:49px;top:287px;width:31px;height:2px;background:#2a2b2d"></div>
  <svg class="a" style="left:126px;top:261px" width="49" height="34" viewBox="0 0 49 34"><rect x="0" y="0" width="49" height="34" rx="9" fill="#9e1313"/><path d="M19 9.5 L32 17 L19 24.5 Z" fill="#909192"/></svg>
  <div class="txt" style="left:180px;top:258px;font-size:38px;font-weight:bold;color:#1f1f1f;transform:scaleX(0.68);transform-origin:0 0;letter-spacing:-1.5px;-webkit-text-stroke:1.2px #1f1f1f">YouTube</div>
  <div class="a" style="left:936px;top:244px;width:1023px;height:68px;border-radius:34px;border:2px solid #808182"></div>
  <div class="a" style="left:1850px;top:245px;width:2px;height:66px;background:#808182"></div>
  <div class="txt" style="left:964px;top:264px;font-size:28px;color:#66676a">Ieškoti</div>
  <svg class="a" style="left:1886px;top:260px" width="36" height="36" viewBox="2382 540 36 36"><circle cx="2398.8" cy="556" r="12.6" fill="none" stroke="#1f1f21" stroke-width="2"/><path d="M2407.8 565.2 L2415 572.6" stroke="#1f1f21" stroke-width="2"/></svg>
  <div class="a" style="left:1988px;top:242px;width:68px;height:68px;border-radius:34px;background:#888a8b"></div>
  <div class="a" style="left:2016px;top:263px;width:9.5px;height:26px;border-radius:5px;background:#1f1f1f"></div>
  <svg class="a" style="left:2006px;top:275px" width="30" height="30" viewBox="0 0 30 30"><path d="M4 4 A11 11 0 0 0 26 4 M15 15 V26" fill="none" stroke="#1f1f1f" stroke-width="2"/></svg>

  <!-- sidebar skeleton -->
  <div class="a" style="left:2152px;top:426.0px;width:286px;height:166px;border-radius:12px;background:#87888a"></div>
  <div class="a" style="left:2152px;top:599.5px;width:286px;height:166px;border-radius:12px;background:#87888a"></div>
  <div class="a" style="left:2152px;top:783.0px;width:286px;height:166px;border-radius:12px;background:#87888a"></div>
  <div class="a" style="left:2152px;top:961.5px;width:286px;height:166px;border-radius:12px;background:#87888a"></div>
  <div class="a" style="left:2152px;top:1140.0px;width:286px;height:166px;border-radius:12px;background:#87888a"></div>
  <div class="a" style="left:2152px;top:1318.5px;width:286px;height:166px;border-radius:12px;background:#87888a"></div>
  <div class="a" style="left:2152px;top:1497.0px;width:286px;height:166px;border-radius:12px;background:#87888a"></div>
  <div class="a" style="left:2447px;top:786.0px;width:287px;height:32px;border-radius:16.0px;background:#87888a"></div>
  <div class="a" style="left:2447px;top:823.0px;width:343px;height:33px;border-radius:16.5px;background:#87888a"></div>
  <div class="a" style="left:2447px;top:861.0px;width:152px;height:26px;border-radius:13.0px;background:#87888a"></div>
  <div class="a" style="left:2447px;top:893.0px;width:228px;height:25px;border-radius:12.5px;background:#87888a"></div>
  <div class="a" style="left:2447px;top:961.5px;width:287px;height:31px;border-radius:15.5px;background:#87888a"></div>
  <div class="a" style="left:2447px;top:998.5px;width:343px;height:33px;border-radius:16.5px;background:#87888a"></div>
  <div class="a" style="left:2447px;top:1039.5px;width:152px;height:26px;border-radius:13.0px;background:#87888a"></div>
  <div class="a" style="left:2447px;top:1073.5px;width:251px;height:25px;border-radius:12.5px;background:#87888a"></div>
  <div class="a" style="left:2447px;top:1150.0px;width:287px;height:32px;border-radius:16.0px;background:#87888a"></div>
  <div class="a" style="left:2447px;top:1187.0px;width:208px;height:26px;border-radius:13.0px;background:#87888a"></div>
  <div class="a" style="left:2447px;top:1323.5px;width:356px;height:32px;border-radius:16.0px;background:#87888a"></div>
  <div class="a" style="left:2447px;top:1362.5px;width:307px;height:31px;border-radius:15.5px;background:#87888a"></div>
  <div class="a" style="left:2447px;top:1400.5px;width:152px;height:25px;border-radius:12.5px;background:#87888a"></div>
  <div class="a" style="left:2447px;top:1430.5px;width:334px;height:26px;border-radius:13.0px;background:#87888a"></div>
  <div class="a" style="left:2447px;top:1497.0px;width:334px;height:32px;border-radius:16.0px;background:#87888a"></div>
  <div class="a" style="left:2447px;top:1535.0px;width:307px;height:31px;border-radius:15.5px;background:#87888a"></div>
  <div class="a" style="left:2447px;top:1574.0px;width:152px;height:26px;border-radius:13.0px;background:#87888a"></div>
  <div class="a" style="left:2447px;top:1607.0px;width:228px;height:25px;border-radius:12.5px;background:#87888a"></div>

  <!-- video -->
  <div class="a" style="left:118px;top:360px;width:1996px;height:1131px;border-radius:16px;overflow:hidden;background:#1a1830">
    <svg width="1996" height="1131" viewBox="0 0 1996 1131"><use href="#scene" width="1996" height="1131"/><rect width="1996" height="1131" fill="#202020" opacity="0.5"/></svg>
    <div class="a" style="left:37px;top:962px;width:805px;height:121px;border-radius:61px;background:#202125"></div>
    <svg class="a" style="left:100px;top:995px" width="64" height="54" viewBox="714 1635 64 54"><path d="M722.5 1650.8 V1648 Q722.5 1644.35 726 1644.35 H764 Q767.5 1644.35 767.5 1648 V1677 Q767.5 1680.6 764 1680.6 H750.5" fill="none" stroke="#f4f4f6" stroke-width="5.2" stroke-linecap="round"/><path d="M722.5 1669.6 A11 11 0 0 1 733.5 1680.6 M722.5 1660.6 A20 20 0 0 1 742.5 1680.6" fill="none" stroke="#f4f4f6" stroke-width="5.2" stroke-linecap="round"/><path d="M720 1676 A7.2 7.2 0 0 1 727.2 1683.2 H720 Z" fill="#f4f4f6"/></svg>
    <div class="txt" style="left:191px;top:1005px;font-size:37px;color:#f2f2f2">Leidžiama per televizorių svetainėje</div>
  </div>
  <div class="txt" style="left:123px;top:1514px;font-size:40.5px;color:#2b2c2f">Tiesioginis koncertas – Palm Springsas</div>
</div>
<!-- media button (above dim) -->
<div class="a" style="left:3116px;top:399px;width:114px;height:114px;border-radius:57px;background:#e8e9ed;box-shadow:0 4px 18px rgba(0,0,0,0.25)"></div>
<svg class="a" style="left:3140px;top:436px" width="66" height="50" viewBox="3140 436 66 50"><path d="M3146.3 444.2 H3180 M3146.3 455.5 H3180 M3146.3 466.5 H3168.6" stroke="#000" stroke-width="5.2"/><path d="M3189 474 V444.2 H3199.8" fill="none" stroke="#000" stroke-width="5"/><circle cx="3182.7" cy="472.7" r="8.2" fill="#000"/></svg>

<!-- popup -->
<div class="a" style="left:2508px;top:557px;width:801px;height:471px;border-radius:11px 24px 24px 24px;overflow:hidden;background:#fff;box-shadow:0 14px 50px rgba(0,0,0,0.45)">
  <div class="a" style="left:0;top:0;width:801px;height:265px;background:#050810"></div>
  <svg class="a" style="left:435px;top:0" width="366" height="265" viewBox="0 0 366 265"><g transform="translate(-100 -21) scale(0.285)"><use href="#scene" width="1996" height="1131"/></g></svg>
  <div class="a" style="left:41px;top:39px;width:57px;height:16px;border-radius:8px;background:#cdd0f8"></div>
  <div class="a" style="left:41px;top:88px;width:257px;height:16px;border-radius:8px;background:#cdd0f8"></div>
  <div class="a" style="left:41px;top:115px;width:133px;height:17px;border-radius:8.5px;background:#cdd0f8"></div>
  <svg class="a" style="left:32px;top:163px" width="340" height="80" viewBox="2540 720 340 80">
    <g fill="#cdd0f8" stroke="#cdd0f8" stroke-width="3.2" stroke-linejoin="round">
      <path d="M2558.5 760.5 L2572.5 750.6 V770.4 Z M2578.8 760.5 L2593.2 750.6 V770.4 Z"/>
      <path d="M2646.9 748.7 V772.7 L2668.4 760.7 Z"/>
      <path d="M2717.2 750.6 V770.4 L2731.4 760.5 Z M2737.6 750.6 V770.4 L2751.6 760.5 Z"/>
    </g>
    <rect x="2784" y="735.6" width="4" height="50" rx="2" fill="#cdd0f8"/>
    <g fill="none" stroke="#cdd0f8" stroke-width="4">
      <path d="M2835.6 741.8 H2858.8 V759.6"/>
      <path d="M2817.9 759.6 V773.5 H2838.3"/>
      <path d="M2816 740 L2829 753"/>
      <path d="M2829 739.8 V753.7 H2815.9"/>
    </g>
    <rect x="2841.6" y="762.9" width="19.2" height="12.5" fill="#cdd0f8"/>
  </svg>
  <svg class="a" style="left:46px;top:298px" width="48" height="38" viewBox="0 0 48 38"><rect x="2.5" y="2.5" width="42" height="33" rx="2.5" fill="none" stroke="#1f1f1f" stroke-width="3.4"/><path d="M10 15 H14 M17 15 H38 M10 22 H31 M34 22 H38" stroke="#1f1f1f" stroke-width="3.5"/></svg>
  <div class="txt" style="left:124px;top:299px;font-size:34.5px;color:#1f1f1f">Subtitrai realiuoju laiku</div>
  <svg class="a" style="left:704px;top:302px" width="54" height="31" viewBox="0 0 54 31"><rect x="3" y="3" width="47" height="24" rx="12" fill="none" stroke="#000" stroke-width="4.5"/><circle cx="15" cy="15" r="6.5" fill="#000"/></svg>
  <div class="a" style="left:0;top:368px;width:801px;height:1.5px;background:#7c88b2"></div>
  <svg class="a" style="left:45px;top:396px" width="50" height="50" viewBox="0 0 24 24"><path d="M19.14 12.94c.04-.3.06-.61.06-.94 0-.32-.02-.64-.07-.94l2.03-1.58a.49.49 0 0 0 .12-.61l-1.92-3.32a.488.488 0 0 0-.59-.22l-2.39.96c-.5-.38-1.03-.7-1.62-.94l-.36-2.54a.484.484 0 0 0-.48-.41h-3.84c-.24 0-.43.17-.47.41l-.36 2.54c-.59.24-1.13.57-1.62.94l-2.39-.96a.488.488 0 0 0-.59.22L2.74 8.87c-.12.21-.08.47.12.61l2.03 1.58c-.05.3-.09.63-.09.94s.02.64.07.94l-2.03 1.58a.49.49 0 0 0-.12.61l1.92 3.32c.12.22.37.29.59.22l2.39-.96c.5.38 1.03.7 1.62.94l.36 2.54c.05.24.24.41.48.41h3.84c.24 0 .44-.17.47-.41l.36-2.54c.59-.24 1.13-.56 1.62-.94l2.39.96c.22.08.47 0 .59-.22l1.92-3.32c.12-.22.07-.47-.12-.61l-2.01-1.58z" fill="none" stroke="#1f1f1f" stroke-width="1.9"/><circle cx="12" cy="12" r="2.9" fill="#1f1f1f"/></svg>
  <div class="txt" style="left:124px;top:402px;font-size:35px;color:#1f1f1f">Subtitrų nustatymai</div>
  <svg class="a" style="left:722px;top:398px" width="46" height="46" viewBox="0 0 46 46"><path d="M20 5 H5 V41 H41 V26" fill="none" stroke="#1f1f1f" stroke-width="4"/><path d="M26 5 H41 V20 M41 5 L17 29" fill="none" stroke="#1f1f1f" stroke-width="4"/></svg>
</div>


<div class="a" style="left:496px;top:280px;width:8px;height:16px;background:#000"></div>
<div class="a" style="left:3336px;top:280px;width:8px;height:16px;background:#000"></div>
<div class="a" style="left:496px;top:1864px;width:8px;height:16px;background:#000"></div>
<div class="a" style="left:496px;top:1872px;width:16px;height:8px;background:#000"></div>
<div class="a" style="left:3336px;top:1864px;width:8px;height:16px;background:#000"></div>
<div class="a" style="left:3328px;top:1872px;width:16px;height:8px;background:#000"></div>
</body></html>
